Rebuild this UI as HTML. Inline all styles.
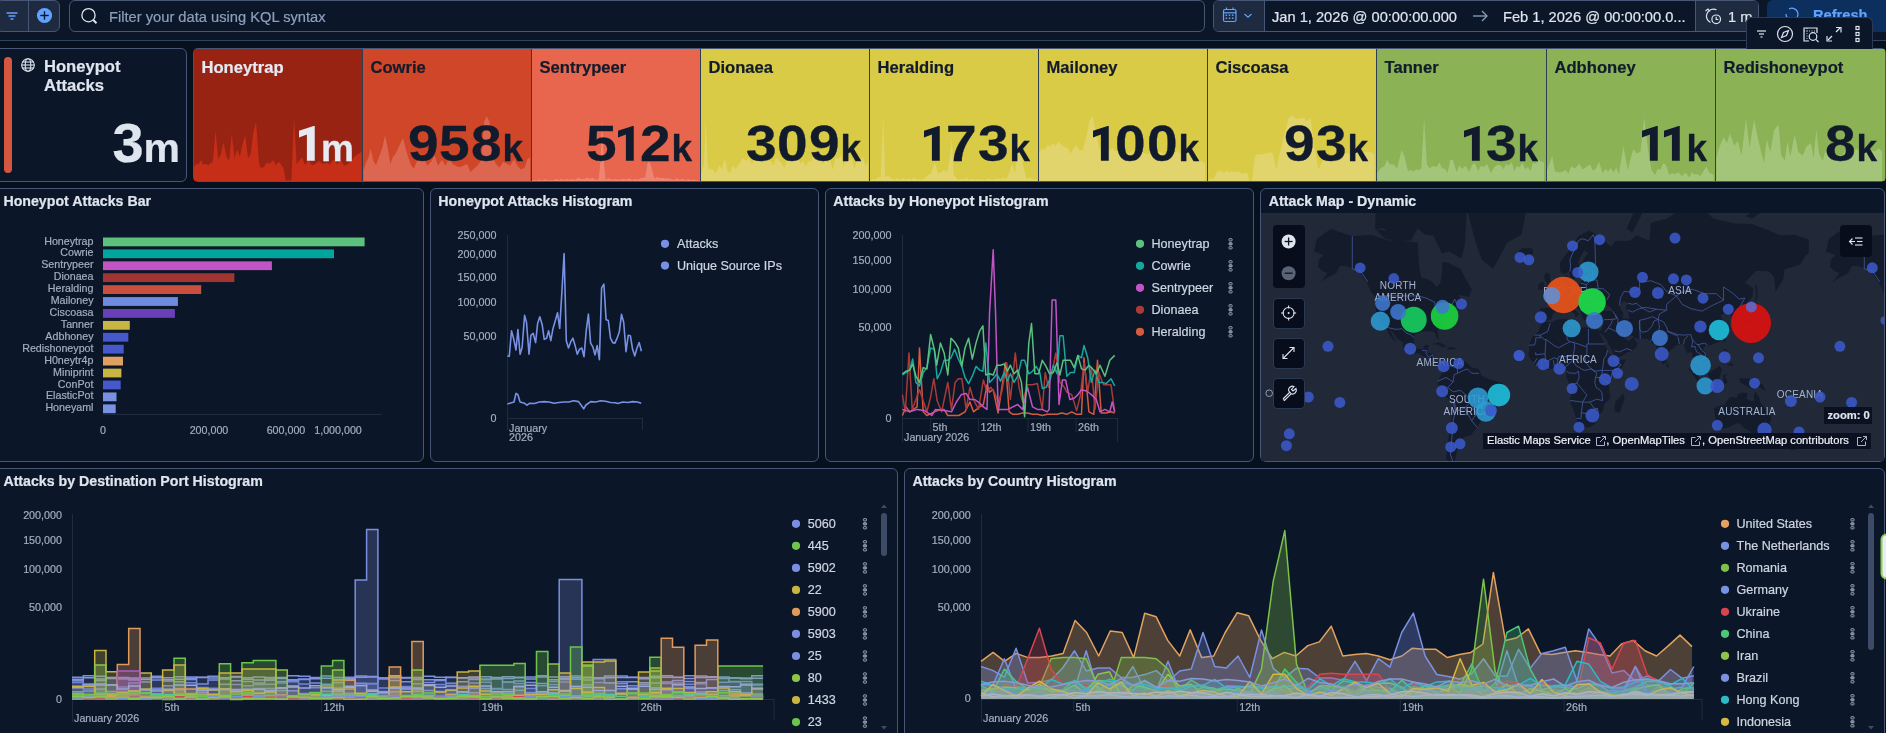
<!DOCTYPE html><html><head><meta charset="utf-8"><style>
*{box-sizing:border-box;margin:0;padding:0}
html,body{width:1886px;height:733px;overflow:hidden;background:#07101f;font-family:"Liberation Sans",sans-serif;}
.abs{position:absolute}
.panel{position:absolute;background:#0b1628;border:1px solid #465674;border-radius:6px;overflow:hidden}
.ptitle{position:absolute;font-weight:700;font-size:14.2px;color:#dfe5ef;white-space:nowrap}
svg{position:absolute;left:0;top:0;overflow:visible}
.t{position:absolute;white-space:nowrap}
body{-webkit-font-smoothing:antialiased}
.t,.ptitle{-webkit-text-stroke:0.2px currentColor}
#root{position:absolute;left:0;top:0;width:1886px;height:733px;will-change:transform}
</style></head><body><div id="root">

<div class="abs" style="left:0;top:0;width:1886px;height:41px;background:#0b1628;border-bottom:1px solid #34435d"></div>
<div class="abs" style="left:-4px;top:0px;width:64px;height:32px;background:#1d2a40;border:1px solid #465674;border-radius:6px"></div>
<div class="abs" style="left:28px;top:0;width:1px;height:31px;background:#465674"></div>
<svg width="60" height="31"><g stroke="#61a2ff" stroke-width="1.4" stroke-linecap="round"><line x1="7" y1="13" x2="17" y2="13"/><line x1="9" y1="16" x2="15" y2="16"/><line x1="11" y1="19" x2="13" y2="19"/></g><circle cx="44.5" cy="15.5" r="7.6" fill="#61a2ff"/><g stroke="#0b1628" stroke-width="1.4"><line x1="40.3" y1="15.5" x2="48.7" y2="15.5"/><line x1="44.5" y1="11.3" x2="44.5" y2="19.7"/></g></svg>
<div class="abs" style="left:69px;top:0px;width:1136px;height:32px;background:#0b1628;border:1px solid #465674;border-radius:6px"></div>
<svg width="120" height="31"><circle cx="88.5" cy="15.2" r="6.6" fill="none" stroke="#dfe5ef" stroke-width="1.3"/><line x1="93.3" y1="20" x2="96.5" y2="23.3" stroke="#dfe5ef" stroke-width="2"/></svg>
<div class="t" style="left:109px;top:9px;font-size:14.7px;color:#8e9fbc">Filter your data using KQL syntax</div>
<div class="abs" style="left:1213px;top:0px;width:546px;height:32px;background:#0b1628;border:1px solid #465674;border-radius:6px;overflow:hidden"><div class="abs" style="left:0;top:0;width:51px;height:32px;background:#1d2a40;border-right:1px solid #465674"></div><div class="abs" style="left:481px;top:0;width:64px;height:32px;background:#1d2a40;border-left:1px solid #465674"></div></div>
<svg width="1886" height="31"><g fill="none" stroke="#61a2ff" stroke-width="1.2"><rect x="1223.5" y="9.5" width="12.5" height="12" rx="1.5"/><line x1="1223.5" y1="12.8" x2="1236" y2="12.8"/><line x1="1226.5" y1="7.5" x2="1226.5" y2="10"/><line x1="1233" y1="7.5" x2="1233" y2="10"/></g><g fill="#61a2ff"><rect x="1225.5" y="14.5" width="1.6" height="1.4"/><rect x="1228.7" y="14.5" width="1.6" height="1.4"/><rect x="1231.9" y="14.5" width="1.6" height="1.4"/><rect x="1225.5" y="17.5" width="1.6" height="1.4"/><rect x="1228.7" y="17.5" width="1.6" height="1.4"/><rect x="1231.9" y="17.5" width="1.6" height="1.4"/></g><polyline points="1244.5,14 1248,17.2 1251.5,14" fill="none" stroke="#61a2ff" stroke-width="1.2"/><g stroke="#8e9fbc" stroke-width="1.3" fill="none"><line x1="1473" y1="16" x2="1487" y2="16"/><polyline points="1482,11 1487,16 1482,21"/></g><g stroke="#dfe5ef" stroke-width="1.2" fill="none"><path d="M1716.5,9.8 A6.8,6.8 0 1 0 1710.5,22.5"/><polyline points="1705.5,11 1708,9 1710,11.5"/><circle cx="1716.2" cy="19.3" r="4.3" fill="#1d2a40"/><polyline points="1716.2,16.8 1716.2,19.5 1718.4,19.5"/></g></svg>
<div class="t" style="left:1272px;top:9px;font-size:14.65px;color:#dfe5ef">Jan 1, 2026 @ 00:00:00.000</div>
<div class="t" style="left:1503px;top:9px;font-size:14.65px;color:#dfe5ef">Feb 1, 2026 @ 00:00:00.0...</div>
<div class="t" style="left:1728px;top:9px;font-size:14.65px;color:#dfe5ef">1 m</div>
<div class="abs" style="left:1767px;top:0px;width:124px;height:32px;background:#0c2f5e;border-radius:6px"></div>
<div class="t" style="left:1813px;top:7px;font-size:14.65px;font-weight:700;color:#61a2ff">Refresh</div>
<svg width="1886" height="31"><path d="M1789,9 A6,6 0 1 1 1786,14" fill="none" stroke="#61a2ff" stroke-width="1.3"/></svg>
<div class="abs" style="left:1746px;top:17px;width:127px;height:32px;background:#0b1628;border:1px solid #2b3a52;border-bottom:none;border-radius:6px 6px 0 0;z-index:5"><svg width="127" height="32"><g stroke="#dfe5ef" stroke-width="1.2" fill="none"><line x1="10" y1="13" x2="19" y2="13"/><line x1="12" y1="16" x2="17" y2="16"/><line x1="13.5" y1="19" x2="15.5" y2="19"/><circle cx="38" cy="16" r="7.5"/><path d="M41.5,12.5 L39.5,17.5 L34.5,19.5 L36.5,14.5 Z"/><path d="M62,23 L57,23 L57,10 L70,10 L70,15" /><g stroke-dasharray="1 1.5" stroke-width="0.9"><line x1="57" y1="13" x2="70" y2="13"/><line x1="60" y1="10" x2="60" y2="23"/></g><circle cx="66" cy="18.5" r="3.8"/><line x1="68.8" y1="21.3" x2="71.5" y2="24"/><line x1="81" y1="22" x2="85" y2="18"/><line x1="89" y1="14" x2="93" y2="10"/><polyline points="80,18 80,23 85,23"/><polyline points="89,9.5 94,9.5 94,14.5"/><rect x="109" y="8.5" width="3" height="3"/><rect x="109" y="14.5" width="3" height="3"/><rect x="109" y="20.5" width="3" height="3"/></g></svg></div>
<div class="panel" style="left:-6px;top:48px;width:193px;height:134px"></div>
<div class="abs" style="left:4px;top:57px;width:8px;height:116px;background:#d6573f;border-radius:4px"></div>
<svg width="60" height="80"><g fill="none" stroke="#dfe5ef" stroke-width="1.1"><circle cx="28" cy="65" r="6.3"/><ellipse cx="28" cy="65" rx="2.8" ry="6.3"/><line x1="21.7" y1="65" x2="34.3" y2="65"/><line x1="22.5" y1="62" x2="33.5" y2="62"/><line x1="22.5" y1="68" x2="33.5" y2="68"/></g></svg>
<div class="t" style="left:44px;top:57px;font-size:16.6px;font-weight:700;color:#dfe5ef;line-height:19px">Honeypot<br>Attacks</div>
<div class="t" style="right:1706px;top:113px;color:#dfe5ef;font-weight:700;line-height:60px"><span style="font-size:56px">3</span><span style="font-size:41px">m</span></div>
<div class="abs" style="left:193px;top:48px;width:1693px;height:134px;border-radius:5px;overflow:hidden;background:#465674">
<svg width="1693" height="134"><rect x="1" y="1" width="168" height="132" fill="#982312"/><clipPath id="c0"><rect x="1" y="1" width="168" height="132"/></clipPath><path d="M0.9,133 L0.9,119.4 L3.6,115.4 L5.4,116.4 L8.1,111.9 L9.9,116.8 L12.6,115.8 L15.3,117.2 L18.0,115.0 L19.8,114.0 L22.5,83.0 L25.2,111.1 L27.9,106.6 L30.6,94.2 L33.4,108.5 L36.1,112.7 L38.8,85.9 L41.5,110.4 L44.2,101.5 L46.9,108.7 L49.6,95.8 L52.3,87.8 L55.0,110.2 L57.7,105.9 L60.4,84.0 L63.1,73.7 L65.8,113.5 L67.6,120.2 L71.2,118.8 L73.9,114.2 L76.6,115.9 L80.2,112.0 L82.9,117.2 L85.6,113.7 L88.3,116.6 L91.0,121.9 L92.8,133.0 L95.5,131.9 L98.3,133.0 L101.0,69.6 L103.7,116.2 L106.4,112.6 L109.1,109.3 L111.8,116.9 L115.4,112.1 L119.0,117.4 L122.6,115.7 L126.2,113.1 L129.8,116.1 L133.4,115.0 L137.0,116.3 L140.6,111.3 L144.2,116.3 L147.8,112.6 L151.4,117.7 L155.0,116.3 L158.6,112.6 L162.2,107.9 L165.9,105.5 L168.6,103.5 L168.6,133 Z" fill="#c62e18" clip-path="url(#c0)"/><rect x="170" y="1" width="168" height="132" fill="#cf4629"/><clipPath id="c1"><rect x="170" y="1" width="168" height="132"/></clipPath><path d="M170.4,133 L170.4,122.6 L173.1,114.5 L175.8,108.9 L177.6,100.2 L180.3,112.7 L183.0,117.2 L185.7,109.8 L189.3,99.9 L192.0,87.3 L194.7,99.8 L197.4,115.9 L200.1,108.4 L202.8,105.6 L205.5,99.2 L210.0,90.0 L212.7,100.8 L215.4,110.0 L218.1,117.3 L220.8,120.7 L223.5,113.9 L227.1,105.8 L230.8,111.2 L234.4,117.8 L238.0,113.8 L241.6,107.5 L245.2,117.7 L248.8,111.7 L252.4,117.8 L256.0,111.2 L259.6,115.9 L263.2,118.0 L266.8,119.2 L270.4,117.7 L274.0,116.0 L277.6,124.0 L281.2,120.3 L284.8,117.5 L288.4,111.4 L291.1,73.4 L293.9,68.3 L296.6,74.0 L299.3,108.2 L302.9,116.1 L306.5,119.8 L310.1,113.8 L313.7,115.8 L317.3,117.6 L320.9,111.0 L324.5,117.8 L328.1,121.4 L331.7,119.8 L334.4,111.2 L337.1,108.9 L337.1,133 Z" fill="#dc6650" clip-path="url(#c1)"/><rect x="169" y="1" width="1" height="132" fill="#2f3d52"/><rect x="339" y="1" width="168" height="132" fill="#e8654e"/><clipPath id="c2"><rect x="339" y="1" width="168" height="132"/></clipPath><path d="M337.9,133 L337.9,132.3 L340.8,131.9 L343.6,132.4 L346.5,131.6 L349.3,132.8 L352.2,131.1 L355.0,132.6 L357.7,132.0 L360.4,132.3 L363.1,130.8 L365.8,132.0 L368.5,130.9 L371.3,131.9 L374.0,130.7 L376.7,131.9 L379.4,131.1 L382.1,131.9 L385.1,129.8 L388.1,131.0 L391.1,130.9 L394.0,129.6 L396.9,131.1 L399.7,129.7 L402.6,131.8 L405.5,131.6 L407.3,116.3 L409.1,69.6 L410.9,116.1 L412.7,131.7 L415.6,130.0 L418.5,131.8 L421.4,130.9 L424.3,131.6 L427.1,131.5 L430.1,130.7 L433.1,131.4 L436.2,130.2 L439.2,131.7 L442.2,130.9 L445.2,131.6 L448.8,129.9 L452.4,129.3 L454.2,116.5 L456.0,112.8 L457.8,116.5 L461.4,130.7 L464.1,128.8 L466.8,130.0 L469.7,129.7 L472.6,130.6 L475.5,130.2 L478.3,131.3 L481.2,131.7 L484.0,130.3 L486.8,131.8 L489.6,130.6 L492.4,132.2 L495.2,130.9 L498.0,132.1 L500.9,131.4 L503.7,132.2 L506.5,132.3 L506.5,133 Z" fill="#ee8573" clip-path="url(#c2)"/><rect x="338" y="1" width="1" height="132" fill="#2f3d52"/><rect x="508" y="1" width="168" height="132" fill="#d9cb45"/><clipPath id="c3"><rect x="508" y="1" width="168" height="132"/></clipPath><path d="M508.3,133 L508.3,125.2 L511.0,117.1 L512.8,71.1 L514.6,116.9 L516.4,122.0 L519.1,120.3 L522.7,125.4 L526.3,116.9 L529.0,121.3 L531.7,109.8 L534.4,122.9 L537.1,124.9 L539.8,117.8 L542.5,121.1 L546.1,116.0 L549.7,110.5 L553.3,112.5 L556.0,109.6 L558.7,116.4 L561.4,111.0 L564.1,112.6 L566.9,110.7 L569.6,114.9 L572.3,111.0 L575.0,112.3 L577.7,113.0 L580.4,117.6 L583.1,109.4 L585.8,112.6 L588.5,114.7 L591.2,120.1 L593.9,112.5 L596.6,111.1 L599.3,108.6 L602.0,112.6 L604.7,107.9 L607.4,115.4 L610.1,112.7 L612.8,118.3 L615.5,112.9 L618.2,113.9 L620.9,105.2 L623.6,107.7 L626.3,106.6 L629.0,116.6 L631.8,111.2 L634.5,114.7 L637.2,112.6 L639.9,122.1 L642.6,109.2 L645.3,110.9 L648.0,107.2 L650.7,118.4 L653.4,108.7 L656.1,112.7 L658.8,110.2 L661.5,121.2 L664.2,110.9 L666.9,113.0 L669.6,108.8 L672.3,117.9 L675.0,114.3 L675.0,133 Z" fill="#e2d46c" clip-path="url(#c3)"/><rect x="507" y="1" width="1" height="132" fill="#2f3d52"/><rect x="677" y="1" width="168" height="132" fill="#d9cb45"/><clipPath id="c4"><rect x="677" y="1" width="168" height="132"/></clipPath><path d="M676.8,133 L676.8,132.8 L679.5,130.9 L682.2,131.9 L684.9,129.2 L687.6,129.4 L690.3,67.8 L692.1,129.1 L695.4,128.0 L698.7,131.0 L702.0,131.8 L704.7,129.7 L707.4,132.0 L710.2,129.9 L712.9,131.9 L715.6,129.9 L718.3,132.0 L721.0,129.5 L723.7,131.6 L726.4,131.2 L729.1,131.7 L732.7,129.8 L735.4,126.8 L738.1,125.5 L741.7,114.8 L745.3,125.4 L748.9,123.8 L750.7,121.9 L754.3,123.7 L757.0,109.0 L758.8,89.8 L760.6,127.1 L765.1,132.0 L767.9,130.6 L770.7,131.7 L773.5,129.5 L776.2,132.1 L779.0,130.8 L781.8,131.9 L784.6,131.1 L787.3,132.0 L790.1,131.4 L792.9,132.1 L795.6,130.1 L798.4,131.5 L801.2,131.5 L804.3,130.2 L807.5,131.2 L810.7,129.8 L813.8,131.2 L817.4,120.4 L819.2,116.2 L821.9,125.5 L826.4,87.5 L830.0,116.7 L833.6,131.2 L836.9,129.5 L840.3,131.7 L843.6,131.4 L843.6,133 Z" fill="#e2d46c" clip-path="url(#c4)"/><rect x="676" y="1" width="1" height="132" fill="#2f3d52"/><rect x="846" y="1" width="168" height="132" fill="#d9cb45"/><clipPath id="c5"><rect x="846" y="1" width="168" height="132"/></clipPath><path d="M846.3,133 L846.3,103.8 L849.0,100.7 L851.7,102.1 L854.4,97.2 L857.1,98.5 L859.8,95.3 L862.5,97.8 L865.2,93.5 L867.9,96.5 L871.5,98.9 L875.1,100.7 L877.8,105.8 L880.5,100.3 L883.2,96.7 L885.9,101.6 L889.5,102.8 L893.1,89.9 L896.7,72.0 L899.4,68.0 L902.1,80.3 L905.8,98.7 L909.4,104.5 L913.0,101.5 L916.6,102.8 L919.3,99.9 L922.0,103.5 L924.7,101.8 L927.4,104.6 L930.4,103.4 L933.4,105.1 L936.4,105.1 L939.4,102.2 L942.4,104.2 L945.4,103.6 L948.4,103.0 L951.4,105.2 L954.4,106.4 L957.4,104.5 L960.4,104.9 L963.4,104.4 L966.4,103.5 L969.5,105.0 L972.5,105.7 L975.5,103.5 L978.5,105.0 L981.5,104.8 L984.2,103.1 L986.9,105.8 L989.6,104.3 L992.3,105.5 L995.9,103.3 L999.5,107.2 L1002.2,108.6 L1004.9,112.6 L1008.5,112.9 L1012.1,116.1 L1012.1,133 Z" fill="#e2d46c" clip-path="url(#c5)"/><rect x="845" y="1" width="1" height="132" fill="#2f3d52"/><rect x="1015" y="1" width="168" height="132" fill="#d9cb45"/><clipPath id="c6"><rect x="1015" y="1" width="168" height="132"/></clipPath><path d="M1014.8,133 L1014.8,132.3 L1017.5,130.3 L1020.2,131.6 L1023.8,124.3 L1027.4,122.4 L1031.0,124.7 L1033.7,122.7 L1036.4,124.2 L1039.1,123.3 L1041.8,124.1 L1045.4,123.6 L1049.1,125.9 L1051.8,124.5 L1054.5,125.3 L1056.3,133.0 L1059.0,132.8 L1061.7,108.7 L1064.4,106.1 L1067.1,106.8 L1070.7,105.7 L1074.3,105.6 L1077.0,104.3 L1079.7,104.9 L1083.3,121.8 L1086.0,108.1 L1088.7,98.3 L1092.3,82.7 L1095.9,69.5 L1099.5,67.8 L1103.1,71.3 L1105.8,70.5 L1108.5,70.3 L1111.3,70.6 L1114.0,72.9 L1117.6,70.0 L1121.2,98.2 L1125.7,121.5 L1128.4,114.7 L1131.1,111.7 L1133.8,111.1 L1136.5,108.3 L1139.2,107.5 L1141.9,105.5 L1144.6,106.7 L1147.3,105.1 L1150.0,105.4 L1152.7,105.2 L1155.4,105.8 L1158.1,105.3 L1160.8,106.5 L1163.5,104.5 L1166.2,105.1 L1168.9,103.6 L1171.6,104.2 L1175.2,103.4 L1178.9,104.7 L1181.6,107.1 L1181.6,133 Z" fill="#e2d46c" clip-path="url(#c6)"/><rect x="1014" y="1" width="1" height="132" fill="#2f3d52"/><rect x="1184" y="1" width="169" height="132" fill="#8bb356"/><clipPath id="c7"><rect x="1184" y="1" width="169" height="132"/></clipPath><path d="M1184.3,133 L1184.3,125.1 L1187.9,120.0 L1191.5,118.0 L1194.2,112.1 L1196.9,116.4 L1200.5,116.3 L1204.1,120.6 L1208.6,102.1 L1211.3,107.7 L1214.9,123.0 L1217.6,122.1 L1220.3,123.6 L1223.0,121.5 L1225.7,122.1 L1228.4,120.5 L1231.1,70.3 L1233.8,116.3 L1236.5,120.3 L1240.1,118.1 L1243.8,118.9 L1246.5,114.3 L1249.2,120.6 L1251.9,120.7 L1254.6,124.7 L1257.3,112.1 L1260.0,111.9 L1263.6,124.2 L1266.3,117.3 L1269.0,121.0 L1272.6,117.8 L1276.2,123.9 L1278.9,117.3 L1281.6,115.0 L1285.2,123.0 L1287.9,118.0 L1290.6,119.0 L1294.2,116.3 L1297.8,125.2 L1301.4,119.1 L1305.0,116.6 L1307.8,117.5 L1310.5,121.3 L1313.2,116.1 L1315.9,117.7 L1318.6,114.1 L1321.3,122.9 L1324.0,118.0 L1326.7,119.4 L1329.4,114.4 L1332.1,121.3 L1334.8,119.1 L1337.5,123.2 L1340.2,114.1 L1342.9,116.1 L1345.6,111.3 L1348.3,113.9 L1351.0,114.3 L1351.0,133 Z" fill="#a3c57a" clip-path="url(#c7)"/><rect x="1183" y="1" width="1" height="132" fill="#2f3d52"/><rect x="1354" y="1" width="168" height="132" fill="#8bb356"/><clipPath id="c8"><rect x="1354" y="1" width="168" height="132"/></clipPath><path d="M1353.8,133 L1353.8,123.3 L1356.5,115.2 L1359.2,108.3 L1361.9,123.4 L1366.4,124.6 L1370.0,123.8 L1372.7,122.0 L1375.4,125.8 L1378.1,118.2 L1381.7,120.4 L1386.3,116.0 L1389.9,121.6 L1393.5,119.0 L1397.1,116.6 L1399.8,122.4 L1402.5,121.0 L1406.1,114.0 L1409.7,125.2 L1412.4,120.7 L1415.1,123.4 L1417.8,120.0 L1420.5,124.8 L1423.2,119.6 L1425.9,126.5 L1430.4,98.5 L1434.9,122.3 L1437.6,110.4 L1440.3,101.6 L1443.9,105.5 L1447.5,103.5 L1451.2,69.8 L1454.8,99.9 L1458.4,121.8 L1462.0,127.2 L1464.7,120.7 L1467.4,122.1 L1470.1,115.2 L1472.8,116.4 L1476.4,127.3 L1479.1,124.9 L1481.8,126.2 L1485.4,124.3 L1489.0,128.2 L1492.6,124.5 L1496.2,129.6 L1498.9,124.3 L1501.6,126.5 L1504.3,126.0 L1507.0,128.2 L1510.6,123.3 L1513.3,118.6 L1516.1,124.5 L1520.6,126.9 L1520.6,133 Z" fill="#a3c57a" clip-path="url(#c8)"/><rect x="1353" y="1" width="1" height="132" fill="#2f3d52"/><rect x="1523" y="1" width="169" height="132" fill="#8bb356"/><clipPath id="c9"><rect x="1523" y="1" width="169" height="132"/></clipPath><path d="M1523.3,133 L1523.3,110.8 L1526.0,99.9 L1530.5,89.3 L1534.1,94.9 L1536.8,85.5 L1541.3,97.8 L1544.9,93.0 L1548.5,107.5 L1553.0,71.3 L1556.6,99.6 L1561.1,71.3 L1564.7,89.7 L1568.3,104.6 L1571.0,114.9 L1573.7,91.4 L1577.3,104.1 L1581.0,82.4 L1585.5,76.4 L1588.2,107.2 L1591.8,112.6 L1594.5,93.2 L1597.2,108.7 L1601.7,86.7 L1605.3,104.2 L1609.8,107.4 L1613.4,98.7 L1617.9,94.9 L1620.6,110.3 L1623.3,82.1 L1626.0,105.7 L1629.6,112.9 L1633.2,100.6 L1636.8,109.2 L1640.4,105.8 L1644.0,109.7 L1646.8,106.9 L1649.5,107.8 L1652.2,102.1 L1654.9,109.1 L1657.6,105.5 L1660.3,106.9 L1663.0,100.4 L1665.7,102.5 L1668.4,98.7 L1671.1,105.9 L1673.8,104.0 L1676.5,104.9 L1679.2,102.5 L1681.9,103.4 L1685.5,100.6 L1689.1,103.5 L1689.1,133 Z" fill="#a3c57a" clip-path="url(#c9)"/><rect x="1522" y="1" width="1" height="132" fill="#2f3d52"/></svg>
<div class="t" style="left:8.5px;top:10px;font-size:16.6px;font-weight:700;color:#e6eaf3">Honeytrap</div>
<div class="t" style="left:1.0px;width:160.0px;text-align:right;top:70px;font-size:50px;line-height:52px;font-weight:700;color:#e6eaf3;-webkit-text-stroke:0.3px #e6eaf3"><span style="display:inline-block;width:22.4px;height:35px;position:relative"><svg width="24" height="35" style="position:absolute;left:0;top:0"><polygon points="0,4.65 14.6,0 15.75,0 15.75,34.8 7.9,34.8 7.9,8.5 0,11.5" fill="#e6eaf3"/></svg></span><span style="font-size:37px">m</span></div>
<div class="t" style="left:177.5px;top:10px;font-size:16.6px;font-weight:700;color:#111b2c">Cowrie</div>
<div class="t" style="left:170.0px;width:160.0px;text-align:right;top:70px;font-size:50px;line-height:52px;font-weight:700;color:#111b2c;-webkit-text-stroke:0.3px #111b2c"><span style="display:inline-block;width:31.5px;text-align:left"><span style="display:inline-block;transform:scaleX(1.1);transform-origin:0 0">9</span></span><span style="display:inline-block;width:31.5px;text-align:left"><span style="display:inline-block;transform:scaleX(1.1);transform-origin:0 0">5</span></span><span style="display:inline-block;width:31.5px;text-align:left"><span style="display:inline-block;transform:scaleX(1.1);transform-origin:0 0">8</span></span><span style="font-size:37px">k</span></div>
<div class="t" style="left:346.5px;top:10px;font-size:16.6px;font-weight:700;color:#111b2c">Sentrypeer</div>
<div class="t" style="left:339.0px;width:160.0px;text-align:right;top:70px;font-size:50px;line-height:52px;font-weight:700;color:#111b2c;-webkit-text-stroke:0.3px #111b2c"><span style="display:inline-block;width:31.5px;text-align:left"><span style="display:inline-block;transform:scaleX(1.1);transform-origin:0 0">5</span></span><span style="display:inline-block;width:22.4px;height:35px;position:relative"><svg width="24" height="35" style="position:absolute;left:0;top:0"><polygon points="0,4.65 14.6,0 15.75,0 15.75,34.8 7.9,34.8 7.9,8.5 0,11.5" fill="#111b2c"/></svg></span><span style="display:inline-block;width:31.5px;text-align:left"><span style="display:inline-block;transform:scaleX(1.1);transform-origin:0 0">2</span></span><span style="font-size:37px">k</span></div>
<div class="t" style="left:515.5px;top:10px;font-size:16.6px;font-weight:700;color:#111b2c">Dionaea</div>
<div class="t" style="left:508.0px;width:160.0px;text-align:right;top:70px;font-size:50px;line-height:52px;font-weight:700;color:#111b2c;-webkit-text-stroke:0.3px #111b2c"><span style="display:inline-block;width:31.5px;text-align:left"><span style="display:inline-block;transform:scaleX(1.1);transform-origin:0 0">3</span></span><span style="display:inline-block;width:31.5px;text-align:left"><span style="display:inline-block;transform:scaleX(1.1);transform-origin:0 0">0</span></span><span style="display:inline-block;width:31.5px;text-align:left"><span style="display:inline-block;transform:scaleX(1.1);transform-origin:0 0">9</span></span><span style="font-size:37px">k</span></div>
<div class="t" style="left:684.5px;top:10px;font-size:16.6px;font-weight:700;color:#111b2c">Heralding</div>
<div class="t" style="left:677.0px;width:160.0px;text-align:right;top:70px;font-size:50px;line-height:52px;font-weight:700;color:#111b2c;-webkit-text-stroke:0.3px #111b2c"><span style="display:inline-block;width:22.4px;height:35px;position:relative"><svg width="24" height="35" style="position:absolute;left:0;top:0"><polygon points="0,4.65 14.6,0 15.75,0 15.75,34.8 7.9,34.8 7.9,8.5 0,11.5" fill="#111b2c"/></svg></span><span style="display:inline-block;width:31.5px;text-align:left"><span style="display:inline-block;transform:scaleX(1.1);transform-origin:0 0">7</span></span><span style="display:inline-block;width:31.5px;text-align:left"><span style="display:inline-block;transform:scaleX(1.1);transform-origin:0 0">3</span></span><span style="font-size:37px">k</span></div>
<div class="t" style="left:853.5px;top:10px;font-size:16.6px;font-weight:700;color:#111b2c">Mailoney</div>
<div class="t" style="left:846.0px;width:160.0px;text-align:right;top:70px;font-size:50px;line-height:52px;font-weight:700;color:#111b2c;-webkit-text-stroke:0.3px #111b2c"><span style="display:inline-block;width:22.4px;height:35px;position:relative"><svg width="24" height="35" style="position:absolute;left:0;top:0"><polygon points="0,4.65 14.6,0 15.75,0 15.75,34.8 7.9,34.8 7.9,8.5 0,11.5" fill="#111b2c"/></svg></span><span style="display:inline-block;width:31.5px;text-align:left"><span style="display:inline-block;transform:scaleX(1.1);transform-origin:0 0">0</span></span><span style="display:inline-block;width:31.5px;text-align:left"><span style="display:inline-block;transform:scaleX(1.1);transform-origin:0 0">0</span></span><span style="font-size:37px">k</span></div>
<div class="t" style="left:1022.5px;top:10px;font-size:16.6px;font-weight:700;color:#111b2c">Ciscoasa</div>
<div class="t" style="left:1015.0px;width:160.0px;text-align:right;top:70px;font-size:50px;line-height:52px;font-weight:700;color:#111b2c;-webkit-text-stroke:0.3px #111b2c"><span style="display:inline-block;width:31.5px;text-align:left"><span style="display:inline-block;transform:scaleX(1.1);transform-origin:0 0">9</span></span><span style="display:inline-block;width:31.5px;text-align:left"><span style="display:inline-block;transform:scaleX(1.1);transform-origin:0 0">3</span></span><span style="font-size:37px">k</span></div>
<div class="t" style="left:1191.5px;top:10px;font-size:16.6px;font-weight:700;color:#111b2c">Tanner</div>
<div class="t" style="left:1184.0px;width:161.0px;text-align:right;top:70px;font-size:50px;line-height:52px;font-weight:700;color:#111b2c;-webkit-text-stroke:0.3px #111b2c"><span style="display:inline-block;width:22.4px;height:35px;position:relative"><svg width="24" height="35" style="position:absolute;left:0;top:0"><polygon points="0,4.65 14.6,0 15.75,0 15.75,34.8 7.9,34.8 7.9,8.5 0,11.5" fill="#111b2c"/></svg></span><span style="display:inline-block;width:31.5px;text-align:left"><span style="display:inline-block;transform:scaleX(1.1);transform-origin:0 0">3</span></span><span style="font-size:37px">k</span></div>
<div class="t" style="left:1361.5px;top:10px;font-size:16.6px;font-weight:700;color:#111b2c">Adbhoney</div>
<div class="t" style="left:1354.0px;width:160.0px;text-align:right;top:70px;font-size:50px;line-height:52px;font-weight:700;color:#111b2c;-webkit-text-stroke:0.3px #111b2c"><span style="display:inline-block;width:22.4px;height:35px;position:relative"><svg width="24" height="35" style="position:absolute;left:0;top:0"><polygon points="0,4.65 14.6,0 15.75,0 15.75,34.8 7.9,34.8 7.9,8.5 0,11.5" fill="#111b2c"/></svg></span><span style="display:inline-block;width:22.4px;height:35px;position:relative"><svg width="24" height="35" style="position:absolute;left:0;top:0"><polygon points="0,4.65 14.6,0 15.75,0 15.75,34.8 7.9,34.8 7.9,8.5 0,11.5" fill="#111b2c"/></svg></span><span style="font-size:37px">k</span></div>
<div class="t" style="left:1530.5px;top:10px;font-size:16.6px;font-weight:700;color:#111b2c">Redishoneypot</div>
<div class="t" style="left:1523.0px;width:161.0px;text-align:right;top:70px;font-size:50px;line-height:52px;font-weight:700;color:#111b2c;-webkit-text-stroke:0.3px #111b2c"><span style="display:inline-block;width:31.5px;text-align:left"><span style="display:inline-block;transform:scaleX(1.1);transform-origin:0 0">8</span></span><span style="font-size:37px">k</span></div>
</div>
<div class="panel" style="left:-6px;top:188px;width:430px;height:274px;"></div>
<div class="panel" style="left:430px;top:188px;width:389px;height:274px;"></div>
<div class="panel" style="left:825px;top:188px;width:429px;height:274px;"></div>
<div class="panel" style="left:1260px;top:188px;width:625px;height:274px;"></div>
<div class="ptitle" style="left:3.4px;top:192.9px;font-size:14.2px">Honeypot Attacks Bar</div>
<div class="ptitle" style="left:438.3px;top:192.9px;font-size:14.2px">Honeypot Attacks Histogram</div>
<div class="ptitle" style="left:833.3px;top:192.9px;font-size:14.2px">Attacks by Honeypot Histogram</div>
<div class="ptitle" style="left:1268.8px;top:192.9px;font-size:14.2px">Attack Map - Dynamic</div>
<svg width="430" height="470"><rect x="103" y="237.50" width="261.6" height="8.8" fill="#5cc17c"/><rect x="103" y="249.42" width="231.0" height="8.8" fill="#00a69b"/><rect x="103" y="261.34" width="168.9" height="8.8" fill="#c155c4"/><rect x="103" y="273.26" width="131.4" height="8.8" fill="#a23532"/><rect x="103" y="285.18" width="98.2" height="8.8" fill="#c9503e"/><rect x="103" y="297.10" width="74.9" height="8.8" fill="#6f8be0"/><rect x="103" y="309.02" width="71.9" height="8.8" fill="#6a40b8"/><rect x="103" y="320.94" width="26.8" height="8.8" fill="#c8b542"/><rect x="103" y="332.86" width="25.3" height="8.8" fill="#4558cc"/><rect x="103" y="344.78" width="20.7" height="8.8" fill="#4558cc"/><rect x="103" y="356.70" width="20.0" height="8.8" fill="#e0a060"/><rect x="103" y="368.62" width="18.4" height="8.8" fill="#c8b542"/><rect x="103" y="380.54" width="17.7" height="8.8" fill="#4558cc"/><rect x="103" y="392.46" width="13.5" height="8.8" fill="#7a90e0"/><rect x="103" y="404.38" width="12.7" height="8.8" fill="#7a90e0"/><line x1="103" y1="414.5" x2="382" y2="414.5" stroke="#1f2b3e" stroke-width="1"/></svg>
<div class="t" style="right:1792.5px;top:234.5px;font-size:10.7px;color:#a2aec2;font-weight:400">Honeytrap</div>
<div class="t" style="right:1792.5px;top:246.4px;font-size:10.7px;color:#a2aec2;font-weight:400">Cowrie</div>
<div class="t" style="right:1792.5px;top:258.3px;font-size:10.7px;color:#a2aec2;font-weight:400">Sentrypeer</div>
<div class="t" style="right:1792.5px;top:270.2px;font-size:10.7px;color:#a2aec2;font-weight:400">Dionaea</div>
<div class="t" style="right:1792.5px;top:282.2px;font-size:10.7px;color:#a2aec2;font-weight:400">Heralding</div>
<div class="t" style="right:1792.5px;top:294.1px;font-size:10.7px;color:#a2aec2;font-weight:400">Mailoney</div>
<div class="t" style="right:1792.5px;top:306.0px;font-size:10.7px;color:#a2aec2;font-weight:400">Ciscoasa</div>
<div class="t" style="right:1792.5px;top:317.9px;font-size:10.7px;color:#a2aec2;font-weight:400">Tanner</div>
<div class="t" style="right:1792.5px;top:329.8px;font-size:10.7px;color:#a2aec2;font-weight:400">Adbhoney</div>
<div class="t" style="right:1792.5px;top:341.8px;font-size:10.7px;color:#a2aec2;font-weight:400">Redishoneypot</div>
<div class="t" style="right:1792.5px;top:353.7px;font-size:10.7px;color:#a2aec2;font-weight:400">H0neytr4p</div>
<div class="t" style="right:1792.5px;top:365.6px;font-size:10.7px;color:#a2aec2;font-weight:400">Miniprint</div>
<div class="t" style="right:1792.5px;top:377.5px;font-size:10.7px;color:#a2aec2;font-weight:400">ConPot</div>
<div class="t" style="right:1792.5px;top:389.4px;font-size:10.7px;color:#a2aec2;font-weight:400">ElasticPot</div>
<div class="t" style="right:1792.5px;top:401.4px;font-size:10.7px;color:#a2aec2;font-weight:400">Honeyaml</div>
<div class="t" style="left:-97.0px;width:400px;text-align:center;top:423.5px;font-size:10.7px;color:#a2aec2;font-weight:400">0</div>
<div class="t" style="left:9.0px;width:400px;text-align:center;top:423.5px;font-size:10.7px;color:#a2aec2;font-weight:400">200,000</div>
<div class="t" style="left:86.0px;width:400px;text-align:center;top:423.5px;font-size:10.7px;color:#a2aec2;font-weight:400">600,000</div>
<div class="t" style="left:138.0px;width:400px;text-align:center;top:423.5px;font-size:10.7px;color:#a2aec2;font-weight:400">1,000,000</div>
<svg width="1886" height="733"><g stroke="#1f2b3e" stroke-width="1" fill="none"><line x1="507.5" y1="235" x2="507.5" y2="430"/><line x1="507" y1="418.5" x2="643" y2="418.5"/><line x1="642.5" y1="418" x2="642.5" y2="430"/></g><polyline points="507.4,356.1 509.3,356.1 511.5,330.8 513.5,338.2 516.0,350.0 517.9,329.6 520.1,354.2 522.1,347.5 524.6,315.4 526.5,322.2 529.0,354.2 530.9,335.3 533.1,333.3 535.6,342.6 537.6,323.5 539.8,316.8 542.2,324.7 544.2,339.4 546.6,338.2 548.6,330.8 550.8,340.7 553.0,328.4 555.2,321.0 557.5,312.7 559.7,328.4 561.9,291.6 564.1,253.5 566.3,340.7 568.5,348.0 570.7,341.9 572.9,338.2 575.1,345.6 577.3,354.2 579.5,349.3 581.8,348.0 584.0,356.6 586.2,330.8 588.4,314.1 590.6,343.1 592.8,346.8 595.0,354.9 597.2,345.6 599.4,359.6 601.6,287.9 603.9,284.2 606.1,319.8 608.3,320.5 610.5,338.2 612.7,342.6 614.9,343.1 617.1,338.2 619.3,332.1 621.5,314.4 623.7,322.2 626.0,351.7 628.2,335.3 630.4,335.8 632.6,349.3 634.8,355.9 637.0,348.0 639.2,342.6 641.4,351.2" fill="none" stroke="#7891e3" stroke-width="1.6" stroke-linejoin="round"/><polyline points="507.4,404.0 512.3,402.5 514.0,402.0 516.0,393.4 517.9,394.7 520.1,402.0 524.6,403.3 527.0,405.2 529.5,403.3 534.4,403.5 539.3,402.0 544.2,401.6 549.1,402.0 554.0,403.3 558.9,402.5 563.8,402.0 568.7,402.0 573.7,400.8 578.6,401.6 581.0,405.0 583.7,408.9 585.9,405.0 590.8,401.6 595.8,402.0 600.7,400.8 605.6,401.3 610.5,402.5 615.4,402.8 617.8,403.5 622.8,402.0 627.7,402.5 632.6,401.6 637.5,402.0 641.2,403.3" fill="none" stroke="#7891e3" stroke-width="1.6" stroke-linejoin="round"/><circle cx="665" cy="243.8" r="4.1" fill="#7891e3"/><circle cx="665" cy="265.6" r="4.1" fill="#7891e3"/></svg>
<div class="t" style="right:1389.6px;top:229.3px;font-size:10.75px;color:#a2aec2;font-weight:400">250,000</div>
<div class="t" style="right:1389.6px;top:248.4px;font-size:10.75px;color:#a2aec2;font-weight:400">200,000</div>
<div class="t" style="right:1389.6px;top:270.6px;font-size:10.75px;color:#a2aec2;font-weight:400">150,000</div>
<div class="t" style="right:1389.6px;top:296.2px;font-size:10.75px;color:#a2aec2;font-weight:400">100,000</div>
<div class="t" style="right:1389.6px;top:330.2px;font-size:10.75px;color:#a2aec2;font-weight:400">50,000</div>
<div class="t" style="right:1389.6px;top:411.9px;font-size:10.75px;color:#a2aec2;font-weight:400">0</div>
<div class="t" style="left:509.0px;top:421.5px;font-size:10.75px;color:#a2aec2;font-weight:400">January</div>
<div class="t" style="left:509.0px;top:430.9px;font-size:10.75px;color:#a2aec2;font-weight:400">2026</div>
<div class="t" style="left:677.0px;top:236.7px;font-size:12.6px;color:#cfd6e2;font-weight:400">Attacks</div>
<div class="t" style="left:677.0px;top:258.5px;font-size:12.6px;color:#cfd6e2;font-weight:400">Unique Source IPs</div>
<svg width="1886" height="733"><g stroke="#1f2b3e" stroke-width="1" fill="none"><line x1="902.5" y1="235" x2="902.5" y2="442"/><line x1="902" y1="418.5" x2="1118" y2="418.5"/><line x1="1117.5" y1="418" x2="1117.5" y2="442"/><line x1="930.8" y1="419" x2="930.8" y2="432"/><line x1="978.5" y1="419" x2="978.5" y2="432"/><line x1="1028" y1="419" x2="1028" y2="432"/><line x1="1076" y1="419" x2="1076" y2="432"/></g><polyline points="902.4,415.5 906.0,406.9 909.7,411.8 913.4,409.4 917.1,406.9 919.5,348.0 923.2,411.8 926.9,415.5 934.3,411.8 941.6,409.4 944.1,409.4 947.8,415.5 958.8,415.5 965.0,411.8 969.9,402.0 973.5,411.8 979.7,406.9 983.4,404.5 987.0,384.8 989.5,392.2 993.2,389.7 998.1,413.0 1005.5,362.7 1009.1,411.8 1012.8,414.3 1017.7,414.3 1022.6,413.0 1027.5,413.0 1032.5,414.3 1037.4,414.3 1042.3,415.5 1047.2,414.3 1052.1,414.3 1057.0,414.3 1061.9,413.0 1066.8,414.3 1071.7,411.8 1076.6,414.3 1081.5,414.3 1084.0,357.8 1088.9,411.8 1093.8,414.3 1097.5,360.3 1101.2,413.0 1106.1,413.0 1111.0,411.8 1114.7,413.0" fill="none" stroke="#d65b3e" stroke-width="1.5" stroke-linejoin="round"/><polyline points="902.4,394.6 905.3,411.8 909.0,352.9 912.2,409.4 915.9,399.5 919.5,389.7 923.2,400.8 926.9,411.8 930.6,397.1 933.8,378.7 937.2,400.8 941.6,411.8 947.8,382.4 951.5,409.4 955.1,382.4 958.3,378.7 961.8,378.7 966.2,409.4 969.9,387.3 973.5,399.5 978.5,409.4 983.4,379.9 987.0,392.2 990.7,387.3 994.4,392.2 998.1,402.0 1001.8,392.2 1006.7,362.7 1010.4,399.5 1015.3,352.9 1019.0,387.3 1022.6,402.0 1027.5,384.8 1032.5,384.8 1037.4,383.6 1042.3,409.4 1045.2,372.5 1048.4,387.3 1052.1,372.5 1055.8,352.9 1059.9,382.4 1064.4,387.3 1066.8,392.2 1071.7,394.6 1076.6,410.6 1080.3,395.9 1084.0,362.7 1087.7,392.2 1091.4,367.6 1095.0,409.4 1098.7,372.5 1103.6,384.8 1111.0,384.8 1114.7,411.8" fill="none" stroke="#a83a38" stroke-width="1.5" stroke-linejoin="round"/><polyline points="902.4,409.4 909.7,411.8 917.1,409.4 924.5,410.6 931.8,415.5 935.5,409.4 944.1,410.6 951.5,411.8 956.4,402.0 961.3,394.6 966.2,393.4 969.9,399.5 974.8,399.5 979.7,403.2 983.4,406.9 987.0,409.4 989.5,313.6 993.2,249.8 995.6,313.6 998.1,409.4 1003.0,409.4 1007.9,409.4 1012.8,406.9 1017.7,404.5 1022.6,409.4 1027.5,387.3 1032.5,406.9 1037.4,409.4 1042.3,409.4 1047.2,411.8 1049.1,409.4 1052.1,300.1 1055.8,300.1 1059.0,404.5 1062.4,379.9 1065.6,379.9 1069.8,399.5 1074.2,398.3 1077.9,394.6 1081.5,389.7 1086.5,391.0 1091.4,394.6 1096.3,399.5 1100.0,411.8 1104.9,409.4 1109.8,411.8 1112.2,402.0 1114.7,411.8" fill="none" stroke="#c254c6" stroke-width="1.5" stroke-linejoin="round"/><polyline points="902.4,375.0 906.0,372.5 909.7,370.1 912.7,359.0 915.9,382.4 919.5,386.0 923.2,372.5 926.9,367.6 930.6,348.0 934.3,349.2 937.2,378.7 940.4,372.5 944.1,360.3 947.8,360.3 951.0,357.8 954.6,349.2 958.3,359.0 961.8,366.4 965.0,377.5 968.6,383.6 972.3,376.2 976.0,366.4 979.7,370.1 982.9,371.3 985.8,343.1 989.5,382.4 993.2,378.7 996.9,373.8 1000.5,381.1 1004.2,372.5 1007.4,381.1 1010.4,373.8 1014.0,382.4 1017.7,376.2 1021.4,360.3 1024.6,360.3 1028.8,373.8 1032.5,371.3 1036.1,366.4 1039.8,372.5 1042.3,388.5 1046.0,387.3 1049.6,379.9 1053.3,365.2 1057.0,373.8 1059.9,335.7 1063.1,335.7 1066.8,376.2 1070.5,372.5 1074.2,372.5 1077.9,355.4 1081.5,357.8 1084.0,345.5 1087.7,357.8 1091.4,382.4 1095.0,370.1 1098.7,382.4 1102.4,382.4 1106.1,383.6 1111.0,378.7 1114.7,386.0" fill="none" stroke="#17a89d" stroke-width="1.5" stroke-linejoin="round"/><polyline points="902.4,373.8 906.0,371.3 909.7,370.1 912.7,364.0 915.9,376.2 919.5,382.4 923.2,367.6 926.9,368.9 930.6,334.5 934.3,349.2 936.7,365.2 940.4,343.1 944.1,352.9 947.8,375.0 951.0,338.2 954.6,341.9 958.3,348.0 961.8,366.4 965.0,348.0 968.6,338.2 972.3,359.0 976.0,343.1 979.7,330.8 982.9,325.9 985.8,375.0 989.5,373.8 993.2,375.0 996.9,365.2 1000.5,365.2 1004.2,364.0 1007.4,371.3 1010.4,365.2 1014.0,373.8 1017.7,370.1 1021.4,382.4 1024.6,416.7 1028.8,343.1 1031.5,323.5 1034.9,373.8 1038.6,373.8 1042.3,360.3 1046.0,366.4 1049.6,373.8 1053.3,372.5 1057.0,362.7 1059.9,375.0 1063.1,360.3 1066.8,360.3 1070.5,360.3 1074.2,367.6 1077.9,355.4 1081.5,368.9 1085.2,370.1 1088.9,365.2 1092.6,368.9 1096.3,373.8 1100.0,365.2 1104.9,376.2 1109.8,360.3 1114.7,355.4" fill="none" stroke="#5cc17c" stroke-width="1.5" stroke-linejoin="round"/><circle cx="1140" cy="243.8" r="4.1" fill="#5cc17c"/><g fill="none" stroke="#9aa6ba" stroke-width="1"><rect x="1229" y="238.7" width="3.1" height="2.2" rx="0.5"/><rect x="1229" y="242.7" width="3.1" height="2.2" rx="0.5" fill="#6b778c"/><rect x="1229" y="246.7" width="3.1" height="2.2" rx="0.5"/></g><circle cx="1140" cy="265.8" r="4.1" fill="#17a89d"/><g fill="none" stroke="#9aa6ba" stroke-width="1"><rect x="1229" y="260.7" width="3.1" height="2.2" rx="0.5"/><rect x="1229" y="264.7" width="3.1" height="2.2" rx="0.5" fill="#6b778c"/><rect x="1229" y="268.7" width="3.1" height="2.2" rx="0.5"/></g><circle cx="1140" cy="287.8" r="4.1" fill="#c254c6"/><g fill="none" stroke="#9aa6ba" stroke-width="1"><rect x="1229" y="282.7" width="3.1" height="2.2" rx="0.5"/><rect x="1229" y="286.7" width="3.1" height="2.2" rx="0.5" fill="#6b778c"/><rect x="1229" y="290.7" width="3.1" height="2.2" rx="0.5"/></g><circle cx="1140" cy="309.8" r="4.1" fill="#a83a38"/><g fill="none" stroke="#9aa6ba" stroke-width="1"><rect x="1229" y="304.7" width="3.1" height="2.2" rx="0.5"/><rect x="1229" y="308.7" width="3.1" height="2.2" rx="0.5" fill="#6b778c"/><rect x="1229" y="312.7" width="3.1" height="2.2" rx="0.5"/></g><circle cx="1140" cy="331.8" r="4.1" fill="#d65b3e"/><g fill="none" stroke="#9aa6ba" stroke-width="1"><rect x="1229" y="326.7" width="3.1" height="2.2" rx="0.5"/><rect x="1229" y="330.7" width="3.1" height="2.2" rx="0.5" fill="#6b778c"/><rect x="1229" y="334.7" width="3.1" height="2.2" rx="0.5"/></g></svg>
<div class="t" style="right:994.6px;top:229.3px;font-size:10.75px;color:#a2aec2;font-weight:400">200,000</div>
<div class="t" style="right:994.6px;top:254.1px;font-size:10.75px;color:#a2aec2;font-weight:400">150,000</div>
<div class="t" style="right:994.6px;top:282.8px;font-size:10.75px;color:#a2aec2;font-weight:400">100,000</div>
<div class="t" style="right:994.6px;top:320.9px;font-size:10.75px;color:#a2aec2;font-weight:400">50,000</div>
<div class="t" style="right:994.6px;top:411.9px;font-size:10.75px;color:#a2aec2;font-weight:400">0</div>
<div class="t" style="left:932.5px;top:421.4px;font-size:10.75px;color:#a2aec2;font-weight:400">5th</div>
<div class="t" style="left:980.5px;top:421.4px;font-size:10.75px;color:#a2aec2;font-weight:400">12th</div>
<div class="t" style="left:1030.0px;top:421.4px;font-size:10.75px;color:#a2aec2;font-weight:400">19th</div>
<div class="t" style="left:1078.0px;top:421.4px;font-size:10.75px;color:#a2aec2;font-weight:400">26th</div>
<div class="t" style="left:904.0px;top:430.9px;font-size:10.75px;color:#a2aec2;font-weight:400">January 2026</div>
<div class="t" style="left:1151.5px;top:236.7px;font-size:12.6px;color:#cfd6e2;font-weight:400">Honeytrap</div>
<div class="t" style="left:1151.5px;top:258.7px;font-size:12.6px;color:#cfd6e2;font-weight:400">Cowrie</div>
<div class="t" style="left:1151.5px;top:280.7px;font-size:12.6px;color:#cfd6e2;font-weight:400">Sentrypeer</div>
<div class="t" style="left:1151.5px;top:302.7px;font-size:12.6px;color:#cfd6e2;font-weight:400">Dionaea</div>
<div class="t" style="left:1151.5px;top:324.7px;font-size:12.6px;color:#cfd6e2;font-weight:400">Heralding</div>
<div class="abs" style="left:1261px;top:212.5px;width:623px;height:248.5px;overflow:hidden;background:#212838"><svg width="623" height="248.5" viewBox="1261 212.5 623 248.5"><path d="M1313.9,251.1 L1316.7,239.0 L1322.4,234.2 L1330.9,228.6 L1352.3,235.8 L1370.8,234.2 L1389.2,240.2 L1399.2,240.2 L1417.7,242.1 L1419.1,265.4 L1421.2,276.5 L1431.9,280.8 L1436.2,286.4 L1440.4,282.8 L1441.9,272.5 L1442.6,261.5 L1449.0,262.4 L1454.0,265.4 L1460.4,268.3 L1465.3,277.8 L1471.7,288.7 L1468.9,296.5 L1458.9,294.3 L1461.1,300.7 L1466.0,302.8 L1458.9,305.8 L1453.2,306.8 L1453.2,310.2 L1447.6,312.5 L1444.7,318.9 L1444.7,322.4 L1437.6,328.4 L1439.0,338.1 L1436.9,338.1 L1434.8,331.7 L1431.9,330.8 L1424.8,330.8 L1419.1,331.7 L1414.1,334.9 L1414.1,343.5 L1416.3,348.1 L1423.4,348.8 L1424.1,345.0 L1429.1,344.3 L1427.6,350.3 L1427.6,352.8 L1433.3,352.8 L1434.3,354.8 L1434.0,359.9 L1436.9,362.7 L1439.7,362.0 L1442.9,363.5 L1441.9,365.2 L1438.5,365.2 L1431.2,361.0 L1428.4,356.9 L1422.7,355.5 L1418.4,352.5 L1414.8,352.8 L1402.8,346.6 L1402.8,342.0 L1397.1,338.1 L1393.5,332.5 L1389.7,328.4 L1392.8,335.7 L1396.4,342.0 L1393.5,339.6 L1389.2,334.1 L1386.4,326.7 L1381.4,323.3 L1378.6,318.0 L1376.4,313.4 L1375.7,307.7 L1376.4,297.6 L1371.5,292.1 L1366.5,281.5 L1360.8,273.8 L1353.7,268.3 L1345.2,265.4 L1339.5,265.4 L1336.6,272.5 L1328.1,276.5 L1321.0,281.5 L1327.4,272.5 L1323.1,271.1 L1318.1,266.8 L1318.8,259.3 L1323.8,254.5 L1313.9,251.1Z M1825.9,251.1 L1828.7,239.0 L1834.4,234.2 L1842.9,228.6 L1864.3,235.8 L1882.8,234.2 L1901.2,240.2 L1911.2,240.2 L1929.7,242.1 L1931.1,265.4 L1933.2,276.5 L1943.9,280.8 L1948.2,286.4 L1952.4,282.8 L1953.9,272.5 L1954.6,261.5 L1961.0,262.4 L1966.0,265.4 L1972.4,268.3 L1977.3,277.8 L1983.7,288.7 L1980.9,296.5 L1970.9,294.3 L1973.1,300.7 L1978.0,302.8 L1970.9,305.8 L1965.2,306.8 L1965.2,310.2 L1959.6,312.5 L1956.7,318.9 L1956.7,322.4 L1949.6,328.4 L1951.0,338.1 L1948.9,338.1 L1946.8,331.7 L1943.9,330.8 L1936.8,330.8 L1931.1,331.7 L1926.1,334.9 L1926.1,343.5 L1928.3,348.1 L1935.4,348.8 L1936.1,345.0 L1941.1,344.3 L1939.6,350.3 L1939.6,352.8 L1945.3,352.8 L1946.3,354.8 L1946.0,359.9 L1948.9,362.7 L1951.7,362.0 L1954.9,363.5 L1953.9,365.2 L1950.5,365.2 L1943.2,361.0 L1940.4,356.9 L1934.7,355.5 L1930.4,352.5 L1926.8,352.8 L1914.8,346.6 L1914.8,342.0 L1909.1,338.1 L1905.5,332.5 L1901.7,328.4 L1904.8,335.7 L1908.4,342.0 L1905.5,339.6 L1901.2,334.1 L1898.4,326.7 L1893.4,323.3 L1890.6,318.0 L1888.4,313.4 L1887.7,307.7 L1888.4,297.6 L1883.5,292.1 L1878.5,281.5 L1872.8,273.8 L1865.7,268.3 L1857.2,265.4 L1851.5,265.4 L1848.6,272.5 L1840.1,276.5 L1833.0,281.5 L1839.4,272.5 L1835.1,271.1 L1830.1,266.8 L1830.8,259.3 L1835.8,254.5 L1825.9,251.1Z M1449.0,192.0 L1467.5,158.8 L1510.1,141.8 L1524.4,168.4 L1527.2,204.7 L1521.5,234.2 L1507.3,242.1 L1493.1,268.3 L1481.7,259.3 L1474.6,238.2 L1467.5,210.4 L1449.0,192.0Z M1961.0,192.0 L1979.5,158.8 L2022.1,141.8 L2036.4,168.4 L2039.2,204.7 L2033.5,234.2 L2019.3,242.1 L2005.1,268.3 L1993.7,259.3 L1986.6,238.2 L1979.5,210.4 L1961.0,192.0Z M1424.8,225.4 L1439.0,217.2 L1451.8,232.1 L1464.6,245.8 L1461.1,257.8 L1449.0,251.1 L1441.9,252.8 L1433.3,235.0 L1424.8,225.4Z M1936.8,225.4 L1951.0,217.2 L1963.8,232.1 L1976.6,245.8 L1973.1,257.8 L1961.0,251.1 L1953.9,252.8 L1945.3,235.0 L1936.8,225.4Z M1385.0,220.7 L1406.3,220.7 L1408.7,236.2 L1392.1,240.6 L1385.0,234.2Z M1897.0,220.7 L1918.3,220.7 L1920.7,236.2 L1904.1,240.6 L1897.0,234.2Z M1374.3,225.4 L1386.4,211.5 L1388.5,218.2 L1380.7,229.0Z M1886.3,225.4 L1898.4,211.5 L1900.5,218.2 L1892.7,229.0Z M1375.0,227.7 L1376.4,198.6 L1467.5,198.6 L1464.6,245.8 L1461.1,257.8 L1449.0,251.1 L1441.9,252.8 L1433.3,235.0 L1424.8,234.2 L1417.7,227.7 L1410.6,240.2 L1396.4,240.2 L1385.0,238.2Z M1887.0,227.7 L1888.4,198.6 L1979.5,198.6 L1976.6,245.8 L1973.1,257.8 L1961.0,251.1 L1953.9,252.8 L1945.3,235.0 L1936.8,234.2 L1929.7,227.7 L1922.6,240.2 L1908.4,240.2 L1897.0,238.2Z M1414.8,210.4 L1439.0,201.7 L1453.2,177.1 L1424.8,168.4 L1414.8,198.6Z M1926.8,210.4 L1951.0,201.7 L1965.2,177.1 L1936.8,168.4 L1926.8,198.6Z M1393.5,210.4 L1410.6,204.7 L1403.5,192.0 L1389.2,198.6Z M1905.5,210.4 L1922.6,204.7 L1915.5,192.0 L1901.2,198.6Z M1439.0,363.5 L1443.3,364.2 L1444.7,362.0 L1450.4,358.4 L1464.6,360.6 L1471.7,367.1 L1478.8,368.5 L1481.7,375.6 L1490.2,379.2 L1503.0,382.7 L1497.3,394.3 L1494.5,407.7 L1484.5,413.9 L1477.4,427.1 L1470.3,435.0 L1464.6,435.9 L1460.4,441.5 L1457.5,449.5 L1454.7,460.2 L1455.4,469.7 L1446.1,458.0 L1448.3,439.6 L1451.1,420.4 L1453.2,401.6 L1444.7,395.7 L1437.6,384.1 L1439.0,378.4 L1441.9,372.8 L1443.3,365.6 L1439.0,363.5Z M1951.0,363.5 L1955.3,364.2 L1956.7,362.0 L1962.4,358.4 L1976.6,360.6 L1983.7,367.1 L1990.8,368.5 L1993.7,375.6 L2002.2,379.2 L2015.0,382.7 L2009.3,394.3 L2006.5,407.7 L1996.5,413.9 L1989.4,427.1 L1982.3,435.0 L1976.6,435.9 L1972.4,441.5 L1969.5,449.5 L1966.7,460.2 L1967.4,469.7 L1958.1,458.0 L1960.3,439.6 L1963.1,420.4 L1965.2,401.6 L1956.7,395.7 L1949.6,384.1 L1951.0,378.4 L1953.9,372.8 L1955.3,365.6 L1951.0,363.5Z M1539.3,315.8 L1540.0,307.7 L1550.7,306.8 L1551.1,300.7 L1546.1,296.5 L1554.9,291.2 L1559.2,286.9 L1564.9,284.0 L1564.3,275.7 L1567.7,274.9 L1568.4,279.0 L1570.6,283.3 L1572.7,284.0 L1580.5,282.8 L1582.7,276.7 L1586.9,270.0 L1594.8,268.6 L1584.8,267.4 L1583.1,259.3 L1588.6,252.2 L1584.1,250.1 L1578.1,260.9 L1579.4,268.3 L1576.3,277.8 L1570.9,279.0 L1568.9,271.1 L1564.2,273.8 L1560.6,271.6 L1559.9,262.4 L1572.0,245.8 L1578.4,235.8 L1589.1,229.9 L1599.7,236.2 L1611.1,246.2 L1615.4,240.6 L1629.6,240.2 L1636.7,235.0 L1649.5,240.2 L1650.9,222.2 L1666.6,218.2 L1676.5,211.5 L1695.0,201.7 L1713.5,218.2 L1734.8,223.1 L1751.9,223.6 L1769.0,229.9 L1780.4,235.0 L1794.6,234.2 L1808.8,239.0 L1808.8,252.8 L1806.0,254.5 L1800.3,263.9 L1784.6,268.8 L1783.2,278.5 L1775.7,291.0 L1774.0,276.5 L1769.0,271.1 L1756.2,270.3 L1745.1,282.0 L1753.3,288.0 L1752.2,296.7 L1742.0,308.1 L1737.3,311.6 L1736.8,322.1 L1732.6,323.3 L1732.9,317.6 L1730.2,313.4 L1725.2,311.9 L1720.2,315.3 L1722.5,318.7 L1721.9,319.2 L1723.9,320.5 L1726.2,329.4 L1725.6,334.1 L1722.8,338.9 L1719.2,341.2 L1714.2,343.2 L1709.7,345.0 L1707.1,344.0 L1704.3,346.3 L1703.1,348.5 L1708.1,357.7 L1704.3,362.3 L1701.8,363.3 L1701.4,360.6 L1695.7,356.2 L1694.0,360.9 L1696.0,366.3 L1700.0,369.5 L1701.0,373.8 L1696.4,371.6 L1692.6,364.5 L1692.9,356.9 L1691.8,351.8 L1686.9,352.5 L1684.4,345.8 L1683.4,343.1 L1680.1,343.7 L1676.2,345.0 L1673.7,347.3 L1667.0,352.8 L1666.4,360.9 L1663.0,364.2 L1661.2,361.3 L1656.6,350.0 L1656.2,344.3 L1652.4,342.7 L1649.8,340.9 L1647.5,338.2 L1640.3,338.5 L1634.3,337.6 L1633.0,335.5 L1626.8,334.4 L1624.1,330.5 L1621.1,330.8 L1621.9,334.1 L1625.0,339.3 L1626.2,337.6 L1626.2,340.0 L1629.6,340.3 L1633.0,336.8 L1636.0,341.0 L1637.8,343.1 L1635.0,348.1 L1631.4,350.8 L1626.8,352.1 L1622.5,355.3 L1617.1,357.2 L1614.4,357.4 L1613.4,353.0 L1611.0,347.3 L1608.4,344.0 L1607.6,340.9 L1602.7,333.9 L1602.0,333.9 L1599.3,331.0 L1601.4,328.9 L1603.3,324.3 L1603.9,321.7 L1603.7,319.2 L1596.3,319.4 L1592.1,318.9 L1590.2,314.2 L1591.1,312.3 L1586.5,312.1 L1585.2,314.0 L1586.9,316.7 L1584.8,319.9 L1582.8,317.6 L1580.4,310.0 L1572.4,303.6 L1570.3,304.6 L1575.6,310.6 L1579.1,313.2 L1575.7,317.1 L1575.0,313.4 L1570.0,310.2 L1567.2,305.6 L1564.6,306.0 L1562.0,307.5 L1557.2,307.5 L1557.2,309.9 L1552.9,313.6 L1551.8,317.8 L1549.8,319.4 L1545.1,320.5 L1543.6,319.1 L1542.1,318.5 L1540.0,318.9 L1539.3,315.8Z M2051.3,315.8 L2052.0,307.7 L2062.7,306.8 L2063.1,300.7 L2058.1,296.5 L2066.9,291.2 L2071.2,286.9 L2076.9,284.0 L2076.3,275.7 L2079.7,274.9 L2080.4,279.0 L2082.6,283.3 L2084.7,284.0 L2092.5,282.8 L2094.7,276.7 L2098.9,270.0 L2106.8,268.6 L2096.8,267.4 L2095.1,259.3 L2100.6,252.2 L2096.1,250.1 L2090.1,260.9 L2091.4,268.3 L2088.3,277.8 L2082.9,279.0 L2080.9,271.1 L2076.2,273.8 L2072.6,271.6 L2071.9,262.4 L2084.0,245.8 L2090.4,235.8 L2101.1,229.9 L2111.7,236.2 L2123.1,246.2 L2127.4,240.6 L2141.6,240.2 L2148.7,235.0 L2161.5,240.2 L2162.9,222.2 L2178.6,218.2 L2188.5,211.5 L2207.0,201.7 L2225.5,218.2 L2246.8,223.1 L2263.9,223.6 L2281.0,229.9 L2292.4,235.0 L2306.6,234.2 L2320.8,239.0 L2320.8,252.8 L2318.0,254.5 L2312.3,263.9 L2296.6,268.8 L2295.2,278.5 L2287.7,291.0 L2286.0,276.5 L2281.0,271.1 L2268.2,270.3 L2257.1,282.0 L2265.3,288.0 L2264.2,296.7 L2254.0,308.1 L2249.3,311.6 L2248.8,322.1 L2244.6,323.3 L2244.9,317.6 L2242.2,313.4 L2237.2,311.9 L2232.2,315.3 L2234.5,318.7 L2233.9,319.2 L2235.9,320.5 L2238.2,329.4 L2237.6,334.1 L2234.8,338.9 L2231.2,341.2 L2226.2,343.2 L2221.7,345.0 L2219.1,344.0 L2216.3,346.3 L2215.1,348.5 L2220.1,357.7 L2216.3,362.3 L2213.8,363.3 L2213.4,360.6 L2207.7,356.2 L2206.0,360.9 L2208.0,366.3 L2212.0,369.5 L2213.0,373.8 L2208.4,371.6 L2204.6,364.5 L2204.9,356.9 L2203.8,351.8 L2198.9,352.5 L2196.4,345.8 L2195.4,343.1 L2192.1,343.7 L2188.2,345.0 L2185.7,347.3 L2179.0,352.8 L2178.4,360.9 L2175.0,364.2 L2173.2,361.3 L2168.6,350.0 L2168.2,344.3 L2164.4,342.7 L2161.8,340.9 L2159.5,338.2 L2152.3,338.5 L2146.3,337.6 L2145.0,335.5 L2138.8,334.4 L2136.1,330.5 L2133.1,330.8 L2133.9,334.1 L2137.0,339.3 L2138.2,337.6 L2138.2,340.0 L2141.6,340.3 L2145.0,336.8 L2148.0,341.0 L2149.8,343.1 L2147.0,348.1 L2143.4,350.8 L2138.8,352.1 L2134.5,355.3 L2129.1,357.2 L2126.4,357.4 L2125.4,353.0 L2123.0,347.3 L2120.4,344.0 L2119.6,340.9 L2114.7,333.9 L2114.0,333.9 L2111.3,331.0 L2113.4,328.9 L2115.3,324.3 L2115.9,321.7 L2115.7,319.2 L2108.3,319.4 L2104.1,318.9 L2102.2,314.2 L2103.1,312.3 L2098.5,312.1 L2097.2,314.0 L2098.9,316.7 L2096.8,319.9 L2094.8,317.6 L2092.4,310.0 L2084.4,303.6 L2082.3,304.6 L2087.6,310.6 L2091.1,313.2 L2087.7,317.1 L2087.0,313.4 L2082.0,310.2 L2079.2,305.6 L2076.6,306.0 L2074.0,307.5 L2069.2,307.5 L2069.2,309.9 L2064.9,313.6 L2063.8,317.8 L2061.8,319.4 L2057.1,320.5 L2055.6,319.1 L2054.1,318.5 L2052.0,318.9 L2051.3,315.8Z M1544.4,321.0 L1551.4,322.1 L1557.1,319.2 L1567.0,318.3 L1568.4,321.5 L1567.3,324.1 L1574.4,327.0 L1580.5,330.2 L1581.4,327.5 L1585.5,326.5 L1594.0,329.4 L1598.7,328.7 L1601.9,334.1 L1599.0,331.7 L1603.4,340.6 L1605.7,345.0 L1608.6,352.7 L1614.4,357.7 L1615.4,360.6 L1625.8,358.7 L1625.3,360.6 L1621.1,368.5 L1613.2,376.3 L1608.7,382.7 L1609.4,390.9 L1610.4,397.2 L1604.0,403.9 L1602.9,410.8 L1599.2,413.9 L1599.4,418.6 L1595.5,422.5 L1591.2,426.2 L1584.1,427.4 L1579.0,427.1 L1577.0,420.4 L1573.4,408.5 L1569.4,400.6 L1572.0,392.1 L1570.3,384.3 L1566.3,377.0 L1566.7,370.6 L1564.9,369.2 L1561.3,369.5 L1559.2,366.6 L1554.5,367.1 L1550.0,368.9 L1542.1,369.3 L1536.4,365.9 L1533.9,362.7 L1531.5,359.9 L1528.5,354.8 L1529.6,347.3 L1528.6,345.0 L1532.2,336.8 L1534.3,334.6 L1538.9,330.8 L1539.6,326.7 L1544.4,321.0Z M2056.4,321.0 L2063.4,322.1 L2069.1,319.2 L2079.0,318.3 L2080.4,321.5 L2079.3,324.1 L2086.4,327.0 L2092.5,330.2 L2093.4,327.5 L2097.5,326.5 L2106.0,329.4 L2110.7,328.7 L2113.9,334.1 L2111.0,331.7 L2115.4,340.6 L2117.7,345.0 L2120.6,352.7 L2126.4,357.7 L2127.4,360.6 L2137.8,358.7 L2137.3,360.6 L2133.1,368.5 L2125.2,376.3 L2120.7,382.7 L2121.4,390.9 L2122.4,397.2 L2116.0,403.9 L2114.9,410.8 L2111.2,413.9 L2111.4,418.6 L2107.5,422.5 L2103.2,426.2 L2096.1,427.4 L2091.0,427.1 L2089.0,420.4 L2085.4,408.5 L2081.4,400.6 L2084.0,392.1 L2082.3,384.3 L2078.3,377.0 L2078.7,370.6 L2076.9,369.2 L2073.3,369.5 L2071.2,366.6 L2066.5,367.1 L2062.0,368.9 L2054.1,369.3 L2048.4,365.9 L2045.9,362.7 L2043.5,359.9 L2040.5,354.8 L2041.6,347.3 L2040.6,345.0 L2044.2,336.8 L2046.3,334.6 L2050.9,330.8 L2051.6,326.7 L2056.4,321.0Z M1623.1,392.8 L1624.6,397.9 L1619.6,412.3 L1615.4,411.6 L1614.4,407.7 L1615.8,400.1 L1618.6,398.4 L1623.1,392.8Z M2135.1,392.8 L2136.6,397.9 L2131.6,412.3 L2127.4,411.6 L2126.4,407.7 L2127.8,400.1 L2130.6,398.4 L2135.1,392.8Z M1544.7,293.2 L1554.9,291.0 L1555.2,287.1 L1552.4,285.2 L1550.0,279.5 L1550.2,274.9 L1548.1,272.2 L1545.7,272.2 L1544.0,277.0 L1545.8,281.5 L1548.2,283.5 L1546.3,285.7 L1548.1,290.1 L1544.7,293.2Z M2056.7,293.2 L2066.9,291.0 L2067.2,287.1 L2064.4,285.2 L2062.0,279.5 L2062.2,274.9 L2060.1,272.2 L2057.7,272.2 L2056.0,277.0 L2057.8,281.5 L2060.2,283.5 L2058.3,285.7 L2060.1,290.1 L2056.7,293.2Z M1544.3,288.7 L1544.3,282.8 L1542.1,281.0 L1538.6,284.0 L1538.2,289.6Z M2056.3,288.7 L2056.3,282.8 L2054.1,281.0 L2050.6,284.0 L2050.2,289.6Z M1518.7,251.1 L1521.5,248.0 L1531.5,247.6 L1533.5,252.8 L1526.1,258.1 L1518.7,256.1Z M2030.7,251.1 L2033.5,248.0 L2043.5,247.6 L2045.5,252.8 L2038.1,258.1 L2030.7,256.1Z M1739.0,329.2 L1739.8,325.0 L1744.8,325.0 L1751.9,322.4 L1753.3,316.2 L1754.0,310.8 L1751.9,312.3 L1751.6,317.1 L1747.6,318.9 L1742.0,321.5 L1739.0,324.3 L1737.7,328.4Z M2251.0,329.2 L2251.8,325.0 L2256.8,325.0 L2263.9,322.4 L2265.3,316.2 L2266.0,310.8 L2263.9,312.3 L2263.6,317.1 L2259.6,318.9 L2254.0,321.5 L2251.0,324.3 L2249.7,328.4Z M1751.9,310.6 L1754.0,303.0 L1759.7,307.1 L1756.9,309.7Z M2263.9,310.6 L2266.0,303.0 L2271.7,307.1 L2268.9,309.7Z M1754.8,301.7 L1756.2,295.4 L1755.5,284.0 L1756.9,285.2 L1757.6,295.4 L1756.2,300.7Z M2266.8,301.7 L2268.2,295.4 L2267.5,284.0 L2268.9,285.2 L2269.6,295.4 L2268.2,300.7Z M1723.5,342.7 L1726.3,338.9 L1724.9,338.4 L1723.6,341.2Z M2235.5,342.7 L2238.3,338.9 L2236.9,338.4 L2235.6,341.2Z M1723.5,348.8 L1726.7,348.8 L1729.2,356.9 L1724.3,355.5Z M2235.5,348.8 L2238.7,348.8 L2241.2,356.9 L2236.3,355.5Z M1726.3,364.2 L1732.7,365.6 L1732.0,362.0 L1728.4,363.5Z M2238.3,364.2 L2244.7,365.6 L2244.0,362.0 L2240.4,363.5Z M1688.3,367.8 L1691.5,368.2 L1701.4,379.2 L1703.6,384.0 L1697.2,379.9Z M2200.3,367.8 L2203.5,368.2 L2213.4,379.2 L2215.6,384.0 L2209.2,379.9Z M1707.8,373.5 L1719.2,365.6 L1722.0,368.5 L1720.6,374.2 L1717.8,381.3 L1710.0,379.9Z M2219.8,373.5 L2231.2,365.6 L2234.0,368.5 L2232.6,374.2 L2229.8,381.3 L2222.0,379.9Z M1702.8,385.3 L1715.6,386.7 L1715.6,388.2 L1703.6,386.3Z M2214.8,385.3 L2227.6,386.7 L2227.6,388.2 L2215.6,386.3Z M1722.8,383.4 L1723.5,374.2 L1729.9,373.5 L1724.9,374.9 L1727.7,382.0 L1724.2,383.6Z M2234.8,383.4 L2235.5,374.2 L2241.9,373.5 L2236.9,374.9 L2239.7,382.0 L2236.2,383.6Z M1739.1,377.7 L1747.6,377.7 L1753.3,379.3 L1762.6,384.1 L1766.1,390.6 L1757.6,386.3 L1753.3,388.6 L1749.1,387.0 L1740.5,382.0Z M2251.1,377.7 L2259.6,377.7 L2265.3,379.3 L2274.6,384.1 L2278.1,390.6 L2269.6,386.3 L2265.3,388.6 L2261.1,387.0 L2252.5,382.0Z M1666.3,361.6 L1669.1,364.9 L1668.0,367.1 L1666.6,366.8Z M2178.3,361.6 L2181.1,364.9 L2180.0,367.1 L2178.6,366.8Z M1713.9,407.7 L1714.9,413.9 L1716.4,427.1 L1720.6,428.8 L1728.4,426.9 L1736.3,423.0 L1739.4,422.8 L1744.8,428.3 L1749.1,429.7 L1752.8,434.1 L1757.6,434.7 L1760.7,435.9 L1766.1,433.2 L1771.3,417.9 L1770.4,412.3 L1765.4,408.1 L1760.4,402.4 L1759.4,397.2 L1755.5,390.9 L1754.0,394.3 L1754.2,400.1 L1751.2,400.9 L1746.2,397.9 L1747.6,392.8 L1741.4,392.1 L1737.7,394.3 L1737.0,397.2 L1730.6,396.4 L1726.3,400.9 L1724.9,403.9 L1719.2,405.6Z M2225.9,407.7 L2226.9,413.9 L2228.4,427.1 L2232.6,428.8 L2240.4,426.9 L2248.3,423.0 L2251.4,422.8 L2256.8,428.3 L2261.1,429.7 L2264.8,434.1 L2269.6,434.7 L2272.7,435.9 L2278.1,433.2 L2283.3,417.9 L2282.4,412.3 L2277.4,408.1 L2272.4,402.4 L2271.4,397.2 L2267.5,390.9 L2266.0,394.3 L2266.2,400.1 L2263.2,400.9 L2258.2,397.9 L2259.6,392.8 L2253.4,392.1 L2249.7,394.3 L2249.0,397.2 L2242.6,396.4 L2238.3,400.9 L2236.9,403.9 L2231.2,405.6Z M1758.6,439.1 L1763.7,439.5 L1763.3,443.9 L1760.4,444.6Z M2270.6,439.1 L2275.7,439.5 L2275.3,443.9 L2272.4,444.6Z M1798.4,427.8 L1806.7,433.6 L1803.1,440.6 L1801.1,440.2 L1799.8,436.3 L1801.0,431.4Z M2310.4,427.8 L2318.7,433.6 L2315.1,440.6 L2313.1,440.2 L2311.8,436.3 L2313.0,431.4Z M1798.6,438.7 L1800.7,441.0 L1795.3,449.2 L1789.6,449.5 L1792.4,445.4Z M2310.6,438.7 L2312.7,441.0 L2307.3,449.2 L2301.6,449.5 L2304.4,445.4Z M1431.9,343.7 L1439.0,341.7 L1447.3,346.3 L1442.3,346.7 L1437.6,344.0Z M1943.9,343.7 L1951.0,341.7 L1959.3,346.3 L1954.3,346.7 L1949.6,344.0Z M1446.8,349.0 L1455.5,348.7 L1454.8,346.7 L1449.0,346.7Z M1958.8,349.0 L1967.5,348.7 L1966.8,346.7 L1961.0,346.7Z M1626.8,228.2 L1635.3,207.6 L1649.5,198.6 L1639.6,218.2 L1632.4,232.1Z M2138.8,228.2 L2147.3,207.6 L2161.5,198.6 L2151.6,218.2 L2144.4,232.1Z M1687.9,184.9 L1702.1,181.1 L1695.0,168.4Z M2199.9,184.9 L2214.1,181.1 L2207.0,168.4Z M1746.2,215.7 L1754.8,207.6 L1763.3,210.4 L1751.9,218.2Z M2258.2,215.7 L2266.8,207.6 L2275.3,210.4 L2263.9,218.2Z M1569.9,198.6 L1581.2,177.1 L1592.6,177.1 L1581.2,198.6Z M2081.9,198.6 L2093.2,177.1 L2104.6,177.1 L2093.2,198.6Z" fill="#141c2c"/><path d="M1591.9,308.7 L1592.6,311.2 L1599.7,310.6 L1611.8,310.6 L1612.1,308.1 L1605.4,303.8 L1606.8,299.7 L1602.6,302.8 L1599.7,301.7 L1596.2,300.7 L1594.0,304.8Z M1375.0,228.6 L1386.4,230.4 L1396.4,238.6 L1393.5,236.2 L1383.6,227.7Z M1619.6,304.8 L1623.9,300.7 L1628.2,302.8 L1625.3,306.8 L1627.9,310.2 L1629.5,318.2 L1622.5,318.0 L1623.2,312.7 L1620.4,308.1Z" fill="#212838"/><path d="M1377.9,295.4 L1417.7,295.4 L1426.2,297.6 L1434.8,301.7 L1435.5,309.7 L1440.4,307.1 L1444.7,304.8 L1451.8,303.8 L1454.7,298.6 L1456.8,303.8 M1889.9,295.4 L1929.7,295.4 L1938.2,297.6 L1946.8,301.7 L1947.5,309.7 L1952.4,307.1 L1956.7,304.8 L1963.8,303.8 L1966.7,298.6 L1968.8,303.8 M1352.3,235.8 L1352.3,268.3 L1360.8,271.1 L1367.9,281.5 M1864.3,235.8 L1864.3,268.3 L1872.8,271.1 L1879.9,281.5 M1386.4,326.7 L1394.9,328.7 L1399.2,328.7 L1401.3,327.9 L1406.3,332.5 L1410.6,334.1 L1414.1,337.3 M1898.4,326.7 L1906.9,328.7 L1911.2,328.7 L1913.3,327.9 L1918.3,332.5 L1922.6,334.1 L1926.1,337.3 M1422.0,349.9 L1426.2,349.9 L1426.2,353.3 L1429.1,356.9 L1432.6,354.0 L1434.0,359.9 L1435.5,362.7 M1934.0,349.9 L1938.2,349.9 L1938.2,353.3 L1941.1,356.9 L1944.6,354.0 L1946.0,359.9 L1947.5,362.7 M1453.2,401.6 L1454.7,407.7 L1456.1,410.8 M1965.2,401.6 L1966.7,407.7 L1968.1,410.8 M1455.4,469.7 L1450.4,453.6 L1451.8,437.8 L1453.2,420.4 L1455.4,409.2 L1454.7,401.6 M1967.4,469.7 L1962.4,453.6 L1963.8,437.8 L1965.2,420.4 L1967.4,409.2 L1966.7,401.6 M1447.6,387.0 L1453.2,391.3 L1460.4,389.9 L1467.5,395.7 L1470.3,401.6 L1474.6,410.8 L1476.0,413.9 L1471.7,420.4 L1477.4,427.1 M1959.6,387.0 L1965.2,391.3 L1972.4,389.9 L1979.5,395.7 L1982.3,401.6 L1986.6,410.8 L1988.0,413.9 L1983.7,420.4 L1989.4,427.1 M1447.6,387.0 L1453.2,381.3 L1454.0,374.2 L1457.5,372.8 L1463.2,369.9 L1467.5,368.5 L1471.7,372.8 L1478.8,372.8 M1959.6,387.0 L1965.2,381.3 L1966.0,374.2 L1969.5,372.8 L1975.2,369.9 L1979.5,368.5 L1983.7,372.8 L1990.8,372.8 M1437.6,380.6 L1446.1,377.0 L1453.2,381.3 M1949.6,380.6 L1958.1,377.0 L1965.2,381.3 M1450.4,358.4 L1450.4,365.6 L1457.5,367.1 L1457.5,372.8 M1962.4,358.4 L1962.4,365.6 L1969.5,367.1 L1969.5,372.8 M1470.3,401.6 L1464.6,407.7 L1456.1,410.8 M1982.3,401.6 L1976.6,407.7 L1968.1,410.8 M1471.7,420.4 L1464.6,407.7 M1983.7,420.4 L1976.6,407.7 M1550.7,306.8 L1557.2,308.9 M2062.7,306.8 L2069.2,308.9 M1556.4,291.0 L1561.3,293.2 L1564.2,295.4 L1563.5,298.6 L1561.3,301.1 L1563.5,305.8 M2068.4,291.0 L2073.3,293.2 L2076.2,295.4 L2075.5,298.6 L2073.3,301.1 L2075.5,305.8 M1573.0,284.0 L1573.8,291.0 L1570.6,292.6 L1572.4,296.1 L1571.3,298.6 L1566.3,298.6 M2085.0,284.0 L2085.8,291.0 L2082.6,292.6 L2084.4,296.1 L2083.3,298.6 L2078.3,298.6 M1561.3,285.2 L1562.8,291.0 L1561.3,293.2 M2073.3,285.2 L2074.8,291.0 L2073.3,293.2 M1580.5,282.8 L1586.2,284.0 L1586.9,291.5 L1584.8,295.4 L1579.8,294.3 L1573.8,291.2 M2092.5,282.8 L2098.2,284.0 L2098.9,291.5 L2096.8,295.4 L2091.8,294.3 L2085.8,291.2 M1586.9,291.5 L1591.2,288.7 L1598.3,288.0 L1603.3,288.3 L1609.7,294.1 L1606.8,299.7 M2098.9,291.5 L2103.2,288.7 L2110.3,288.0 L2115.3,288.3 L2121.7,294.1 L2118.8,299.7 M1584.8,297.6 L1590.5,297.2 L1592.6,300.7 L1594.0,304.4 M2096.8,297.6 L2102.5,297.2 L2104.6,300.7 L2106.0,304.4 M1581.7,301.3 L1584.8,304.8 L1591.2,305.8 L1593.3,306.4 M2093.7,301.3 L2096.8,304.8 L2103.2,305.8 L2105.3,306.4 M1572.4,303.6 L1576.3,300.7 L1581.7,301.3 L1584.8,297.6 M2084.4,303.6 L2088.3,300.7 L2093.7,301.3 L2096.8,297.6 M1580.5,309.7 L1585.5,311.0 L1590.5,310.2 L1592.6,309.7 M2092.5,309.7 L2097.5,311.0 L2102.5,310.2 L2104.6,309.7 M1566.3,298.6 L1571.3,298.6 L1576.3,300.7 M2078.3,298.6 L2083.3,298.6 L2088.3,300.7 M1576.3,296.5 L1579.8,294.3 M2088.3,296.5 L2091.8,294.3 M1582.7,276.7 L1592.6,279.0 L1592.6,269.7 M2094.7,276.7 L2104.6,279.0 L2104.6,269.7 M1586.2,284.2 L1591.2,279.5 L1596.9,279.5 L1598.3,288.0 M2098.2,284.2 L2103.2,279.5 L2108.9,279.5 L2110.3,288.0 M1584.1,281.5 L1589.8,273.8 L1592.6,275.1 M2096.1,281.5 L2101.8,273.8 L2104.6,275.1 M1592.6,266.8 L1595.5,262.4 L1594.8,238.2 L1593.3,234.2 M2104.6,266.8 L2107.5,262.4 L2106.8,238.2 L2105.3,234.2 M1569.9,271.1 L1570.6,265.4 L1569.9,259.3 L1574.1,249.4 L1578.4,240.2 L1582.0,238.2 L1588.4,240.2 L1593.3,234.2 M2081.9,271.1 L2082.6,265.4 L2081.9,259.3 L2086.1,249.4 L2090.4,240.2 L2094.0,238.2 L2100.4,240.2 L2105.3,234.2 M1619.6,304.8 L1620.4,297.6 L1623.9,291.0 L1631.0,291.5 L1639.6,288.7 L1639.6,281.5 L1650.9,280.3 L1660.9,284.0 L1666.6,291.0 L1676.5,295.4 M2131.6,304.8 L2132.4,297.6 L2135.9,291.0 L2143.0,291.5 L2151.6,288.7 L2151.6,281.5 L2162.9,280.3 L2172.9,284.0 L2178.6,291.0 L2188.5,295.4 M1676.5,295.4 L1683.6,291.0 L1692.2,288.7 L1705.0,293.2 L1716.4,293.2 L1723.5,299.7 L1719.2,301.7 L1710.7,305.8 L1702.1,310.6 L1690.8,308.1 L1682.2,303.8 L1676.5,295.4 M2188.5,295.4 L2195.6,291.0 L2204.2,288.7 L2217.0,293.2 L2228.4,293.2 L2235.5,299.7 L2231.2,301.7 L2222.7,305.8 L2214.1,310.6 L2202.8,308.1 L2194.2,303.8 L2188.5,295.4 M1723.5,299.7 L1723.5,286.4 L1733.4,293.2 L1739.1,298.6 L1744.8,297.6 L1739.1,307.7 L1738.4,308.7 M2235.5,299.7 L2235.5,286.4 L2245.4,293.2 L2251.1,298.6 L2256.8,297.6 L2251.1,307.7 L2250.4,308.7 M1676.5,295.4 L1666.6,303.8 L1666.6,309.7 L1659.5,313.4 L1658.0,318.9 L1663.7,321.5 L1666.6,326.7 L1668.0,330.8 L1678.0,334.1 L1683.6,334.6 L1690.8,334.1 L1692.2,338.9 L1697.2,344.3 L1704.3,342.7 L1707.1,344.0 M2188.5,295.4 L2178.6,303.8 L2178.6,309.7 L2171.5,313.4 L2170.0,318.9 L2175.7,321.5 L2178.6,326.7 L2180.0,330.8 L2190.0,334.1 L2195.6,334.6 L2202.8,334.1 L2204.2,338.9 L2209.2,344.3 L2216.3,342.7 L2219.1,344.0 M1658.0,318.9 L1659.5,326.7 L1658.0,332.5 L1653.8,334.1 L1651.6,339.6 L1649.8,340.9 M2170.0,318.9 L2171.5,326.7 L2170.0,332.5 L2165.8,334.1 L2163.6,339.6 L2161.8,340.9 M1639.6,319.8 L1639.6,329.2 L1642.4,331.7 L1647.4,330.8 L1652.4,325.0 L1653.8,320.7 L1658.0,318.9 L1652.4,316.2 L1646.7,318.2 L1639.6,319.8 M2151.6,319.8 L2151.6,329.2 L2154.4,331.7 L2159.4,330.8 L2164.4,325.0 L2165.8,320.7 L2170.0,318.9 L2164.4,316.2 L2158.7,318.2 L2151.6,319.8 M1615.4,314.4 L1618.2,318.9 L1617.5,322.4 L1621.1,330.8 M2127.4,314.4 L2130.2,318.9 L2129.5,322.4 L2133.1,330.8 M1639.6,319.8 L1640.3,338.5 M2151.6,319.8 L2152.3,338.5 M1628.2,309.7 L1632.4,311.6 L1638.1,308.7 L1645.2,306.8 L1656.6,308.7 L1666.6,309.7 M2140.2,309.7 L2144.4,311.6 L2150.1,308.7 L2157.2,306.8 L2168.6,308.7 L2178.6,309.7 M1628.2,302.8 L1632.4,303.8 L1636.7,302.8 L1639.6,305.8 L1649.5,311.6 L1656.6,308.7 M2140.2,302.8 L2144.4,303.8 L2148.7,302.8 L2151.6,305.8 L2161.5,311.6 L2168.6,308.7 M1604.7,331.7 L1608.3,327.5 L1612.5,329.2 L1619.6,332.5 L1621.8,333.3 M2116.7,331.7 L2120.3,327.5 L2124.5,329.2 L2131.6,332.5 L2133.8,333.3 M1614.4,350.3 L1619.6,351.4 L1626.8,348.1 L1631.7,349.9 M2126.4,350.3 L2131.6,351.4 L2138.8,348.1 L2143.7,349.9 M1604.0,319.2 L1612.5,318.9 L1616.5,318.3 L1615.4,314.4 L1612.5,310.6 M2116.0,319.2 L2124.5,318.9 L2128.5,318.3 L2127.4,314.4 L2124.5,310.6 M1612.5,318.9 L1611.1,323.3 L1608.3,327.5 M2124.5,318.9 L2123.1,323.3 L2120.3,327.5 M1692.2,338.9 L1692.9,340.4 L1691.5,346.6 L1695.0,345.8 L1696.4,351.1 L1702.1,354.8 L1703.6,358.4 L1699.3,359.9 M2204.2,338.9 L2204.9,340.4 L2203.5,346.6 L2207.0,345.8 L2208.4,351.1 L2214.1,354.8 L2215.6,358.4 L2211.3,359.9 M1697.9,343.5 L1701.4,349.6 L1705.0,352.5 L1705.7,354.8 L1703.6,359.9 M2209.9,343.5 L2213.4,349.6 L2217.0,352.5 L2217.7,354.8 L2215.6,359.9 M1678.0,336.5 L1679.4,343.5 M2190.0,336.5 L2191.4,343.5 M1683.6,343.5 L1684.4,338.9 L1687.9,335.7 M2195.6,343.5 L2196.4,338.9 L2199.9,335.7 M1667.3,330.8 L1672.3,333.3 L1678.0,335.7 M2179.3,330.8 L2184.3,333.3 L2190.0,335.7 M1550.2,322.7 L1547.8,330.8 L1540.4,334.6 L1534.3,334.6 M2062.2,322.7 L2059.8,330.8 L2052.4,334.6 L2046.3,334.6 M1540.4,334.6 L1540.4,337.3 L1535.7,337.3 L1535.7,341.2 L1534.3,344.6 L1528.6,344.6 M2052.4,334.6 L2052.4,337.3 L2047.7,337.3 L2047.7,341.2 L2046.3,344.6 L2040.6,344.6 M1546.0,338.9 L1554.2,345.0 L1558.5,347.3 L1569.9,341.2 L1574.1,342.0 L1586.9,346.6 L1586.9,343.5 L1588.4,343.5 L1588.4,328.4 M2058.0,338.9 L2066.2,345.0 L2070.5,347.3 L2081.9,341.2 L2086.1,342.0 L2098.9,346.6 L2098.9,343.5 L2100.4,343.5 L2100.4,328.4 M1588.4,343.5 L1605.1,343.5 M2100.4,343.5 L2117.1,343.5 M1569.2,325.8 L1567.0,330.8 L1567.0,338.9 L1569.9,341.2 M2081.2,325.8 L2079.0,330.8 L2079.0,338.9 L2081.9,341.2 M1574.1,342.0 L1574.8,346.6 L1572.7,356.9 L1572.0,355.9 L1558.5,356.2 L1557.9,358.8 L1554.2,357.2 L1545.7,361.3 L1545.0,353.3 L1535.7,354.3 L1535.7,351.8 M2086.1,342.0 L2086.8,346.6 L2084.7,356.9 L2084.0,355.9 L2070.5,356.2 L2069.9,358.8 L2066.2,357.2 L2057.7,361.3 L2057.0,353.3 L2047.7,354.3 L2047.7,351.8 M1540.4,335.7 L1544.3,339.2 L1546.0,338.9 L1545.0,353.3 M2052.4,335.7 L2056.3,339.2 L2058.0,338.9 L2057.0,353.3 M1586.9,346.6 L1586.9,353.3 L1584.8,356.9 L1586.2,362.7 L1591.2,368.5 L1595.5,370.6 L1601.2,369.9 L1602.6,368.5 L1604.0,357.7 L1606.1,355.5 L1607.6,349.6 M2098.9,346.6 L2098.9,353.3 L2096.8,356.9 L2098.2,362.7 L2103.2,368.5 L2107.5,370.6 L2113.2,369.9 L2114.6,368.5 L2116.0,357.7 L2118.1,355.5 L2119.6,349.6 M1601.2,369.9 L1609.7,369.9 L1612.5,369.9 L1616.8,368.5 L1621.1,364.2 L1615.4,360.6 L1614.4,357.7 M2113.2,369.9 L2121.7,369.9 L2124.5,369.9 L2128.8,368.5 L2133.1,364.2 L2127.4,360.6 L2126.4,357.7 M1572.7,356.9 L1573.4,359.9 L1575.6,364.9 L1584.1,369.9 L1591.2,368.5 M2084.7,356.9 L2085.4,359.9 L2087.6,364.9 L2096.1,369.9 L2103.2,368.5 M1566.7,370.6 L1568.9,372.5 L1575.6,372.8 L1578.4,370.6 L1579.1,377.0 L1577.0,382.7 L1570.3,384.3 M2078.7,370.6 L2080.9,372.5 L2087.6,372.8 L2090.4,370.6 L2091.1,377.0 L2089.0,382.7 L2082.3,384.3 M1591.2,368.5 L1596.9,372.8 L1595.5,377.0 L1594.8,382.0 L1596.2,387.0 L1599.7,389.2 L1601.9,392.1 L1602.6,400.1 L1596.9,398.7 L1589.8,401.6 L1582.7,401.6 L1582.0,407.7 L1581.2,412.3 L1581.2,417.9 L1576.3,417.9 M2103.2,368.5 L2108.9,372.8 L2107.5,377.0 L2106.8,382.0 L2108.2,387.0 L2111.7,389.2 L2113.9,392.1 L2114.6,400.1 L2108.9,398.7 L2101.8,401.6 L2094.7,401.6 L2094.0,407.7 L2093.2,412.3 L2093.2,417.9 L2088.3,417.9 M1582.7,401.6 L1586.9,394.3 L1584.1,391.3 L1577.0,382.7 M2094.7,401.6 L2098.9,394.3 L2096.1,391.3 L2089.0,382.7 M1569.4,400.6 L1571.3,400.1 L1582.7,401.6 M2081.4,400.6 L2083.3,400.1 L2094.7,401.6 M1601.2,377.0 L1608.7,382.7 M2113.2,377.0 L2120.7,382.7 M1612.5,369.9 L1611.1,378.4 M2124.5,369.9 L2123.1,378.4 M1595.5,377.0 L1601.2,377.0 L1602.6,369.9 M2107.5,377.0 L2113.2,377.0 L2114.6,369.9 M1581.2,412.3 L1589.1,413.4 L1592.6,410.0 L1597.6,408.1 L1598.3,413.9 M2093.2,412.3 L2101.1,413.4 L2104.6,410.0 L2109.6,408.1 L2110.3,413.9 M1589.8,401.6 L1594.0,407.7 L1597.6,408.1 M2101.8,401.6 L2106.0,407.7 L2109.6,408.1 M1556.6,366.6 L1557.9,358.8 M2068.6,366.6 L2069.9,358.8 M1564.9,369.2 L1565.6,366.3 L1572.0,360.6 L1572.7,356.9 M2076.9,369.2 L2077.6,366.3 L2084.0,360.6 L2084.7,356.9 M1548.5,368.5 L1548.8,359.9 M2060.5,368.5 L2060.8,359.9 M1554.5,367.1 L1553.5,359.9 M2066.5,367.1 L2065.5,359.9 M1542.1,369.3 L1541.4,360.6 M2054.1,369.3 L2053.4,360.6 M1536.4,365.9 L1537.2,362.7 M2048.4,365.9 L2049.2,362.7 M1533.9,362.7 L1537.2,357.7 M2045.9,362.7 L2049.2,357.7" fill="none" stroke="#4d64b4" stroke-width="0.7" stroke-opacity="0.95"/><text x="1398" y="288.6" text-anchor="middle" font-family="Liberation Sans" font-size="10" fill="#a3b3d2" letter-spacing="0.2">NORTH</text><text x="1398" y="300.1" text-anchor="middle" font-family="Liberation Sans" font-size="10" fill="#a3b3d2" letter-spacing="0.2">AMERICA</text><text x="1565" y="294.6" text-anchor="middle" font-family="Liberation Sans" font-size="10" fill="#a3b3d2" letter-spacing="0.2">EUROPE</text><text x="1680" y="293.6" text-anchor="middle" font-family="Liberation Sans" font-size="10" fill="#a3b3d2" letter-spacing="0.2">ASIA</text><text x="1578" y="362.1" text-anchor="middle" font-family="Liberation Sans" font-size="10" fill="#a3b3d2" letter-spacing="0.2">AFRICA</text><text x="1440" y="365.1" text-anchor="middle" font-family="Liberation Sans" font-size="10" fill="#a3b3d2" letter-spacing="0.2">AMERICA</text><text x="1467" y="402.6" text-anchor="middle" font-family="Liberation Sans" font-size="10" fill="#a3b3d2" letter-spacing="0.2">SOUTH</text><text x="1467" y="414.1" text-anchor="middle" font-family="Liberation Sans" font-size="10" fill="#a3b3d2" letter-spacing="0.2">AMERICA</text><text x="1800" y="397.1" text-anchor="middle" font-family="Liberation Sans" font-size="10" fill="#a3b3d2" letter-spacing="0.2">OCEANIA</text><text x="1747" y="414.6" text-anchor="middle" font-family="Liberation Sans" font-size="10" fill="#a3b3d2" letter-spacing="0.2">AUSTRALIA</text><circle cx="1751" cy="322.4" r="20" fill="#d11313" fill-opacity="0.97"/><circle cx="1563.5" cy="294.5" r="18.2" fill="#e0521c" fill-opacity="0.97"/><circle cx="1444.6" cy="315.5" r="13.8" fill="#1cc83e" fill-opacity="0.97"/><circle cx="1592.1" cy="301.4" r="13.7" fill="#1ed448" fill-opacity="0.97"/><circle cx="1413.7" cy="319.3" r="13" fill="#17c35a" fill-opacity="0.97"/><circle cx="1498.9" cy="394.6" r="11.3" fill="#1eb4cf" fill-opacity="0.97"/><circle cx="1478" cy="397.4" r="10.3" fill="#2e9cd3" fill-opacity="0.88"/><circle cx="1485.8" cy="411" r="10.3" fill="#2e9cd3" fill-opacity="0.88"/><circle cx="1588.3" cy="271.2" r="10.3" fill="#2e9cd3" fill-opacity="0.88"/><circle cx="1719" cy="329.5" r="10.3" fill="#1eb4cf" fill-opacity="0.97"/><circle cx="1700.6" cy="364.8" r="10.3" fill="#2e9cd3" fill-opacity="0.88"/><circle cx="1380.3" cy="320.7" r="9.6" fill="#2e9cd3" fill-opacity="0.88"/><circle cx="1571.6" cy="327.8" r="9" fill="#2e9cd3" fill-opacity="0.88"/><circle cx="1551.8" cy="295.2" r="8.6" fill="#5f8fd6" fill-opacity="0.88"/><circle cx="1594.5" cy="320" r="8.6" fill="#3f78cf" fill-opacity="0.88"/><circle cx="1624.4" cy="328" r="8.6" fill="#3f78cf" fill-opacity="0.88"/><circle cx="1705.1" cy="385.4" r="8.6" fill="#2e98d3" fill-opacity="0.88"/><circle cx="1398.2" cy="311.4" r="8" fill="#3f78cf" fill-opacity="0.88"/><circle cx="1659.9" cy="337.5" r="8" fill="#3f78cf" fill-opacity="0.88"/><circle cx="1382.7" cy="302.8" r="7.6" fill="#3f78cf" fill-opacity="0.88"/><circle cx="1764.5" cy="429.3" r="7.2" fill="#3b59c9" fill-opacity="0.88"/><circle cx="1442.5" cy="306.3" r="7" fill="#3f78cf" fill-opacity="0.88"/><circle cx="1661.7" cy="353.6" r="7" fill="#3b59c9" fill-opacity="0.88"/><circle cx="1631.7" cy="383.4" r="7" fill="#3b59c9" fill-opacity="0.88"/><circle cx="1592.4" cy="415.1" r="7" fill="#3b59c9" fill-opacity="0.88"/><circle cx="1717.3" cy="385.5" r="7" fill="#3b59c9" fill-opacity="0.88"/><circle cx="1700.4" cy="326.1" r="6.2" fill="#3b59c9" fill-opacity="0.88"/><circle cx="1605" cy="378.9" r="6.2" fill="#3b59c9" fill-opacity="0.88"/><circle cx="1410.2" cy="348.2" r="6" fill="#3b59c9" fill-opacity="0.88"/><circle cx="1443.6" cy="365.7" r="6" fill="#3b59c9" fill-opacity="0.88"/><circle cx="1442.2" cy="390.8" r="6" fill="#3b59c9" fill-opacity="0.88"/><circle cx="1491" cy="410" r="6" fill="#3b59c9" fill-opacity="0.88"/><circle cx="1451.8" cy="427.4" r="6" fill="#3b59c9" fill-opacity="0.88"/><circle cx="1540.8" cy="316.8" r="6" fill="#3b59c9" fill-opacity="0.88"/><circle cx="1657.9" cy="292.6" r="6" fill="#3b59c9" fill-opacity="0.88"/><circle cx="1613.5" cy="360.6" r="6" fill="#3b59c9" fill-opacity="0.88"/><circle cx="1543.2" cy="363.7" r="6" fill="#3b59c9" fill-opacity="0.88"/><circle cx="1559.5" cy="368.2" r="6" fill="#3b59c9" fill-opacity="0.88"/><circle cx="1724.6" cy="356.7" r="6" fill="#3b59c9" fill-opacity="0.88"/><circle cx="1790.9" cy="400.5" r="6" fill="#3b59c9" fill-opacity="0.88"/><circle cx="1635" cy="291.7" r="5.8" fill="#3b59c9" fill-opacity="0.88"/><circle cx="1461.5" cy="303.5" r="5.5" fill="#3b59c9" fill-opacity="0.88"/><circle cx="1328" cy="345.8" r="5.5" fill="#3b59c9" fill-opacity="0.88"/><circle cx="1458.7" cy="363" r="5.5" fill="#3b59c9" fill-opacity="0.88"/><circle cx="1308.3" cy="396.5" r="5.5" fill="#3b59c9" fill-opacity="0.88"/><circle cx="1339.8" cy="401.9" r="5.5" fill="#3b59c9" fill-opacity="0.88"/><circle cx="1289.3" cy="433.3" r="5.5" fill="#3b59c9" fill-opacity="0.88"/><circle cx="1286.4" cy="445.2" r="5.5" fill="#3b59c9" fill-opacity="0.88"/><circle cx="1450.7" cy="446.4" r="5.5" fill="#3b59c9" fill-opacity="0.88"/><circle cx="1460" cy="443.3" r="5.5" fill="#3b59c9" fill-opacity="0.88"/><circle cx="1520" cy="256.9" r="5.5" fill="#3b59c9" fill-opacity="0.88"/><circle cx="1528.8" cy="259.3" r="5.5" fill="#3b59c9" fill-opacity="0.88"/><circle cx="1572.5" cy="245.4" r="5.5" fill="#3b59c9" fill-opacity="0.88"/><circle cx="1599.6" cy="239.2" r="5.5" fill="#3b59c9" fill-opacity="0.88"/><circle cx="1519.2" cy="355" r="5.5" fill="#3b59c9" fill-opacity="0.88"/><circle cx="1577.7" cy="271.9" r="5.5" fill="#3b59c9" fill-opacity="0.88"/><circle cx="1642.5" cy="276.8" r="5.5" fill="#3b59c9" fill-opacity="0.88"/><circle cx="1673.5" cy="278.3" r="5.5" fill="#3b59c9" fill-opacity="0.88"/><circle cx="1686.4" cy="279.4" r="5.5" fill="#3b59c9" fill-opacity="0.88"/><circle cx="1675" cy="237.6" r="5.5" fill="#3b59c9" fill-opacity="0.88"/><circle cx="1703" cy="297.7" r="5.5" fill="#3b59c9" fill-opacity="0.88"/><circle cx="1728.3" cy="308.7" r="5.5" fill="#3b59c9" fill-opacity="0.88"/><circle cx="1751.3" cy="306.4" r="5.5" fill="#5a6bd0" fill-opacity="0.88"/><circle cx="1617.5" cy="372.8" r="5.5" fill="#3b59c9" fill-opacity="0.88"/><circle cx="1572.1" cy="388.1" r="5.5" fill="#3b59c9" fill-opacity="0.88"/><circle cx="1579" cy="426.7" r="5.5" fill="#3b59c9" fill-opacity="0.88"/><circle cx="1519" cy="355" r="5.5" fill="#3b59c9" fill-opacity="0.88"/><circle cx="1758.5" cy="357.3" r="5.5" fill="#3b59c9" fill-opacity="0.88"/><circle cx="1754.5" cy="382.7" r="5.5" fill="#3b59c9" fill-opacity="0.88"/><circle cx="1717.3" cy="424.8" r="5.5" fill="#3b59c9" fill-opacity="0.88"/><circle cx="1799" cy="431.5" r="5.5" fill="#3b59c9" fill-opacity="0.88"/><circle cx="1820" cy="396.5" r="5.5" fill="#3b59c9" fill-opacity="0.88"/><circle cx="1851.6" cy="401.9" r="5.5" fill="#3b59c9" fill-opacity="0.88"/><circle cx="1839.9" cy="345.8" r="5.5" fill="#3b59c9" fill-opacity="0.88"/><circle cx="1872.3" cy="267.3" r="5.5" fill="#3b59c9" fill-opacity="0.88"/><circle cx="1360.2" cy="267.3" r="5.4" fill="#3b59c9" fill-opacity="0.88"/><circle cx="1393.8" cy="278" r="5.4" fill="#3b59c9" fill-opacity="0.88"/><circle cx="1884.5" cy="320" r="4" fill="#3b59c9" fill-opacity="0.88"/></svg></div>
<div class="abs" style="left:1273px;top:225px;width:32px;height:63px;background:#070d1b;border-radius:4px"></div>
<div class="abs" style="left:1273px;top:297.5px;width:32px;height:31px;background:#070d1b;border:1px solid #2b3a52;border-radius:4px"></div>
<div class="abs" style="left:1273px;top:337.5px;width:32px;height:31px;background:#070d1b;border:1px solid #2b3a52;border-radius:4px"></div>
<div class="abs" style="left:1273px;top:377.5px;width:32px;height:31px;background:#070d1b;border:1px solid #2b3a52;border-radius:4px"></div>
<svg width="1886" height="733"><circle cx="1288.6" cy="241.5" r="7" fill="#dfe5ef"/><g stroke="#0b1120" stroke-width="1.3"><line x1="1284.6" y1="241.5" x2="1292.6" y2="241.5"/><line x1="1288.6" y1="237.5" x2="1288.6" y2="245.5"/></g><circle cx="1288.6" cy="273.2" r="7" fill="#5b6477"/><line x1="1284.6" y1="273.2" x2="1292.6" y2="273.2" stroke="#0b1120" stroke-width="1.3"/><g fill="none" stroke="#dfe5ef" stroke-width="1.1"><circle cx="1288.6" cy="313" r="5.5"/><line x1="1288.6" y1="305.5" x2="1288.6" y2="308.5"/><line x1="1288.6" y1="317.5" x2="1288.6" y2="320.5"/><line x1="1281.1" y1="313" x2="1284.1" y2="313"/><line x1="1293.1" y1="313" x2="1296.1" y2="313"/></g><circle cx="1288.6" cy="313" r="1" fill="#dfe5ef"/><g fill="none" stroke="#dfe5ef" stroke-width="1.1"><line x1="1283" y1="358.5" x2="1294" y2="347.5"/><polyline points="1283,354 1283,358.5 1287.5,358.5"/><polyline points="1289.5,347.5 1294,347.5 1294,352"/></g><path d="M1283,399 L1289.5,392.5 M1288.5,390.5 A4,4 0 0 1 1294,386.5 L1291.5,389.5 L1293,391 L1296,388.5 A4,4 0 0 1 1291.5,394 Z M1283,399 L1284.5,400.5 L1290.8,394.2" fill="none" stroke="#dfe5ef" stroke-width="1.1"/><circle cx="1269.2" cy="393.2" r="3.3" fill="none" stroke="#8e9fbc" stroke-width="1"/></svg>
<div class="abs" style="left:1840px;top:225px;width:31.5px;height:32px;background:#070d1b;border-radius:4px"></div>
<svg width="1886" height="733"><g fill="none" stroke="#dfe5ef" stroke-width="1.1"><polyline points="1852.5,238.5 1849.5,241.5 1852.5,244.5"/><line x1="1849.5" y1="241.5" x2="1855" y2="241.5"/><line x1="1855" y1="238" x2="1862.5" y2="238"/><line x1="1857" y1="241.5" x2="1862.5" y2="241.5"/><line x1="1855" y1="245" x2="1862.5" y2="245"/></g></svg>
<div class="abs" style="left:1823.5px;top:407.3px;width:48px;height:16.5px;background:#0b1120"></div>
<div class="t" style="left:1827.5px;top:408.5px;font-size:11.2px;font-weight:700;color:#dfe5ef">zoom: 0</div>
<div class="abs" style="left:1483.4px;top:432.5px;width:388px;height:16.2px;background:#0b1120"></div>
<div class="t" style="left:1487px;top:434.3px;font-size:11.2px;color:#eef1f7">Elastic Maps Service</div><div class="t" style="left:1606.3px;top:434.3px;font-size:11.2px;color:#eef1f7">,</div><div class="t" style="left:1612.6px;top:434.3px;font-size:11.2px;color:#eef1f7">OpenMapTiles</div><div class="t" style="left:1702px;top:434.3px;font-size:11.2px;color:#eef1f7">, OpenStreetMap contributors</div>
<svg width="1886" height="733"><g fill="none" stroke="#a9b4c6" stroke-width="1"><path d="M1600.5,437.5 L1596.5,437.5 L1596.5,445.5 L1604.5,445.5 L1604.5,441.5"/><line x1="1600.0" y1="442.0" x2="1605.5" y2="436.5"/><polyline points="1602.0,436.5 1605.5,436.5 1605.5,440.0"/></g><g fill="none" stroke="#a9b4c6" stroke-width="1"><path d="M1695.5,437.5 L1691.5,437.5 L1691.5,445.5 L1699.5,445.5 L1699.5,441.5"/><line x1="1695.0" y1="442.0" x2="1700.5" y2="436.5"/><polyline points="1697.0,436.5 1700.5,436.5 1700.5,440.0"/></g><g fill="none" stroke="#a9b4c6" stroke-width="1"><path d="M1861.5,437.5 L1857.5,437.5 L1857.5,445.5 L1865.5,445.5 L1865.5,441.5"/><line x1="1861.0" y1="442.0" x2="1866.5" y2="436.5"/><polyline points="1863.0,436.5 1866.5,436.5 1866.5,440.0"/></g></svg>
<div class="panel" style="left:-6px;top:468px;width:904px;height:290px;"></div>
<div class="panel" style="left:904px;top:468px;width:981px;height:290px;"></div>
<div class="ptitle" style="left:3.4px;top:473.3px;font-size:14.2px">Attacks by Destination Port Histogram</div>
<div class="ptitle" style="left:912.4px;top:473.3px;font-size:14.2px">Attacks by Country Histogram</div>
<svg width="1886" height="733"><g stroke="#1f2b3e" stroke-width="1" fill="none"><line x1="72.5" y1="514" x2="72.5" y2="722"/><line x1="72" y1="699.5" x2="774.5" y2="699.5"/><line x1="774" y1="699" x2="774" y2="720"/><line x1="162.4" y1="700" x2="162.4" y2="712"/><line x1="321.4" y1="700" x2="321.4" y2="712"/><line x1="479.7" y1="700" x2="479.7" y2="712"/><line x1="638.7" y1="700" x2="638.7" y2="712"/></g><path d="M72.0,699.4 L72.0,691.7 L83.3,691.7 L83.3,691.0 L94.7,691.0 L94.7,688.9 L106.0,688.9 L106.0,691.6 L117.3,691.6 L117.3,691.4 L128.7,691.4 L128.7,690.9 L140.0,690.9 L140.0,693.3 L151.3,693.3 L151.3,691.3 L162.6,691.3 L162.6,690.6 L174.0,690.6 L174.0,689.6 L185.3,689.6 L185.3,693.8 L196.6,693.8 L196.6,692.6 L208.0,692.6 L208.0,693.9 L219.3,693.9 L219.3,689.5 L230.6,689.5 L230.6,690.2 L242.0,690.2 L241.9,694.1 L253.3,694.1 L253.3,688.5 L264.6,688.5 L264.6,688.6 L275.9,688.6 L275.9,690.5 L287.3,690.5 L287.3,690.7 L298.6,690.7 L298.6,693.5 L309.9,693.5 L309.9,694.3 L321.3,694.3 L321.3,691.2 L332.6,691.2 L332.6,694.0 L343.9,694.0 L343.9,693.3 L355.2,693.3 L355.2,580.0 L366.6,580.0 L366.6,529.6 L377.9,529.6 L377.9,691.6 L389.2,691.6 L389.2,691.8 L400.6,691.8 L400.6,689.3 L411.9,689.3 L411.9,691.3 L423.2,691.3 L423.2,690.6 L434.6,690.6 L434.6,691.4 L445.9,691.4 L445.9,690.4 L457.2,690.4 L457.2,691.7 L468.6,691.7 L468.6,692.7 L479.9,692.7 L479.9,688.4 L491.2,688.4 L491.2,688.4 L502.5,688.4 L502.5,689.4 L513.9,689.4 L513.9,690.2 L525.2,690.2 L525.2,692.5 L536.5,692.5 L536.5,693.0 L547.9,693.0 L547.9,692.7 L559.2,692.7 L559.2,579.5 L570.5,579.5 L570.5,579.5 L581.9,579.5 L581.9,692.0 L593.2,692.0 L593.2,659.6 L604.5,659.6 L604.5,659.6 L615.8,659.6 L615.8,688.7 L627.2,688.7 L627.2,689.3 L638.5,689.3 L638.5,694.4 L649.8,694.4 L649.8,693.1 L661.2,693.1 L661.2,688.9 L672.5,688.9 L672.5,691.6 L683.8,691.6 L683.8,688.5 L695.2,688.5 L695.1,692.0 L706.5,692.0 L706.5,694.0 L717.8,694.0 L717.8,690.6 L729.1,690.6 L729.1,689.7 L740.5,689.7 L740.5,692.8 L751.8,692.8 L751.8,693.9 L763.1,693.9 L763.1,699.4 Z" fill="#7b8fe0" fill-opacity="0.25"/><path d="M72.0,691.7 L83.3,691.7 L83.3,691.0 L94.7,691.0 L94.7,688.9 L106.0,688.9 L106.0,691.6 L117.3,691.6 L117.3,691.4 L128.7,691.4 L128.7,690.9 L140.0,690.9 L140.0,693.3 L151.3,693.3 L151.3,691.3 L162.6,691.3 L162.6,690.6 L174.0,690.6 L174.0,689.6 L185.3,689.6 L185.3,693.8 L196.6,693.8 L196.6,692.6 L208.0,692.6 L208.0,693.9 L219.3,693.9 L219.3,689.5 L230.6,689.5 L230.6,690.2 L242.0,690.2 L241.9,694.1 L253.3,694.1 L253.3,688.5 L264.6,688.5 L264.6,688.6 L275.9,688.6 L275.9,690.5 L287.3,690.5 L287.3,690.7 L298.6,690.7 L298.6,693.5 L309.9,693.5 L309.9,694.3 L321.3,694.3 L321.3,691.2 L332.6,691.2 L332.6,694.0 L343.9,694.0 L343.9,693.3 L355.2,693.3 L355.2,580.0 L366.6,580.0 L366.6,529.6 L377.9,529.6 L377.9,691.6 L389.2,691.6 L389.2,691.8 L400.6,691.8 L400.6,689.3 L411.9,689.3 L411.9,691.3 L423.2,691.3 L423.2,690.6 L434.6,690.6 L434.6,691.4 L445.9,691.4 L445.9,690.4 L457.2,690.4 L457.2,691.7 L468.6,691.7 L468.6,692.7 L479.9,692.7 L479.9,688.4 L491.2,688.4 L491.2,688.4 L502.5,688.4 L502.5,689.4 L513.9,689.4 L513.9,690.2 L525.2,690.2 L525.2,692.5 L536.5,692.5 L536.5,693.0 L547.9,693.0 L547.9,692.7 L559.2,692.7 L559.2,579.5 L570.5,579.5 L570.5,579.5 L581.9,579.5 L581.9,692.0 L593.2,692.0 L593.2,659.6 L604.5,659.6 L604.5,659.6 L615.8,659.6 L615.8,688.7 L627.2,688.7 L627.2,689.3 L638.5,689.3 L638.5,694.4 L649.8,694.4 L649.8,693.1 L661.2,693.1 L661.2,688.9 L672.5,688.9 L672.5,691.6 L683.8,691.6 L683.8,688.5 L695.2,688.5 L695.1,692.0 L706.5,692.0 L706.5,694.0 L717.8,694.0 L717.8,690.6 L729.1,690.6 L729.1,689.7 L740.5,689.7 L740.5,692.8 L751.8,692.8 L751.8,693.9 L763.1,693.9" fill="none" stroke="#7b8fe0" stroke-width="1.5" stroke-linejoin="miter"/><path d="M72.0,699.4 L72.0,677.3 L83.3,677.3 L83.3,675.8 L94.7,675.8 L94.7,676.3 L106.0,676.3 L106.0,677.8 L117.3,677.8 L117.3,677.5 L128.7,677.5 L128.7,677.9 L140.0,677.9 L140.0,678.0 L151.3,678.0 L151.3,676.2 L162.6,676.2 L162.6,677.7 L174.0,677.7 L174.0,676.8 L185.3,676.8 L185.3,677.0 L196.6,677.0 L196.6,677.6 L208.0,677.6 L208.0,676.3 L219.3,676.3 L219.3,677.8 L230.6,677.8 L230.6,676.6 L242.0,676.6 L241.9,677.8 L253.3,677.8 L253.3,677.1 L264.6,677.1 L264.6,677.6 L275.9,677.6 L275.9,677.5 L287.3,677.5 L287.3,675.8 L298.6,675.8 L298.6,676.2 L309.9,676.2 L309.9,677.4 L321.3,677.4 L321.3,676.0 L332.6,676.0 L332.6,677.6 L343.9,677.6 L343.9,677.2 L355.2,677.2 L355.2,676.0 L366.6,676.0 L366.6,676.6 L377.9,676.6 L377.9,677.9 L389.2,677.9 L389.2,675.7 L400.6,675.7 L400.6,677.6 L411.9,677.6 L411.9,677.5 L423.2,677.5 L423.2,676.2 L434.6,676.2 L434.6,677.3 L445.9,677.3 L445.9,677.4 L457.2,677.4 L457.2,677.9 L468.6,677.9 L468.6,677.9 L479.9,677.9 L479.9,676.7 L491.2,676.7 L491.2,677.5 L502.5,677.5 L502.5,676.7 L513.9,676.7 L513.9,677.2 L525.2,677.2 L525.2,677.0 L536.5,677.0 L536.5,675.8 L547.9,675.8 L547.9,676.9 L559.2,676.9 L559.2,676.7 L570.5,676.7 L570.5,676.0 L581.9,676.0 L581.9,677.7 L593.2,677.7 L593.2,677.7 L604.5,677.7 L604.5,675.9 L615.8,675.9 L615.8,676.1 L627.2,676.1 L627.2,677.5 L638.5,677.5 L638.5,677.6 L649.8,677.6 L649.8,676.3 L661.2,676.3 L661.2,675.8 L672.5,675.8 L672.5,677.6 L683.8,677.6 L683.8,675.8 L695.2,675.8 L695.1,676.0 L706.5,676.0 L706.5,676.7 L717.8,676.7 L717.8,677.1 L729.1,677.1 L729.1,677.9 L740.5,677.9 L740.5,678.0 L751.8,678.0 L751.8,675.8 L763.1,675.8 L763.1,699.4 Z" fill="#7b8fe0" fill-opacity="0.1"/><path d="M72.0,677.3 L83.3,677.3 L83.3,675.8 L94.7,675.8 L94.7,676.3 L106.0,676.3 L106.0,677.8 L117.3,677.8 L117.3,677.5 L128.7,677.5 L128.7,677.9 L140.0,677.9 L140.0,678.0 L151.3,678.0 L151.3,676.2 L162.6,676.2 L162.6,677.7 L174.0,677.7 L174.0,676.8 L185.3,676.8 L185.3,677.0 L196.6,677.0 L196.6,677.6 L208.0,677.6 L208.0,676.3 L219.3,676.3 L219.3,677.8 L230.6,677.8 L230.6,676.6 L242.0,676.6 L241.9,677.8 L253.3,677.8 L253.3,677.1 L264.6,677.1 L264.6,677.6 L275.9,677.6 L275.9,677.5 L287.3,677.5 L287.3,675.8 L298.6,675.8 L298.6,676.2 L309.9,676.2 L309.9,677.4 L321.3,677.4 L321.3,676.0 L332.6,676.0 L332.6,677.6 L343.9,677.6 L343.9,677.2 L355.2,677.2 L355.2,676.0 L366.6,676.0 L366.6,676.6 L377.9,676.6 L377.9,677.9 L389.2,677.9 L389.2,675.7 L400.6,675.7 L400.6,677.6 L411.9,677.6 L411.9,677.5 L423.2,677.5 L423.2,676.2 L434.6,676.2 L434.6,677.3 L445.9,677.3 L445.9,677.4 L457.2,677.4 L457.2,677.9 L468.6,677.9 L468.6,677.9 L479.9,677.9 L479.9,676.7 L491.2,676.7 L491.2,677.5 L502.5,677.5 L502.5,676.7 L513.9,676.7 L513.9,677.2 L525.2,677.2 L525.2,677.0 L536.5,677.0 L536.5,675.8 L547.9,675.8 L547.9,676.9 L559.2,676.9 L559.2,676.7 L570.5,676.7 L570.5,676.0 L581.9,676.0 L581.9,677.7 L593.2,677.7 L593.2,677.7 L604.5,677.7 L604.5,675.9 L615.8,675.9 L615.8,676.1 L627.2,676.1 L627.2,677.5 L638.5,677.5 L638.5,677.6 L649.8,677.6 L649.8,676.3 L661.2,676.3 L661.2,675.8 L672.5,675.8 L672.5,677.6 L683.8,677.6 L683.8,675.8 L695.2,675.8 L695.1,676.0 L706.5,676.0 L706.5,676.7 L717.8,676.7 L717.8,677.1 L729.1,677.1 L729.1,677.9 L740.5,677.9 L740.5,678.0 L751.8,678.0 L751.8,675.8 L763.1,675.8" fill="none" stroke="#7b8fe0" stroke-width="1.5" stroke-linejoin="miter"/><path d="M72.0,699.4 L72.0,679.2 L83.3,679.2 L83.3,677.8 L94.7,677.8 L94.7,679.1 L106.0,679.1 L106.0,677.4 L117.3,677.4 L117.3,678.1 L128.7,678.1 L128.7,679.0 L140.0,679.0 L140.0,679.4 L151.3,679.4 L151.3,677.7 L162.6,677.7 L162.6,679.7 L174.0,679.7 L174.0,679.2 L185.3,679.2 L185.3,678.2 L196.6,678.2 L196.6,677.3 L208.0,677.3 L208.0,678.1 L219.3,678.1 L219.3,679.1 L230.6,679.1 L230.6,677.1 L242.0,677.1 L241.9,679.3 L253.3,679.3 L253.3,679.9 L264.6,679.9 L264.6,679.1 L275.9,679.1 L275.9,678.6 L287.3,678.6 L287.3,679.7 L298.6,679.7 L298.6,679.4 L309.9,679.4 L309.9,678.8 L321.3,678.8 L321.3,678.2 L332.6,678.2 L332.6,679.5 L343.9,679.5 L343.9,678.8 L355.2,678.8 L355.2,677.2 L366.6,677.2 L366.6,677.0 L377.9,677.0 L377.9,677.9 L389.2,677.9 L389.2,677.8 L400.6,677.8 L400.6,678.1 L411.9,678.1 L411.9,679.5 L423.2,679.5 L423.2,679.8 L434.6,679.8 L434.6,679.8 L445.9,679.8 L445.9,677.2 L457.2,677.2 L457.2,677.8 L468.6,677.8 L468.6,677.0 L479.9,677.0 L479.9,679.8 L491.2,679.8 L491.2,678.0 L502.5,678.0 L502.5,678.5 L513.9,678.5 L513.9,677.7 L525.2,677.7 L525.2,678.9 L536.5,678.9 L536.5,676.9 L547.9,676.9 L547.9,679.7 L559.2,679.7 L559.2,678.3 L570.5,678.3 L570.5,677.7 L581.9,677.7 L581.9,677.2 L593.2,677.2 L593.2,677.7 L604.5,677.7 L604.5,677.8 L615.8,677.8 L615.8,677.5 L627.2,677.5 L627.2,677.2 L638.5,677.2 L638.5,678.8 L649.8,678.8 L649.8,677.8 L661.2,677.8 L661.2,677.2 L672.5,677.2 L672.5,677.3 L683.8,677.3 L683.8,678.6 L695.2,678.6 L695.1,677.5 L706.5,677.5 L706.5,677.3 L717.8,677.3 L717.8,678.2 L729.1,678.2 L729.1,678.0 L740.5,678.0 L740.5,678.8 L751.8,678.8 L751.8,678.2 L763.1,678.2 L763.1,699.4 Z" fill="#8494e0" fill-opacity="0.1"/><path d="M72.0,679.2 L83.3,679.2 L83.3,677.8 L94.7,677.8 L94.7,679.1 L106.0,679.1 L106.0,677.4 L117.3,677.4 L117.3,678.1 L128.7,678.1 L128.7,679.0 L140.0,679.0 L140.0,679.4 L151.3,679.4 L151.3,677.7 L162.6,677.7 L162.6,679.7 L174.0,679.7 L174.0,679.2 L185.3,679.2 L185.3,678.2 L196.6,678.2 L196.6,677.3 L208.0,677.3 L208.0,678.1 L219.3,678.1 L219.3,679.1 L230.6,679.1 L230.6,677.1 L242.0,677.1 L241.9,679.3 L253.3,679.3 L253.3,679.9 L264.6,679.9 L264.6,679.1 L275.9,679.1 L275.9,678.6 L287.3,678.6 L287.3,679.7 L298.6,679.7 L298.6,679.4 L309.9,679.4 L309.9,678.8 L321.3,678.8 L321.3,678.2 L332.6,678.2 L332.6,679.5 L343.9,679.5 L343.9,678.8 L355.2,678.8 L355.2,677.2 L366.6,677.2 L366.6,677.0 L377.9,677.0 L377.9,677.9 L389.2,677.9 L389.2,677.8 L400.6,677.8 L400.6,678.1 L411.9,678.1 L411.9,679.5 L423.2,679.5 L423.2,679.8 L434.6,679.8 L434.6,679.8 L445.9,679.8 L445.9,677.2 L457.2,677.2 L457.2,677.8 L468.6,677.8 L468.6,677.0 L479.9,677.0 L479.9,679.8 L491.2,679.8 L491.2,678.0 L502.5,678.0 L502.5,678.5 L513.9,678.5 L513.9,677.7 L525.2,677.7 L525.2,678.9 L536.5,678.9 L536.5,676.9 L547.9,676.9 L547.9,679.7 L559.2,679.7 L559.2,678.3 L570.5,678.3 L570.5,677.7 L581.9,677.7 L581.9,677.2 L593.2,677.2 L593.2,677.7 L604.5,677.7 L604.5,677.8 L615.8,677.8 L615.8,677.5 L627.2,677.5 L627.2,677.2 L638.5,677.2 L638.5,678.8 L649.8,678.8 L649.8,677.8 L661.2,677.8 L661.2,677.2 L672.5,677.2 L672.5,677.3 L683.8,677.3 L683.8,678.6 L695.2,678.6 L695.1,677.5 L706.5,677.5 L706.5,677.3 L717.8,677.3 L717.8,678.2 L729.1,678.2 L729.1,678.0 L740.5,678.0 L740.5,678.8 L751.8,678.8 L751.8,678.2 L763.1,678.2" fill="none" stroke="#8494e0" stroke-width="1.5" stroke-linejoin="miter"/><path d="M72.0,699.4 L72.0,680.7 L83.3,680.7 L83.3,683.9 L94.7,683.9 L94.7,680.6 L106.0,680.6 L106.0,678.4 L117.3,678.4 L117.3,679.1 L128.7,679.1 L128.7,680.0 L140.0,680.0 L140.0,682.1 L151.3,682.1 L151.3,680.0 L162.6,680.0 L162.6,680.9 L174.0,680.9 L174.0,681.8 L185.3,681.8 L185.3,679.4 L196.6,679.4 L196.6,683.9 L208.0,683.9 L208.0,679.9 L219.3,679.9 L219.3,684.2 L230.6,684.2 L230.6,680.8 L242.0,680.8 L241.9,681.5 L253.3,681.5 L253.3,683.0 L264.6,683.0 L264.6,680.2 L275.9,680.2 L275.9,681.4 L287.3,681.4 L287.3,680.7 L298.6,680.7 L298.6,678.9 L309.9,678.9 L309.9,682.9 L321.3,682.9 L321.3,684.3 L332.6,684.3 L332.6,682.6 L343.9,682.6 L343.9,680.3 L355.2,680.3 L355.2,683.2 L366.6,683.2 L366.6,683.4 L377.9,683.4 L377.9,679.0 L389.2,679.0 L389.2,680.4 L400.6,680.4 L400.6,681.7 L411.9,681.7 L411.9,679.0 L423.2,679.0 L423.2,682.4 L434.6,682.4 L434.6,680.4 L445.9,680.4 L445.9,683.2 L457.2,683.2 L457.2,681.8 L468.6,681.8 L468.6,679.6 L479.9,679.6 L479.9,678.9 L491.2,678.9 L491.2,679.1 L502.5,679.1 L502.5,682.1 L513.9,682.1 L513.9,680.9 L525.2,680.9 L525.2,682.5 L536.5,682.5 L536.5,683.6 L547.9,683.6 L547.9,681.4 L559.2,681.4 L559.2,679.4 L570.5,679.4 L570.5,679.3 L581.9,679.3 L581.9,680.1 L593.2,680.1 L593.2,678.7 L604.5,678.7 L604.5,682.7 L615.8,682.7 L615.8,683.4 L627.2,683.4 L627.2,681.7 L638.5,681.7 L638.5,682.7 L649.8,682.7 L649.8,683.1 L661.2,683.1 L661.2,681.9 L672.5,681.9 L672.5,680.6 L683.8,680.6 L683.8,681.4 L695.2,681.4 L695.1,682.5 L706.5,682.5 L706.5,679.4 L717.8,679.4 L717.8,678.5 L729.1,678.5 L729.1,681.7 L740.5,681.7 L740.5,684.0 L751.8,684.0 L751.8,684.2 L763.1,684.2 L763.1,699.4 Z" fill="#7b8fe0" fill-opacity="0.12"/><path d="M72.0,680.7 L83.3,680.7 L83.3,683.9 L94.7,683.9 L94.7,680.6 L106.0,680.6 L106.0,678.4 L117.3,678.4 L117.3,679.1 L128.7,679.1 L128.7,680.0 L140.0,680.0 L140.0,682.1 L151.3,682.1 L151.3,680.0 L162.6,680.0 L162.6,680.9 L174.0,680.9 L174.0,681.8 L185.3,681.8 L185.3,679.4 L196.6,679.4 L196.6,683.9 L208.0,683.9 L208.0,679.9 L219.3,679.9 L219.3,684.2 L230.6,684.2 L230.6,680.8 L242.0,680.8 L241.9,681.5 L253.3,681.5 L253.3,683.0 L264.6,683.0 L264.6,680.2 L275.9,680.2 L275.9,681.4 L287.3,681.4 L287.3,680.7 L298.6,680.7 L298.6,678.9 L309.9,678.9 L309.9,682.9 L321.3,682.9 L321.3,684.3 L332.6,684.3 L332.6,682.6 L343.9,682.6 L343.9,680.3 L355.2,680.3 L355.2,683.2 L366.6,683.2 L366.6,683.4 L377.9,683.4 L377.9,679.0 L389.2,679.0 L389.2,680.4 L400.6,680.4 L400.6,681.7 L411.9,681.7 L411.9,679.0 L423.2,679.0 L423.2,682.4 L434.6,682.4 L434.6,680.4 L445.9,680.4 L445.9,683.2 L457.2,683.2 L457.2,681.8 L468.6,681.8 L468.6,679.6 L479.9,679.6 L479.9,678.9 L491.2,678.9 L491.2,679.1 L502.5,679.1 L502.5,682.1 L513.9,682.1 L513.9,680.9 L525.2,680.9 L525.2,682.5 L536.5,682.5 L536.5,683.6 L547.9,683.6 L547.9,681.4 L559.2,681.4 L559.2,679.4 L570.5,679.4 L570.5,679.3 L581.9,679.3 L581.9,680.1 L593.2,680.1 L593.2,678.7 L604.5,678.7 L604.5,682.7 L615.8,682.7 L615.8,683.4 L627.2,683.4 L627.2,681.7 L638.5,681.7 L638.5,682.7 L649.8,682.7 L649.8,683.1 L661.2,683.1 L661.2,681.9 L672.5,681.9 L672.5,680.6 L683.8,680.6 L683.8,681.4 L695.2,681.4 L695.1,682.5 L706.5,682.5 L706.5,679.4 L717.8,679.4 L717.8,678.5 L729.1,678.5 L729.1,681.7 L740.5,681.7 L740.5,684.0 L751.8,684.0 L751.8,684.2 L763.1,684.2" fill="none" stroke="#7b8fe0" stroke-width="1.5" stroke-linejoin="miter"/><path d="M72.0,699.4 L72.0,682.4 L83.3,682.4 L83.3,689.1 L94.7,689.1 L94.7,683.7 L106.0,683.7 L106.0,684.8 L117.3,684.8 L117.3,686.9 L128.7,686.9 L128.7,683.1 L140.0,683.1 L140.0,689.2 L151.3,689.2 L151.3,688.3 L162.6,688.3 L162.6,685.8 L174.0,685.8 L174.0,689.2 L185.3,689.2 L185.3,682.8 L196.6,682.8 L196.6,687.5 L208.0,687.5 L208.0,688.3 L219.3,688.3 L219.3,689.0 L230.6,689.0 L230.6,684.4 L242.0,684.4 L241.9,685.8 L253.3,685.8 L253.3,684.4 L264.6,684.4 L264.6,684.2 L275.9,684.2 L275.9,682.9 L287.3,682.9 L287.3,681.7 L298.6,681.7 L298.6,683.9 L309.9,683.9 L309.9,687.8 L321.3,687.8 L321.3,685.6 L332.6,685.6 L332.6,688.0 L343.9,688.0 L343.9,689.3 L355.2,689.3 L355.2,685.6 L366.6,685.6 L366.6,683.7 L377.9,683.7 L377.9,688.0 L389.2,688.0 L389.2,687.2 L400.6,687.2 L400.6,686.6 L411.9,686.6 L411.9,683.8 L423.2,683.8 L423.2,685.2 L434.6,685.2 L434.6,684.5 L445.9,684.5 L445.9,683.4 L457.2,683.4 L457.2,686.3 L468.6,686.3 L468.6,683.1 L479.9,683.1 L479.9,682.2 L491.2,682.2 L491.2,688.7 L502.5,688.7 L502.5,681.9 L513.9,681.9 L513.9,683.6 L525.2,683.6 L525.2,688.4 L536.5,688.4 L536.5,685.8 L547.9,685.8 L547.9,684.4 L559.2,684.4 L559.2,682.1 L570.5,682.1 L570.5,686.4 L581.9,686.4 L581.9,684.8 L593.2,684.8 L593.2,682.4 L604.5,682.4 L604.5,683.0 L615.8,683.0 L615.8,681.8 L627.2,681.8 L627.2,685.7 L638.5,685.7 L638.5,684.2 L649.8,684.2 L649.8,687.8 L661.2,687.8 L661.2,683.6 L672.5,683.6 L672.5,682.9 L683.8,682.9 L683.8,684.3 L695.2,684.3 L695.1,683.7 L706.5,683.7 L706.5,687.7 L717.8,687.7 L717.8,682.2 L729.1,682.2 L729.1,681.6 L740.5,681.6 L740.5,681.6 L751.8,681.6 L751.8,685.1 L763.1,685.1 L763.1,699.4 Z" fill="#6f86d8" fill-opacity="0.15"/><path d="M72.0,682.4 L83.3,682.4 L83.3,689.1 L94.7,689.1 L94.7,683.7 L106.0,683.7 L106.0,684.8 L117.3,684.8 L117.3,686.9 L128.7,686.9 L128.7,683.1 L140.0,683.1 L140.0,689.2 L151.3,689.2 L151.3,688.3 L162.6,688.3 L162.6,685.8 L174.0,685.8 L174.0,689.2 L185.3,689.2 L185.3,682.8 L196.6,682.8 L196.6,687.5 L208.0,687.5 L208.0,688.3 L219.3,688.3 L219.3,689.0 L230.6,689.0 L230.6,684.4 L242.0,684.4 L241.9,685.8 L253.3,685.8 L253.3,684.4 L264.6,684.4 L264.6,684.2 L275.9,684.2 L275.9,682.9 L287.3,682.9 L287.3,681.7 L298.6,681.7 L298.6,683.9 L309.9,683.9 L309.9,687.8 L321.3,687.8 L321.3,685.6 L332.6,685.6 L332.6,688.0 L343.9,688.0 L343.9,689.3 L355.2,689.3 L355.2,685.6 L366.6,685.6 L366.6,683.7 L377.9,683.7 L377.9,688.0 L389.2,688.0 L389.2,687.2 L400.6,687.2 L400.6,686.6 L411.9,686.6 L411.9,683.8 L423.2,683.8 L423.2,685.2 L434.6,685.2 L434.6,684.5 L445.9,684.5 L445.9,683.4 L457.2,683.4 L457.2,686.3 L468.6,686.3 L468.6,683.1 L479.9,683.1 L479.9,682.2 L491.2,682.2 L491.2,688.7 L502.5,688.7 L502.5,681.9 L513.9,681.9 L513.9,683.6 L525.2,683.6 L525.2,688.4 L536.5,688.4 L536.5,685.8 L547.9,685.8 L547.9,684.4 L559.2,684.4 L559.2,682.1 L570.5,682.1 L570.5,686.4 L581.9,686.4 L581.9,684.8 L593.2,684.8 L593.2,682.4 L604.5,682.4 L604.5,683.0 L615.8,683.0 L615.8,681.8 L627.2,681.8 L627.2,685.7 L638.5,685.7 L638.5,684.2 L649.8,684.2 L649.8,687.8 L661.2,687.8 L661.2,683.6 L672.5,683.6 L672.5,682.9 L683.8,682.9 L683.8,684.3 L695.2,684.3 L695.1,683.7 L706.5,683.7 L706.5,687.7 L717.8,687.7 L717.8,682.2 L729.1,682.2 L729.1,681.6 L740.5,681.6 L740.5,681.6 L751.8,681.6 L751.8,685.1 L763.1,685.1" fill="none" stroke="#6f86d8" stroke-width="1.5" stroke-linejoin="miter"/><path d="M72.0,699.4 L72.0,694.7 L83.3,694.7 L83.3,697.5 L94.7,697.5 L94.7,693.9 L106.0,693.9 L106.0,694.3 L117.3,694.3 L117.3,697.3 L128.7,697.3 L128.7,698.9 L140.0,698.9 L140.0,696.8 L151.3,696.8 L151.3,696.1 L162.6,696.1 L162.6,694.8 L174.0,694.8 L174.0,658.3 L185.3,658.3 L185.3,699.2 L196.6,699.2 L196.6,694.5 L208.0,694.5 L208.0,699.0 L219.3,699.0 L219.3,663.8 L230.6,663.8 L230.6,698.4 L242.0,698.4 L241.9,662.8 L253.3,662.8 L253.3,660.6 L264.6,660.6 L264.6,660.6 L275.9,660.6 L275.9,698.5 L287.3,698.5 L287.3,696.3 L298.6,696.3 L298.6,695.1 L309.9,695.1 L309.9,694.4 L321.3,694.4 L321.3,666.0 L332.6,666.0 L332.6,660.6 L343.9,660.6 L343.9,696.4 L355.2,696.4 L355.2,693.7 L366.6,693.7 L366.6,698.9 L377.9,698.9 L377.9,698.1 L389.2,698.1 L389.2,696.2 L400.6,696.2 L400.6,697.7 L411.9,697.7 L411.9,695.0 L423.2,695.0 L423.2,695.6 L434.6,695.6 L434.6,696.3 L445.9,696.3 L445.9,694.3 L457.2,694.3 L457.2,696.0 L468.6,696.0 L468.6,697.5 L479.9,697.5 L479.9,665.3 L491.2,665.3 L491.2,665.3 L502.5,665.3 L502.5,665.3 L513.9,665.3 L513.9,663.6 L525.2,663.6 L525.2,694.3 L536.5,694.3 L536.5,651.6 L547.9,651.6 L547.9,696.3 L559.2,696.3 L559.2,696.0 L570.5,696.0 L570.5,646.9 L581.9,646.9 L581.9,665.0 L593.2,665.0 L593.2,696.4 L604.5,696.4 L604.5,695.8 L615.8,695.8 L615.8,699.2 L627.2,699.2 L627.2,693.6 L638.5,693.6 L638.5,696.3 L649.8,696.3 L649.8,657.3 L661.2,657.3 L661.2,694.6 L672.5,694.6 L672.5,696.0 L683.8,696.0 L683.8,696.5 L695.2,696.5 L695.1,695.3 L706.5,695.3 L706.5,699.0 L717.8,699.0 L717.8,666.0 L729.1,666.0 L729.1,666.0 L740.5,666.0 L740.5,666.0 L751.8,666.0 L751.8,666.0 L763.1,666.0 L763.1,699.4 Z" fill="#6dc54b" fill-opacity="0.3"/><path d="M72.0,694.7 L83.3,694.7 L83.3,697.5 L94.7,697.5 L94.7,693.9 L106.0,693.9 L106.0,694.3 L117.3,694.3 L117.3,697.3 L128.7,697.3 L128.7,698.9 L140.0,698.9 L140.0,696.8 L151.3,696.8 L151.3,696.1 L162.6,696.1 L162.6,694.8 L174.0,694.8 L174.0,658.3 L185.3,658.3 L185.3,699.2 L196.6,699.2 L196.6,694.5 L208.0,694.5 L208.0,699.0 L219.3,699.0 L219.3,663.8 L230.6,663.8 L230.6,698.4 L242.0,698.4 L241.9,662.8 L253.3,662.8 L253.3,660.6 L264.6,660.6 L264.6,660.6 L275.9,660.6 L275.9,698.5 L287.3,698.5 L287.3,696.3 L298.6,696.3 L298.6,695.1 L309.9,695.1 L309.9,694.4 L321.3,694.4 L321.3,666.0 L332.6,666.0 L332.6,660.6 L343.9,660.6 L343.9,696.4 L355.2,696.4 L355.2,693.7 L366.6,693.7 L366.6,698.9 L377.9,698.9 L377.9,698.1 L389.2,698.1 L389.2,696.2 L400.6,696.2 L400.6,697.7 L411.9,697.7 L411.9,695.0 L423.2,695.0 L423.2,695.6 L434.6,695.6 L434.6,696.3 L445.9,696.3 L445.9,694.3 L457.2,694.3 L457.2,696.0 L468.6,696.0 L468.6,697.5 L479.9,697.5 L479.9,665.3 L491.2,665.3 L491.2,665.3 L502.5,665.3 L502.5,665.3 L513.9,665.3 L513.9,663.6 L525.2,663.6 L525.2,694.3 L536.5,694.3 L536.5,651.6 L547.9,651.6 L547.9,696.3 L559.2,696.3 L559.2,696.0 L570.5,696.0 L570.5,646.9 L581.9,646.9 L581.9,665.0 L593.2,665.0 L593.2,696.4 L604.5,696.4 L604.5,695.8 L615.8,695.8 L615.8,699.2 L627.2,699.2 L627.2,693.6 L638.5,693.6 L638.5,696.3 L649.8,696.3 L649.8,657.3 L661.2,657.3 L661.2,694.6 L672.5,694.6 L672.5,696.0 L683.8,696.0 L683.8,696.5 L695.2,696.5 L695.1,695.3 L706.5,695.3 L706.5,699.0 L717.8,699.0 L717.8,666.0 L729.1,666.0 L729.1,666.0 L740.5,666.0 L740.5,666.0 L751.8,666.0 L751.8,666.0 L763.1,666.0" fill="none" stroke="#6dc54b" stroke-width="1.5" stroke-linejoin="miter"/><path d="M72.0,699.4 L72.0,697.8 L83.3,697.8 L83.3,696.6 L94.7,696.6 L94.7,650.4 L106.0,650.4 L106.0,671.7 L117.3,671.7 L117.3,694.5 L128.7,694.5 L128.7,694.0 L140.0,694.0 L140.0,673.0 L151.3,673.0 L151.3,697.5 L162.6,697.5 L162.6,670.0 L174.0,670.0 L174.0,665.0 L185.3,665.0 L185.3,693.8 L196.6,693.8 L196.6,698.6 L208.0,698.6 L208.0,694.7 L219.3,694.7 L219.3,673.0 L230.6,673.0 L230.6,673.0 L242.0,673.0 L241.9,669.0 L253.3,669.0 L253.3,669.0 L264.6,669.0 L264.6,669.0 L275.9,669.0 L275.9,697.3 L287.3,697.3 L287.3,695.7 L298.6,695.7 L298.6,698.8 L309.9,698.8 L309.9,695.0 L321.3,695.0 L321.3,698.7 L332.6,698.7 L332.6,696.3 L343.9,696.3 L343.9,697.9 L355.2,697.9 L355.2,698.2 L366.6,698.2 L366.6,696.2 L377.9,696.2 L377.9,696.8 L389.2,696.8 L389.2,676.0 L400.6,676.0 L400.6,696.9 L411.9,696.9 L411.9,696.2 L423.2,696.2 L423.2,698.4 L434.6,698.4 L434.6,698.2 L445.9,698.2 L445.9,695.6 L457.2,695.6 L457.2,672.0 L468.6,672.0 L468.6,671.0 L479.9,671.0 L479.9,694.3 L491.2,694.3 L491.2,695.7 L502.5,695.7 L502.5,694.3 L513.9,694.3 L513.9,698.0 L525.2,698.0 L525.2,695.0 L536.5,695.0 L536.5,694.5 L547.9,694.5 L547.9,694.0 L559.2,694.0 L559.2,673.0 L570.5,673.0 L570.5,697.5 L581.9,697.5 L581.9,662.0 L593.2,662.0 L593.2,662.0 L604.5,662.0 L604.5,661.0 L615.8,661.0 L615.8,694.1 L627.2,694.1 L627.2,698.6 L638.5,698.6 L638.5,672.0 L649.8,672.0 L649.8,671.0 L661.2,671.0 L661.2,697.8 L672.5,697.8 L672.5,698.8 L683.8,698.8 L683.8,694.4 L695.2,694.4 L695.1,696.9 L706.5,696.9 L706.5,694.7 L717.8,694.7 L717.8,698.6 L729.1,698.6 L729.1,697.0 L740.5,697.0 L740.5,695.3 L751.8,695.3 L751.8,699.3 L763.1,699.3 L763.1,699.4 Z" fill="#c9b541" fill-opacity="0.28"/><path d="M72.0,697.8 L83.3,697.8 L83.3,696.6 L94.7,696.6 L94.7,650.4 L106.0,650.4 L106.0,671.7 L117.3,671.7 L117.3,694.5 L128.7,694.5 L128.7,694.0 L140.0,694.0 L140.0,673.0 L151.3,673.0 L151.3,697.5 L162.6,697.5 L162.6,670.0 L174.0,670.0 L174.0,665.0 L185.3,665.0 L185.3,693.8 L196.6,693.8 L196.6,698.6 L208.0,698.6 L208.0,694.7 L219.3,694.7 L219.3,673.0 L230.6,673.0 L230.6,673.0 L242.0,673.0 L241.9,669.0 L253.3,669.0 L253.3,669.0 L264.6,669.0 L264.6,669.0 L275.9,669.0 L275.9,697.3 L287.3,697.3 L287.3,695.7 L298.6,695.7 L298.6,698.8 L309.9,698.8 L309.9,695.0 L321.3,695.0 L321.3,698.7 L332.6,698.7 L332.6,696.3 L343.9,696.3 L343.9,697.9 L355.2,697.9 L355.2,698.2 L366.6,698.2 L366.6,696.2 L377.9,696.2 L377.9,696.8 L389.2,696.8 L389.2,676.0 L400.6,676.0 L400.6,696.9 L411.9,696.9 L411.9,696.2 L423.2,696.2 L423.2,698.4 L434.6,698.4 L434.6,698.2 L445.9,698.2 L445.9,695.6 L457.2,695.6 L457.2,672.0 L468.6,672.0 L468.6,671.0 L479.9,671.0 L479.9,694.3 L491.2,694.3 L491.2,695.7 L502.5,695.7 L502.5,694.3 L513.9,694.3 L513.9,698.0 L525.2,698.0 L525.2,695.0 L536.5,695.0 L536.5,694.5 L547.9,694.5 L547.9,694.0 L559.2,694.0 L559.2,673.0 L570.5,673.0 L570.5,697.5 L581.9,697.5 L581.9,662.0 L593.2,662.0 L593.2,662.0 L604.5,662.0 L604.5,661.0 L615.8,661.0 L615.8,694.1 L627.2,694.1 L627.2,698.6 L638.5,698.6 L638.5,672.0 L649.8,672.0 L649.8,671.0 L661.2,671.0 L661.2,697.8 L672.5,697.8 L672.5,698.8 L683.8,698.8 L683.8,694.4 L695.2,694.4 L695.1,696.9 L706.5,696.9 L706.5,694.7 L717.8,694.7 L717.8,698.6 L729.1,698.6 L729.1,697.0 L740.5,697.0 L740.5,695.3 L751.8,695.3 L751.8,699.3 L763.1,699.3" fill="none" stroke="#c9b541" stroke-width="1.5" stroke-linejoin="miter"/><path d="M72.0,699.4 L72.0,698.6 L83.3,698.6 L83.3,696.7 L94.7,696.7 L94.7,695.8 L106.0,695.8 L106.0,695.5 L117.3,695.5 L117.3,664.4 L128.7,664.4 L128.7,628.5 L140.0,628.5 L140.0,696.4 L151.3,696.4 L151.3,697.4 L162.6,697.4 L162.6,696.7 L174.0,696.7 L174.0,689.0 L185.3,689.0 L185.3,689.0 L196.6,689.0 L196.6,689.0 L208.0,689.0 L208.0,699.3 L219.3,699.3 L219.3,697.2 L230.6,697.2 L230.6,697.3 L242.0,697.3 L241.9,697.1 L253.3,697.1 L253.3,698.8 L264.6,698.8 L264.6,698.7 L275.9,698.7 L275.9,698.6 L287.3,698.6 L287.3,696.0 L298.6,696.0 L298.6,695.4 L309.9,695.4 L309.9,695.7 L321.3,695.7 L321.3,699.0 L332.6,699.0 L332.6,680.0 L343.9,680.0 L343.9,680.0 L355.2,680.0 L355.2,697.6 L366.6,697.6 L366.6,696.3 L377.9,696.3 L377.9,698.1 L389.2,698.1 L389.2,667.0 L400.6,667.0 L400.6,697.3 L411.9,697.3 L411.9,641.5 L423.2,641.5 L423.2,697.0 L434.6,697.0 L434.6,699.3 L445.9,699.3 L445.9,696.6 L457.2,696.6 L457.2,696.0 L468.6,696.0 L468.6,698.7 L479.9,698.7 L479.9,697.6 L491.2,697.6 L491.2,696.4 L502.5,696.4 L502.5,697.8 L513.9,697.8 L513.9,698.6 L525.2,698.6 L525.2,698.7 L536.5,698.7 L536.5,697.3 L547.9,697.3 L547.9,699.3 L559.2,699.3 L559.2,695.8 L570.5,695.8 L570.5,696.2 L581.9,696.2 L581.9,696.6 L593.2,696.6 L593.2,696.0 L604.5,696.0 L604.5,696.9 L615.8,696.9 L615.8,697.8 L627.2,697.8 L627.2,697.0 L638.5,697.0 L638.5,697.4 L649.8,697.4 L649.8,695.5 L661.2,695.5 L661.2,638.3 L672.5,638.3 L672.5,647.2 L683.8,647.2 L683.8,695.8 L695.2,695.8 L695.1,645.3 L706.5,645.3 L706.5,639.9 L717.8,639.9 L717.8,696.1 L729.1,696.1 L729.1,697.8 L740.5,697.8 L740.5,695.8 L751.8,695.8 L751.8,695.9 L763.1,695.9 L763.1,699.4 Z" fill="#e09a5a" fill-opacity="0.3"/><path d="M72.0,698.6 L83.3,698.6 L83.3,696.7 L94.7,696.7 L94.7,695.8 L106.0,695.8 L106.0,695.5 L117.3,695.5 L117.3,664.4 L128.7,664.4 L128.7,628.5 L140.0,628.5 L140.0,696.4 L151.3,696.4 L151.3,697.4 L162.6,697.4 L162.6,696.7 L174.0,696.7 L174.0,689.0 L185.3,689.0 L185.3,689.0 L196.6,689.0 L196.6,689.0 L208.0,689.0 L208.0,699.3 L219.3,699.3 L219.3,697.2 L230.6,697.2 L230.6,697.3 L242.0,697.3 L241.9,697.1 L253.3,697.1 L253.3,698.8 L264.6,698.8 L264.6,698.7 L275.9,698.7 L275.9,698.6 L287.3,698.6 L287.3,696.0 L298.6,696.0 L298.6,695.4 L309.9,695.4 L309.9,695.7 L321.3,695.7 L321.3,699.0 L332.6,699.0 L332.6,680.0 L343.9,680.0 L343.9,680.0 L355.2,680.0 L355.2,697.6 L366.6,697.6 L366.6,696.3 L377.9,696.3 L377.9,698.1 L389.2,698.1 L389.2,667.0 L400.6,667.0 L400.6,697.3 L411.9,697.3 L411.9,641.5 L423.2,641.5 L423.2,697.0 L434.6,697.0 L434.6,699.3 L445.9,699.3 L445.9,696.6 L457.2,696.6 L457.2,696.0 L468.6,696.0 L468.6,698.7 L479.9,698.7 L479.9,697.6 L491.2,697.6 L491.2,696.4 L502.5,696.4 L502.5,697.8 L513.9,697.8 L513.9,698.6 L525.2,698.6 L525.2,698.7 L536.5,698.7 L536.5,697.3 L547.9,697.3 L547.9,699.3 L559.2,699.3 L559.2,695.8 L570.5,695.8 L570.5,696.2 L581.9,696.2 L581.9,696.6 L593.2,696.6 L593.2,696.0 L604.5,696.0 L604.5,696.9 L615.8,696.9 L615.8,697.8 L627.2,697.8 L627.2,697.0 L638.5,697.0 L638.5,697.4 L649.8,697.4 L649.8,695.5 L661.2,695.5 L661.2,638.3 L672.5,638.3 L672.5,647.2 L683.8,647.2 L683.8,695.8 L695.2,695.8 L695.1,645.3 L706.5,645.3 L706.5,639.9 L717.8,639.9 L717.8,696.1 L729.1,696.1 L729.1,697.8 L740.5,697.8 L740.5,695.8 L751.8,695.8 L751.8,695.9 L763.1,695.9" fill="none" stroke="#e09a5a" stroke-width="1.5" stroke-linejoin="miter"/><path d="M72.0,699.4 L72.0,696.6 L83.3,696.6 L83.3,696.3 L94.7,696.3 L94.7,665.0 L106.0,665.0 L106.0,697.8 L117.3,697.8 L117.3,696.5 L128.7,696.5 L128.7,699.1 L140.0,699.1 L140.0,698.0 L151.3,698.0 L151.3,697.5 L162.6,697.5 L162.6,699.4 L174.0,699.4 L174.0,698.0 L185.3,698.0 L185.3,696.8 L196.6,696.8 L196.6,696.9 L208.0,696.9 L208.0,698.5 L219.3,698.5 L219.3,695.6 L230.6,695.6 L230.6,696.7 L242.0,696.7 L241.9,698.0 L253.3,698.0 L253.3,696.8 L264.6,696.8 L264.6,697.1 L275.9,697.1 L275.9,670.0 L287.3,670.0 L287.3,697.8 L298.6,697.8 L298.6,695.4 L309.9,695.4 L309.9,696.8 L321.3,696.8 L321.3,696.6 L332.6,696.6 L332.6,670.0 L343.9,670.0 L343.9,695.5 L355.2,695.5 L355.2,699.3 L366.6,699.3 L366.6,696.9 L377.9,696.9 L377.9,696.4 L389.2,696.4 L389.2,698.4 L400.6,698.4 L400.6,697.8 L411.9,697.8 L411.9,670.0 L423.2,670.0 L423.2,698.6 L434.6,698.6 L434.6,697.9 L445.9,697.9 L445.9,699.0 L457.2,699.0 L457.2,698.4 L468.6,698.4 L468.6,695.8 L479.9,695.8 L479.9,697.2 L491.2,697.2 L491.2,697.4 L502.5,697.4 L502.5,695.5 L513.9,695.5 L513.9,697.1 L525.2,697.1 L525.2,695.4 L536.5,695.4 L536.5,696.8 L547.9,696.8 L547.9,664.0 L559.2,664.0 L559.2,699.1 L570.5,699.1 L570.5,697.0 L581.9,697.0 L581.9,666.0 L593.2,666.0 L593.2,699.2 L604.5,699.2 L604.5,695.7 L615.8,695.7 L615.8,698.8 L627.2,698.8 L627.2,697.5 L638.5,697.5 L638.5,698.7 L649.8,698.7 L649.8,668.0 L661.2,668.0 L661.2,697.0 L672.5,697.0 L672.5,699.2 L683.8,699.2 L683.8,695.6 L695.2,695.6 L695.1,697.7 L706.5,697.7 L706.5,697.3 L717.8,697.3 L717.8,697.0 L729.1,697.0 L729.1,697.9 L740.5,697.9 L740.5,698.3 L751.8,698.3 L751.8,696.8 L763.1,696.8 L763.1,699.4 Z" fill="#8dc54b" fill-opacity="0.3"/><path d="M72.0,696.6 L83.3,696.6 L83.3,696.3 L94.7,696.3 L94.7,665.0 L106.0,665.0 L106.0,697.8 L117.3,697.8 L117.3,696.5 L128.7,696.5 L128.7,699.1 L140.0,699.1 L140.0,698.0 L151.3,698.0 L151.3,697.5 L162.6,697.5 L162.6,699.4 L174.0,699.4 L174.0,698.0 L185.3,698.0 L185.3,696.8 L196.6,696.8 L196.6,696.9 L208.0,696.9 L208.0,698.5 L219.3,698.5 L219.3,695.6 L230.6,695.6 L230.6,696.7 L242.0,696.7 L241.9,698.0 L253.3,698.0 L253.3,696.8 L264.6,696.8 L264.6,697.1 L275.9,697.1 L275.9,670.0 L287.3,670.0 L287.3,697.8 L298.6,697.8 L298.6,695.4 L309.9,695.4 L309.9,696.8 L321.3,696.8 L321.3,696.6 L332.6,696.6 L332.6,670.0 L343.9,670.0 L343.9,695.5 L355.2,695.5 L355.2,699.3 L366.6,699.3 L366.6,696.9 L377.9,696.9 L377.9,696.4 L389.2,696.4 L389.2,698.4 L400.6,698.4 L400.6,697.8 L411.9,697.8 L411.9,670.0 L423.2,670.0 L423.2,698.6 L434.6,698.6 L434.6,697.9 L445.9,697.9 L445.9,699.0 L457.2,699.0 L457.2,698.4 L468.6,698.4 L468.6,695.8 L479.9,695.8 L479.9,697.2 L491.2,697.2 L491.2,697.4 L502.5,697.4 L502.5,695.5 L513.9,695.5 L513.9,697.1 L525.2,697.1 L525.2,695.4 L536.5,695.4 L536.5,696.8 L547.9,696.8 L547.9,664.0 L559.2,664.0 L559.2,699.1 L570.5,699.1 L570.5,697.0 L581.9,697.0 L581.9,666.0 L593.2,666.0 L593.2,699.2 L604.5,699.2 L604.5,695.7 L615.8,695.7 L615.8,698.8 L627.2,698.8 L627.2,697.5 L638.5,697.5 L638.5,698.7 L649.8,698.7 L649.8,668.0 L661.2,668.0 L661.2,697.0 L672.5,697.0 L672.5,699.2 L683.8,699.2 L683.8,695.6 L695.2,695.6 L695.1,697.7 L706.5,697.7 L706.5,697.3 L717.8,697.3 L717.8,697.0 L729.1,697.0 L729.1,697.9 L740.5,697.9 L740.5,698.3 L751.8,698.3 L751.8,696.8 L763.1,696.8" fill="none" stroke="#8dc54b" stroke-width="1.5" stroke-linejoin="miter"/><path d="M72.0,699.4 L72.0,698.3 L83.3,698.3 L83.3,698.8 L94.7,698.8 L94.7,698.0 L106.0,698.0 L106.0,698.8 L117.3,698.8 L117.3,671.0 L128.7,671.0 L128.7,671.0 L140.0,671.0 L140.0,699.3 L151.3,699.3 L151.3,699.1 L162.6,699.1 L162.6,697.9 L174.0,697.9 L174.0,698.6 L185.3,698.6 L185.3,697.6 L196.6,697.6 L196.6,697.9 L208.0,697.9 L208.0,699.3 L219.3,699.3 L219.3,697.4 L230.6,697.4 L230.6,697.5 L242.0,697.5 L241.9,699.3 L253.3,699.3 L253.3,697.6 L264.6,697.6 L264.6,698.5 L275.9,698.5 L275.9,698.4 L287.3,698.4 L287.3,697.5 L298.6,697.5 L298.6,698.9 L309.9,698.9 L309.9,698.4 L321.3,698.4 L321.3,697.5 L332.6,697.5 L332.6,698.0 L343.9,698.0 L343.9,698.5 L355.2,698.5 L355.2,697.4 L366.6,697.4 L366.6,697.8 L377.9,697.8 L377.9,698.2 L389.2,698.2 L389.2,699.2 L400.6,699.2 L400.6,698.2 L411.9,698.2 L411.9,698.5 L423.2,698.5 L423.2,699.0 L434.6,699.0 L434.6,699.3 L445.9,699.3 L445.9,698.3 L457.2,698.3 L457.2,699.2 L468.6,699.2 L468.6,698.5 L479.9,698.5 L479.9,698.1 L491.2,698.1 L491.2,698.5 L502.5,698.5 L502.5,698.9 L513.9,698.9 L513.9,698.2 L525.2,698.2 L525.2,698.6 L536.5,698.6 L536.5,697.8 L547.9,697.8 L547.9,698.3 L559.2,698.3 L559.2,697.4 L570.5,697.4 L570.5,697.5 L581.9,697.5 L581.9,697.9 L593.2,697.9 L593.2,698.9 L604.5,698.9 L604.5,699.2 L615.8,699.2 L615.8,697.6 L627.2,697.6 L627.2,697.8 L638.5,697.8 L638.5,698.2 L649.8,698.2 L649.8,698.7 L661.2,698.7 L661.2,698.9 L672.5,698.9 L672.5,698.0 L683.8,698.0 L683.8,698.3 L695.2,698.3 L695.1,698.2 L706.5,698.2 L706.5,698.1 L717.8,698.1 L717.8,697.9 L729.1,697.9 L729.1,699.0 L740.5,699.0 L740.5,698.9 L751.8,698.9 L751.8,697.4 L763.1,697.4 L763.1,699.4 Z" fill="#b05cc8" fill-opacity="0.3"/><path d="M72.0,698.3 L83.3,698.3 L83.3,698.8 L94.7,698.8 L94.7,698.0 L106.0,698.0 L106.0,698.8 L117.3,698.8 L117.3,671.0 L128.7,671.0 L128.7,671.0 L140.0,671.0 L140.0,699.3 L151.3,699.3 L151.3,699.1 L162.6,699.1 L162.6,697.9 L174.0,697.9 L174.0,698.6 L185.3,698.6 L185.3,697.6 L196.6,697.6 L196.6,697.9 L208.0,697.9 L208.0,699.3 L219.3,699.3 L219.3,697.4 L230.6,697.4 L230.6,697.5 L242.0,697.5 L241.9,699.3 L253.3,699.3 L253.3,697.6 L264.6,697.6 L264.6,698.5 L275.9,698.5 L275.9,698.4 L287.3,698.4 L287.3,697.5 L298.6,697.5 L298.6,698.9 L309.9,698.9 L309.9,698.4 L321.3,698.4 L321.3,697.5 L332.6,697.5 L332.6,698.0 L343.9,698.0 L343.9,698.5 L355.2,698.5 L355.2,697.4 L366.6,697.4 L366.6,697.8 L377.9,697.8 L377.9,698.2 L389.2,698.2 L389.2,699.2 L400.6,699.2 L400.6,698.2 L411.9,698.2 L411.9,698.5 L423.2,698.5 L423.2,699.0 L434.6,699.0 L434.6,699.3 L445.9,699.3 L445.9,698.3 L457.2,698.3 L457.2,699.2 L468.6,699.2 L468.6,698.5 L479.9,698.5 L479.9,698.1 L491.2,698.1 L491.2,698.5 L502.5,698.5 L502.5,698.9 L513.9,698.9 L513.9,698.2 L525.2,698.2 L525.2,698.6 L536.5,698.6 L536.5,697.8 L547.9,697.8 L547.9,698.3 L559.2,698.3 L559.2,697.4 L570.5,697.4 L570.5,697.5 L581.9,697.5 L581.9,697.9 L593.2,697.9 L593.2,698.9 L604.5,698.9 L604.5,699.2 L615.8,699.2 L615.8,697.6 L627.2,697.6 L627.2,697.8 L638.5,697.8 L638.5,698.2 L649.8,698.2 L649.8,698.7 L661.2,698.7 L661.2,698.9 L672.5,698.9 L672.5,698.0 L683.8,698.0 L683.8,698.3 L695.2,698.3 L695.1,698.2 L706.5,698.2 L706.5,698.1 L717.8,698.1 L717.8,697.9 L729.1,697.9 L729.1,699.0 L740.5,699.0 L740.5,698.9 L751.8,698.9 L751.8,697.4 L763.1,697.4" fill="none" stroke="#b05cc8" stroke-width="1.5" stroke-linejoin="miter"/><path d="M72.0,699.4 L72.0,686.2 L83.3,686.2 L83.3,686.6 L94.7,686.6 L94.7,695.0 L106.0,695.0 L106.0,694.8 L117.3,694.8 L117.3,692.7 L128.7,692.7 L128.7,691.1 L140.0,691.1 L140.0,689.2 L151.3,689.2 L151.3,694.4 L162.6,694.4 L162.6,690.0 L174.0,690.0 L174.0,694.7 L185.3,694.7 L185.3,694.5 L196.6,694.5 L196.6,688.6 L208.0,688.6 L208.0,689.9 L219.3,689.9 L219.3,689.1 L230.6,689.1 L230.6,691.7 L242.0,691.7 L241.9,690.6 L253.3,690.6 L253.3,693.3 L264.6,693.3 L264.6,692.0 L275.9,692.0 L275.9,688.0 L287.3,688.0 L287.3,687.0 L298.6,687.0 L298.6,694.7 L309.9,694.7 L309.9,694.2 L321.3,694.2 L321.3,687.3 L332.6,687.3 L332.6,689.2 L343.9,689.2 L343.9,687.7 L355.2,687.7 L355.2,693.3 L366.6,693.3 L366.6,691.2 L377.9,691.2 L377.9,692.8 L389.2,692.8 L389.2,687.3 L400.6,687.3 L400.6,691.7 L411.9,691.7 L411.9,688.9 L423.2,688.9 L423.2,685.5 L434.6,685.5 L434.6,692.1 L445.9,692.1 L445.9,689.9 L457.2,689.9 L457.2,687.9 L468.6,687.9 L468.6,686.2 L479.9,686.2 L479.9,691.1 L491.2,691.1 L491.2,691.7 L502.5,691.7 L502.5,694.4 L513.9,694.4 L513.9,686.6 L525.2,686.6 L525.2,694.6 L536.5,694.6 L536.5,694.6 L547.9,694.6 L547.9,689.8 L559.2,689.8 L559.2,690.6 L570.5,690.6 L570.5,688.5 L581.9,688.5 L581.9,692.4 L593.2,692.4 L593.2,687.6 L604.5,687.6 L604.5,694.6 L615.8,694.6 L615.8,693.3 L627.2,693.3 L627.2,688.8 L638.5,688.8 L638.5,694.6 L649.8,694.6 L649.8,692.4 L661.2,692.4 L661.2,688.2 L672.5,688.2 L672.5,688.5 L683.8,688.5 L683.8,692.6 L695.2,692.6 L695.1,694.0 L706.5,694.0 L706.5,691.8 L717.8,691.8 L717.8,688.1 L729.1,688.1 L729.1,691.7 L740.5,691.7 L740.5,694.2 L751.8,694.2 L751.8,688.3 L763.1,688.3 L763.1,699.4 Z" fill="#c9b541" fill-opacity="0.12"/><path d="M72.0,686.2 L83.3,686.2 L83.3,686.6 L94.7,686.6 L94.7,695.0 L106.0,695.0 L106.0,694.8 L117.3,694.8 L117.3,692.7 L128.7,692.7 L128.7,691.1 L140.0,691.1 L140.0,689.2 L151.3,689.2 L151.3,694.4 L162.6,694.4 L162.6,690.0 L174.0,690.0 L174.0,694.7 L185.3,694.7 L185.3,694.5 L196.6,694.5 L196.6,688.6 L208.0,688.6 L208.0,689.9 L219.3,689.9 L219.3,689.1 L230.6,689.1 L230.6,691.7 L242.0,691.7 L241.9,690.6 L253.3,690.6 L253.3,693.3 L264.6,693.3 L264.6,692.0 L275.9,692.0 L275.9,688.0 L287.3,688.0 L287.3,687.0 L298.6,687.0 L298.6,694.7 L309.9,694.7 L309.9,694.2 L321.3,694.2 L321.3,687.3 L332.6,687.3 L332.6,689.2 L343.9,689.2 L343.9,687.7 L355.2,687.7 L355.2,693.3 L366.6,693.3 L366.6,691.2 L377.9,691.2 L377.9,692.8 L389.2,692.8 L389.2,687.3 L400.6,687.3 L400.6,691.7 L411.9,691.7 L411.9,688.9 L423.2,688.9 L423.2,685.5 L434.6,685.5 L434.6,692.1 L445.9,692.1 L445.9,689.9 L457.2,689.9 L457.2,687.9 L468.6,687.9 L468.6,686.2 L479.9,686.2 L479.9,691.1 L491.2,691.1 L491.2,691.7 L502.5,691.7 L502.5,694.4 L513.9,694.4 L513.9,686.6 L525.2,686.6 L525.2,694.6 L536.5,694.6 L536.5,694.6 L547.9,694.6 L547.9,689.8 L559.2,689.8 L559.2,690.6 L570.5,690.6 L570.5,688.5 L581.9,688.5 L581.9,692.4 L593.2,692.4 L593.2,687.6 L604.5,687.6 L604.5,694.6 L615.8,694.6 L615.8,693.3 L627.2,693.3 L627.2,688.8 L638.5,688.8 L638.5,694.6 L649.8,694.6 L649.8,692.4 L661.2,692.4 L661.2,688.2 L672.5,688.2 L672.5,688.5 L683.8,688.5 L683.8,692.6 L695.2,692.6 L695.1,694.0 L706.5,694.0 L706.5,691.8 L717.8,691.8 L717.8,688.1 L729.1,688.1 L729.1,691.7 L740.5,691.7 L740.5,694.2 L751.8,694.2 L751.8,688.3 L763.1,688.3" fill="none" stroke="#c9b541" stroke-width="1.5" stroke-linejoin="miter"/><path d="M72.0,699.4 L72.0,687.8 L83.3,687.8 L83.3,685.1 L94.7,685.1 L94.7,684.9 L106.0,684.9 L106.0,685.1 L117.3,685.1 L117.3,688.9 L128.7,688.9 L128.7,686.0 L140.0,686.0 L140.0,690.0 L151.3,690.0 L151.3,689.9 L162.6,689.9 L162.6,689.2 L174.0,689.2 L174.0,684.9 L185.3,684.9 L185.3,685.2 L196.6,685.2 L196.6,690.4 L208.0,690.4 L208.0,689.5 L219.3,689.5 L219.3,689.5 L230.6,689.5 L230.6,689.5 L242.0,689.5 L241.9,689.2 L253.3,689.2 L253.3,689.3 L264.6,689.3 L264.6,690.8 L275.9,690.8 L275.9,687.9 L287.3,687.9 L287.3,686.0 L298.6,686.0 L298.6,688.1 L309.9,688.1 L309.9,685.7 L321.3,685.7 L321.3,687.9 L332.6,687.9 L332.6,691.0 L343.9,691.0 L343.9,686.3 L355.2,686.3 L355.2,685.4 L366.6,685.4 L366.6,690.1 L377.9,690.1 L377.9,692.2 L389.2,692.2 L389.2,688.3 L400.6,688.3 L400.6,688.0 L411.9,688.0 L411.9,687.9 L423.2,687.9 L423.2,684.7 L434.6,684.7 L434.6,687.2 L445.9,687.2 L445.9,686.0 L457.2,686.0 L457.2,691.9 L468.6,691.9 L468.6,688.0 L479.9,688.0 L479.9,686.1 L491.2,686.1 L491.2,691.7 L502.5,691.7 L502.5,691.7 L513.9,691.7 L513.9,686.5 L525.2,686.5 L525.2,685.2 L536.5,685.2 L536.5,691.7 L547.9,691.7 L547.9,687.3 L559.2,687.3 L559.2,691.2 L570.5,691.2 L570.5,686.4 L581.9,686.4 L581.9,687.2 L593.2,687.2 L593.2,690.4 L604.5,690.4 L604.5,690.6 L615.8,690.6 L615.8,686.3 L627.2,686.3 L627.2,688.2 L638.5,688.2 L638.5,686.3 L649.8,686.3 L649.8,689.2 L661.2,689.2 L661.2,689.7 L672.5,689.7 L672.5,684.7 L683.8,684.7 L683.8,687.0 L695.2,687.0 L695.1,688.5 L706.5,688.5 L706.5,688.1 L717.8,688.1 L717.8,686.6 L729.1,686.6 L729.1,686.7 L740.5,686.7 L740.5,685.1 L751.8,685.1 L751.8,689.1 L763.1,689.1 L763.1,699.4 Z" fill="#9aa6d4" fill-opacity="0.12"/><path d="M72.0,687.8 L83.3,687.8 L83.3,685.1 L94.7,685.1 L94.7,684.9 L106.0,684.9 L106.0,685.1 L117.3,685.1 L117.3,688.9 L128.7,688.9 L128.7,686.0 L140.0,686.0 L140.0,690.0 L151.3,690.0 L151.3,689.9 L162.6,689.9 L162.6,689.2 L174.0,689.2 L174.0,684.9 L185.3,684.9 L185.3,685.2 L196.6,685.2 L196.6,690.4 L208.0,690.4 L208.0,689.5 L219.3,689.5 L219.3,689.5 L230.6,689.5 L230.6,689.5 L242.0,689.5 L241.9,689.2 L253.3,689.2 L253.3,689.3 L264.6,689.3 L264.6,690.8 L275.9,690.8 L275.9,687.9 L287.3,687.9 L287.3,686.0 L298.6,686.0 L298.6,688.1 L309.9,688.1 L309.9,685.7 L321.3,685.7 L321.3,687.9 L332.6,687.9 L332.6,691.0 L343.9,691.0 L343.9,686.3 L355.2,686.3 L355.2,685.4 L366.6,685.4 L366.6,690.1 L377.9,690.1 L377.9,692.2 L389.2,692.2 L389.2,688.3 L400.6,688.3 L400.6,688.0 L411.9,688.0 L411.9,687.9 L423.2,687.9 L423.2,684.7 L434.6,684.7 L434.6,687.2 L445.9,687.2 L445.9,686.0 L457.2,686.0 L457.2,691.9 L468.6,691.9 L468.6,688.0 L479.9,688.0 L479.9,686.1 L491.2,686.1 L491.2,691.7 L502.5,691.7 L502.5,691.7 L513.9,691.7 L513.9,686.5 L525.2,686.5 L525.2,685.2 L536.5,685.2 L536.5,691.7 L547.9,691.7 L547.9,687.3 L559.2,687.3 L559.2,691.2 L570.5,691.2 L570.5,686.4 L581.9,686.4 L581.9,687.2 L593.2,687.2 L593.2,690.4 L604.5,690.4 L604.5,690.6 L615.8,690.6 L615.8,686.3 L627.2,686.3 L627.2,688.2 L638.5,688.2 L638.5,686.3 L649.8,686.3 L649.8,689.2 L661.2,689.2 L661.2,689.7 L672.5,689.7 L672.5,684.7 L683.8,684.7 L683.8,687.0 L695.2,687.0 L695.1,688.5 L706.5,688.5 L706.5,688.1 L717.8,688.1 L717.8,686.6 L729.1,686.6 L729.1,686.7 L740.5,686.7 L740.5,685.1 L751.8,685.1 L751.8,689.1 L763.1,689.1" fill="none" stroke="#9aa6d4" stroke-width="1.5" stroke-linejoin="miter"/><path d="M72.0,699.4 L72.0,693.4 L83.3,693.4 L83.3,694.4 L94.7,694.4 L94.7,693.3 L106.0,693.3 L106.0,693.6 L117.3,693.6 L117.3,693.4 L128.7,693.4 L128.7,693.1 L140.0,693.1 L140.0,692.7 L151.3,692.7 L151.3,694.6 L162.6,694.6 L162.6,695.3 L174.0,695.3 L174.0,694.1 L185.3,694.1 L185.3,693.6 L196.6,693.6 L196.6,695.9 L208.0,695.9 L208.0,695.9 L219.3,695.9 L219.3,697.5 L230.6,697.5 L230.6,694.0 L242.0,694.0 L241.9,692.5 L253.3,692.5 L253.3,696.1 L264.6,696.1 L264.6,697.4 L275.9,697.4 L275.9,697.2 L287.3,697.2 L287.3,695.9 L298.6,695.9 L298.6,696.6 L309.9,696.6 L309.9,692.6 L321.3,692.6 L321.3,698.0 L332.6,698.0 L332.6,696.5 L343.9,696.5 L343.9,697.7 L355.2,697.7 L355.2,694.5 L366.6,694.5 L366.6,693.7 L377.9,693.7 L377.9,697.3 L389.2,697.3 L389.2,698.0 L400.6,698.0 L400.6,695.6 L411.9,695.6 L411.9,694.9 L423.2,694.9 L423.2,692.9 L434.6,692.9 L434.6,698.2 L445.9,698.2 L445.9,697.7 L457.2,697.7 L457.2,697.3 L468.6,697.3 L468.6,697.1 L479.9,697.1 L479.9,697.0 L491.2,697.0 L491.2,694.1 L502.5,694.1 L502.5,694.8 L513.9,694.8 L513.9,697.1 L525.2,697.1 L525.2,697.3 L536.5,697.3 L536.5,696.7 L547.9,696.7 L547.9,697.4 L559.2,697.4 L559.2,693.9 L570.5,693.9 L570.5,696.5 L581.9,696.5 L581.9,695.1 L593.2,695.1 L593.2,693.5 L604.5,693.5 L604.5,695.5 L615.8,695.5 L615.8,696.8 L627.2,696.8 L627.2,693.1 L638.5,693.1 L638.5,692.9 L649.8,692.9 L649.8,696.3 L661.2,696.3 L661.2,695.1 L672.5,695.1 L672.5,692.7 L683.8,692.7 L683.8,695.5 L695.2,695.5 L695.1,697.1 L706.5,697.1 L706.5,698.1 L717.8,698.1 L717.8,692.7 L729.1,692.7 L729.1,693.6 L740.5,693.6 L740.5,696.1 L751.8,696.1 L751.8,695.2 L763.1,695.2 L763.1,699.4 Z" fill="#6dc54b" fill-opacity="0.2"/><path d="M72.0,693.4 L83.3,693.4 L83.3,694.4 L94.7,694.4 L94.7,693.3 L106.0,693.3 L106.0,693.6 L117.3,693.6 L117.3,693.4 L128.7,693.4 L128.7,693.1 L140.0,693.1 L140.0,692.7 L151.3,692.7 L151.3,694.6 L162.6,694.6 L162.6,695.3 L174.0,695.3 L174.0,694.1 L185.3,694.1 L185.3,693.6 L196.6,693.6 L196.6,695.9 L208.0,695.9 L208.0,695.9 L219.3,695.9 L219.3,697.5 L230.6,697.5 L230.6,694.0 L242.0,694.0 L241.9,692.5 L253.3,692.5 L253.3,696.1 L264.6,696.1 L264.6,697.4 L275.9,697.4 L275.9,697.2 L287.3,697.2 L287.3,695.9 L298.6,695.9 L298.6,696.6 L309.9,696.6 L309.9,692.6 L321.3,692.6 L321.3,698.0 L332.6,698.0 L332.6,696.5 L343.9,696.5 L343.9,697.7 L355.2,697.7 L355.2,694.5 L366.6,694.5 L366.6,693.7 L377.9,693.7 L377.9,697.3 L389.2,697.3 L389.2,698.0 L400.6,698.0 L400.6,695.6 L411.9,695.6 L411.9,694.9 L423.2,694.9 L423.2,692.9 L434.6,692.9 L434.6,698.2 L445.9,698.2 L445.9,697.7 L457.2,697.7 L457.2,697.3 L468.6,697.3 L468.6,697.1 L479.9,697.1 L479.9,697.0 L491.2,697.0 L491.2,694.1 L502.5,694.1 L502.5,694.8 L513.9,694.8 L513.9,697.1 L525.2,697.1 L525.2,697.3 L536.5,697.3 L536.5,696.7 L547.9,696.7 L547.9,697.4 L559.2,697.4 L559.2,693.9 L570.5,693.9 L570.5,696.5 L581.9,696.5 L581.9,695.1 L593.2,695.1 L593.2,693.5 L604.5,693.5 L604.5,695.5 L615.8,695.5 L615.8,696.8 L627.2,696.8 L627.2,693.1 L638.5,693.1 L638.5,692.9 L649.8,692.9 L649.8,696.3 L661.2,696.3 L661.2,695.1 L672.5,695.1 L672.5,692.7 L683.8,692.7 L683.8,695.5 L695.2,695.5 L695.1,697.1 L706.5,697.1 L706.5,698.1 L717.8,698.1 L717.8,692.7 L729.1,692.7 L729.1,693.6 L740.5,693.6 L740.5,696.1 L751.8,696.1 L751.8,695.2 L763.1,695.2" fill="none" stroke="#6dc54b" stroke-width="1.5" stroke-linejoin="miter"/><path d="M72.0,699.4 L72.0,696.8 L83.3,696.8 L83.3,697.8 L94.7,697.8 L94.7,694.9 L106.0,694.9 L106.0,696.3 L117.3,696.3 L117.3,697.9 L128.7,697.9 L128.7,698.9 L140.0,698.9 L140.0,697.0 L151.3,697.0 L151.3,697.4 L162.6,697.4 L162.6,695.7 L174.0,695.7 L174.0,696.0 L185.3,696.0 L185.3,696.5 L196.6,696.5 L196.6,698.3 L208.0,698.3 L208.0,698.3 L219.3,698.3 L219.3,697.6 L230.6,697.6 L230.6,697.9 L242.0,697.9 L241.9,695.4 L253.3,695.4 L253.3,696.8 L264.6,696.8 L264.6,696.4 L275.9,696.4 L275.9,694.9 L287.3,694.9 L287.3,697.8 L298.6,697.8 L298.6,696.8 L309.9,696.8 L309.9,698.3 L321.3,698.3 L321.3,695.8 L332.6,695.8 L332.6,698.9 L343.9,698.9 L343.9,695.6 L355.2,695.6 L355.2,695.5 L366.6,695.5 L366.6,695.6 L377.9,695.6 L377.9,698.6 L389.2,698.6 L389.2,697.8 L400.6,697.8 L400.6,696.0 L411.9,696.0 L411.9,698.5 L423.2,698.5 L423.2,697.0 L434.6,697.0 L434.6,697.0 L445.9,697.0 L445.9,695.1 L457.2,695.1 L457.2,696.6 L468.6,696.6 L468.6,695.5 L479.9,695.5 L479.9,697.7 L491.2,697.7 L491.2,695.7 L502.5,695.7 L502.5,697.2 L513.9,697.2 L513.9,695.2 L525.2,695.2 L525.2,698.5 L536.5,698.5 L536.5,695.6 L547.9,695.6 L547.9,698.1 L559.2,698.1 L559.2,696.7 L570.5,696.7 L570.5,696.8 L581.9,696.8 L581.9,698.3 L593.2,698.3 L593.2,695.6 L604.5,695.6 L604.5,697.7 L615.8,697.7 L615.8,697.7 L627.2,697.7 L627.2,698.6 L638.5,698.6 L638.5,697.7 L649.8,697.7 L649.8,697.0 L661.2,697.0 L661.2,696.0 L672.5,696.0 L672.5,697.5 L683.8,697.5 L683.8,696.2 L695.2,696.2 L695.1,698.5 L706.5,698.5 L706.5,697.3 L717.8,697.3 L717.8,697.1 L729.1,697.1 L729.1,695.0 L740.5,695.0 L740.5,695.6 L751.8,695.6 L751.8,696.3 L763.1,696.3 L763.1,699.4 Z" fill="#e09a5a" fill-opacity="0.2"/><path d="M72.0,696.8 L83.3,696.8 L83.3,697.8 L94.7,697.8 L94.7,694.9 L106.0,694.9 L106.0,696.3 L117.3,696.3 L117.3,697.9 L128.7,697.9 L128.7,698.9 L140.0,698.9 L140.0,697.0 L151.3,697.0 L151.3,697.4 L162.6,697.4 L162.6,695.7 L174.0,695.7 L174.0,696.0 L185.3,696.0 L185.3,696.5 L196.6,696.5 L196.6,698.3 L208.0,698.3 L208.0,698.3 L219.3,698.3 L219.3,697.6 L230.6,697.6 L230.6,697.9 L242.0,697.9 L241.9,695.4 L253.3,695.4 L253.3,696.8 L264.6,696.8 L264.6,696.4 L275.9,696.4 L275.9,694.9 L287.3,694.9 L287.3,697.8 L298.6,697.8 L298.6,696.8 L309.9,696.8 L309.9,698.3 L321.3,698.3 L321.3,695.8 L332.6,695.8 L332.6,698.9 L343.9,698.9 L343.9,695.6 L355.2,695.6 L355.2,695.5 L366.6,695.5 L366.6,695.6 L377.9,695.6 L377.9,698.6 L389.2,698.6 L389.2,697.8 L400.6,697.8 L400.6,696.0 L411.9,696.0 L411.9,698.5 L423.2,698.5 L423.2,697.0 L434.6,697.0 L434.6,697.0 L445.9,697.0 L445.9,695.1 L457.2,695.1 L457.2,696.6 L468.6,696.6 L468.6,695.5 L479.9,695.5 L479.9,697.7 L491.2,697.7 L491.2,695.7 L502.5,695.7 L502.5,697.2 L513.9,697.2 L513.9,695.2 L525.2,695.2 L525.2,698.5 L536.5,698.5 L536.5,695.6 L547.9,695.6 L547.9,698.1 L559.2,698.1 L559.2,696.7 L570.5,696.7 L570.5,696.8 L581.9,696.8 L581.9,698.3 L593.2,698.3 L593.2,695.6 L604.5,695.6 L604.5,697.7 L615.8,697.7 L615.8,697.7 L627.2,697.7 L627.2,698.6 L638.5,698.6 L638.5,697.7 L649.8,697.7 L649.8,697.0 L661.2,697.0 L661.2,696.0 L672.5,696.0 L672.5,697.5 L683.8,697.5 L683.8,696.2 L695.2,696.2 L695.1,698.5 L706.5,698.5 L706.5,697.3 L717.8,697.3 L717.8,697.1 L729.1,697.1 L729.1,695.0 L740.5,695.0 L740.5,695.6 L751.8,695.6 L751.8,696.3 L763.1,696.3" fill="none" stroke="#e09a5a" stroke-width="1.5" stroke-linejoin="miter"/><path d="M72.0,699.4 L72.0,698.8 L83.3,698.8 L83.3,697.0 L94.7,697.0 L94.7,695.3 L106.0,695.3 L106.0,697.7 L117.3,697.7 L117.3,696.1 L128.7,696.1 L128.7,696.6 L140.0,696.6 L140.0,698.8 L151.3,698.8 L151.3,693.9 L162.6,693.9 L162.6,694.9 L174.0,694.9 L174.0,697.9 L185.3,697.9 L185.3,695.8 L196.6,695.8 L196.6,697.4 L208.0,697.4 L208.0,697.0 L219.3,697.0 L219.3,696.2 L230.6,696.2 L230.6,697.4 L242.0,697.4 L241.9,697.2 L253.3,697.2 L253.3,696.9 L264.6,696.9 L264.6,695.6 L275.9,695.6 L275.9,697.6 L287.3,697.6 L287.3,697.9 L298.6,697.9 L298.6,695.2 L309.9,695.2 L309.9,697.3 L321.3,697.3 L321.3,694.2 L332.6,694.2 L332.6,696.1 L343.9,696.1 L343.9,695.3 L355.2,695.3 L355.2,697.2 L366.6,697.2 L366.6,694.8 L377.9,694.8 L377.9,698.4 L389.2,698.4 L389.2,698.2 L400.6,698.2 L400.6,698.4 L411.9,698.4 L411.9,695.5 L423.2,695.5 L423.2,695.4 L434.6,695.4 L434.6,698.0 L445.9,698.0 L445.9,696.9 L457.2,696.9 L457.2,694.7 L468.6,694.7 L468.6,695.9 L479.9,695.9 L479.9,698.4 L491.2,698.4 L491.2,697.8 L502.5,697.8 L502.5,698.1 L513.9,698.1 L513.9,698.3 L525.2,698.3 L525.2,696.9 L536.5,696.9 L536.5,698.5 L547.9,698.5 L547.9,694.3 L559.2,694.3 L559.2,696.8 L570.5,696.8 L570.5,696.3 L581.9,696.3 L581.9,695.7 L593.2,695.7 L593.2,695.1 L604.5,695.1 L604.5,694.8 L615.8,694.8 L615.8,697.0 L627.2,697.0 L627.2,697.2 L638.5,697.2 L638.5,696.8 L649.8,696.8 L649.8,698.8 L661.2,698.8 L661.2,696.9 L672.5,696.9 L672.5,695.4 L683.8,695.4 L683.8,694.0 L695.2,694.0 L695.1,695.0 L706.5,695.0 L706.5,695.6 L717.8,695.6 L717.8,695.9 L729.1,695.9 L729.1,698.8 L740.5,698.8 L740.5,697.2 L751.8,697.2 L751.8,697.2 L763.1,697.2 L763.1,699.4 Z" fill="#4cc6a0" fill-opacity="0.2"/><path d="M72.0,698.8 L83.3,698.8 L83.3,697.0 L94.7,697.0 L94.7,695.3 L106.0,695.3 L106.0,697.7 L117.3,697.7 L117.3,696.1 L128.7,696.1 L128.7,696.6 L140.0,696.6 L140.0,698.8 L151.3,698.8 L151.3,693.9 L162.6,693.9 L162.6,694.9 L174.0,694.9 L174.0,697.9 L185.3,697.9 L185.3,695.8 L196.6,695.8 L196.6,697.4 L208.0,697.4 L208.0,697.0 L219.3,697.0 L219.3,696.2 L230.6,696.2 L230.6,697.4 L242.0,697.4 L241.9,697.2 L253.3,697.2 L253.3,696.9 L264.6,696.9 L264.6,695.6 L275.9,695.6 L275.9,697.6 L287.3,697.6 L287.3,697.9 L298.6,697.9 L298.6,695.2 L309.9,695.2 L309.9,697.3 L321.3,697.3 L321.3,694.2 L332.6,694.2 L332.6,696.1 L343.9,696.1 L343.9,695.3 L355.2,695.3 L355.2,697.2 L366.6,697.2 L366.6,694.8 L377.9,694.8 L377.9,698.4 L389.2,698.4 L389.2,698.2 L400.6,698.2 L400.6,698.4 L411.9,698.4 L411.9,695.5 L423.2,695.5 L423.2,695.4 L434.6,695.4 L434.6,698.0 L445.9,698.0 L445.9,696.9 L457.2,696.9 L457.2,694.7 L468.6,694.7 L468.6,695.9 L479.9,695.9 L479.9,698.4 L491.2,698.4 L491.2,697.8 L502.5,697.8 L502.5,698.1 L513.9,698.1 L513.9,698.3 L525.2,698.3 L525.2,696.9 L536.5,696.9 L536.5,698.5 L547.9,698.5 L547.9,694.3 L559.2,694.3 L559.2,696.8 L570.5,696.8 L570.5,696.3 L581.9,696.3 L581.9,695.7 L593.2,695.7 L593.2,695.1 L604.5,695.1 L604.5,694.8 L615.8,694.8 L615.8,697.0 L627.2,697.0 L627.2,697.2 L638.5,697.2 L638.5,696.8 L649.8,696.8 L649.8,698.8 L661.2,698.8 L661.2,696.9 L672.5,696.9 L672.5,695.4 L683.8,695.4 L683.8,694.0 L695.2,694.0 L695.1,695.0 L706.5,695.0 L706.5,695.6 L717.8,695.6 L717.8,695.9 L729.1,695.9 L729.1,698.8 L740.5,698.8 L740.5,697.2 L751.8,697.2 L751.8,697.2 L763.1,697.2" fill="none" stroke="#4cc6a0" stroke-width="1.5" stroke-linejoin="miter"/><path d="M72.0,699.4 L72.0,697.4 L83.3,697.4 L83.3,699.1 L94.7,699.1 L94.7,698.3 L106.0,698.3 L106.0,697.9 L117.3,697.9 L117.3,697.0 L128.7,697.0 L128.7,696.9 L140.0,696.9 L140.0,697.6 L151.3,697.6 L151.3,698.9 L162.6,698.9 L162.6,697.1 L174.0,697.1 L174.0,696.7 L185.3,696.7 L185.3,697.8 L196.6,697.8 L196.6,698.3 L208.0,698.3 L208.0,697.9 L219.3,697.9 L219.3,699.0 L230.6,699.0 L230.6,697.3 L242.0,697.3 L241.9,696.4 L253.3,696.4 L253.3,697.9 L264.6,697.9 L264.6,697.3 L275.9,697.3 L275.9,696.9 L287.3,696.9 L287.3,698.8 L298.6,698.8 L298.6,696.6 L309.9,696.6 L309.9,697.5 L321.3,697.5 L321.3,698.8 L332.6,698.8 L332.6,699.2 L343.9,699.2 L343.9,698.7 L355.2,698.7 L355.2,697.7 L366.6,697.7 L366.6,697.3 L377.9,697.3 L377.9,698.4 L389.2,698.4 L389.2,696.6 L400.6,696.6 L400.6,698.3 L411.9,698.3 L411.9,698.0 L423.2,698.0 L423.2,699.0 L434.6,699.0 L434.6,696.5 L445.9,696.5 L445.9,699.0 L457.2,699.0 L457.2,696.7 L468.6,696.7 L468.6,697.8 L479.9,697.8 L479.9,697.7 L491.2,697.7 L491.2,697.7 L502.5,697.7 L502.5,698.6 L513.9,698.6 L513.9,696.7 L525.2,696.7 L525.2,696.4 L536.5,696.4 L536.5,696.9 L547.9,696.9 L547.9,697.6 L559.2,697.6 L559.2,699.0 L570.5,699.0 L570.5,696.9 L581.9,696.9 L581.9,698.5 L593.2,698.5 L593.2,696.7 L604.5,696.7 L604.5,698.7 L615.8,698.7 L615.8,697.7 L627.2,697.7 L627.2,696.9 L638.5,696.9 L638.5,698.8 L649.8,698.8 L649.8,697.8 L661.2,697.8 L661.2,699.2 L672.5,699.2 L672.5,699.3 L683.8,699.3 L683.8,698.9 L695.2,698.9 L695.1,696.4 L706.5,696.4 L706.5,696.6 L717.8,696.6 L717.8,697.4 L729.1,697.4 L729.1,698.5 L740.5,698.5 L740.5,697.4 L751.8,697.4 L751.8,697.2 L763.1,697.2 L763.1,699.4 Z" fill="#d64550" fill-opacity="0.2"/><path d="M72.0,697.4 L83.3,697.4 L83.3,699.1 L94.7,699.1 L94.7,698.3 L106.0,698.3 L106.0,697.9 L117.3,697.9 L117.3,697.0 L128.7,697.0 L128.7,696.9 L140.0,696.9 L140.0,697.6 L151.3,697.6 L151.3,698.9 L162.6,698.9 L162.6,697.1 L174.0,697.1 L174.0,696.7 L185.3,696.7 L185.3,697.8 L196.6,697.8 L196.6,698.3 L208.0,698.3 L208.0,697.9 L219.3,697.9 L219.3,699.0 L230.6,699.0 L230.6,697.3 L242.0,697.3 L241.9,696.4 L253.3,696.4 L253.3,697.9 L264.6,697.9 L264.6,697.3 L275.9,697.3 L275.9,696.9 L287.3,696.9 L287.3,698.8 L298.6,698.8 L298.6,696.6 L309.9,696.6 L309.9,697.5 L321.3,697.5 L321.3,698.8 L332.6,698.8 L332.6,699.2 L343.9,699.2 L343.9,698.7 L355.2,698.7 L355.2,697.7 L366.6,697.7 L366.6,697.3 L377.9,697.3 L377.9,698.4 L389.2,698.4 L389.2,696.6 L400.6,696.6 L400.6,698.3 L411.9,698.3 L411.9,698.0 L423.2,698.0 L423.2,699.0 L434.6,699.0 L434.6,696.5 L445.9,696.5 L445.9,699.0 L457.2,699.0 L457.2,696.7 L468.6,696.7 L468.6,697.8 L479.9,697.8 L479.9,697.7 L491.2,697.7 L491.2,697.7 L502.5,697.7 L502.5,698.6 L513.9,698.6 L513.9,696.7 L525.2,696.7 L525.2,696.4 L536.5,696.4 L536.5,696.9 L547.9,696.9 L547.9,697.6 L559.2,697.6 L559.2,699.0 L570.5,699.0 L570.5,696.9 L581.9,696.9 L581.9,698.5 L593.2,698.5 L593.2,696.7 L604.5,696.7 L604.5,698.7 L615.8,698.7 L615.8,697.7 L627.2,697.7 L627.2,696.9 L638.5,696.9 L638.5,698.8 L649.8,698.8 L649.8,697.8 L661.2,697.8 L661.2,699.2 L672.5,699.2 L672.5,699.3 L683.8,699.3 L683.8,698.9 L695.2,698.9 L695.1,696.4 L706.5,696.4 L706.5,696.6 L717.8,696.6 L717.8,697.4 L729.1,697.4 L729.1,698.5 L740.5,698.5 L740.5,697.4 L751.8,697.4 L751.8,697.2 L763.1,697.2" fill="none" stroke="#d64550" stroke-width="1.5" stroke-linejoin="miter"/><path d="M72.0,699.4 L72.0,697.9 L83.3,697.9 L83.3,697.0 L94.7,697.0 L94.7,696.2 L106.0,696.2 L106.0,699.3 L117.3,699.3 L117.3,698.6 L128.7,698.6 L128.7,697.5 L140.0,697.5 L140.0,698.8 L151.3,698.8 L151.3,697.9 L162.6,697.9 L162.6,697.1 L174.0,697.1 L174.0,698.7 L185.3,698.7 L185.3,697.3 L196.6,697.3 L196.6,698.3 L208.0,698.3 L208.0,697.1 L219.3,697.1 L219.3,698.1 L230.6,698.1 L230.6,696.8 L242.0,696.8 L241.9,699.2 L253.3,699.2 L253.3,696.7 L264.6,696.7 L264.6,698.8 L275.9,698.8 L275.9,695.6 L287.3,695.6 L287.3,697.0 L298.6,697.0 L298.6,697.5 L309.9,697.5 L309.9,697.8 L321.3,697.8 L321.3,696.9 L332.6,696.9 L332.6,696.6 L343.9,696.6 L343.9,696.4 L355.2,696.4 L355.2,696.4 L366.6,696.4 L366.6,697.5 L377.9,697.5 L377.9,695.4 L389.2,695.4 L389.2,696.0 L400.6,696.0 L400.6,696.0 L411.9,696.0 L411.9,697.8 L423.2,697.8 L423.2,697.7 L434.6,697.7 L434.6,697.1 L445.9,697.1 L445.9,695.8 L457.2,695.8 L457.2,697.3 L468.6,697.3 L468.6,697.3 L479.9,697.3 L479.9,697.7 L491.2,697.7 L491.2,695.8 L502.5,695.8 L502.5,698.1 L513.9,698.1 L513.9,699.2 L525.2,699.2 L525.2,696.5 L536.5,696.5 L536.5,695.8 L547.9,695.8 L547.9,696.5 L559.2,696.5 L559.2,697.0 L570.5,697.0 L570.5,696.4 L581.9,696.4 L581.9,698.2 L593.2,698.2 L593.2,697.0 L604.5,697.0 L604.5,699.1 L615.8,699.1 L615.8,698.9 L627.2,698.9 L627.2,697.6 L638.5,697.6 L638.5,697.4 L649.8,697.4 L649.8,697.8 L661.2,697.8 L661.2,699.2 L672.5,699.2 L672.5,696.6 L683.8,696.6 L683.8,697.3 L695.2,697.3 L695.1,698.4 L706.5,698.4 L706.5,698.2 L717.8,698.2 L717.8,697.8 L729.1,697.8 L729.1,698.5 L740.5,698.5 L740.5,699.1 L751.8,699.1 L751.8,695.8 L763.1,695.8 L763.1,699.4 Z" fill="#7b8fe0" fill-opacity="0.2"/><path d="M72.0,697.9 L83.3,697.9 L83.3,697.0 L94.7,697.0 L94.7,696.2 L106.0,696.2 L106.0,699.3 L117.3,699.3 L117.3,698.6 L128.7,698.6 L128.7,697.5 L140.0,697.5 L140.0,698.8 L151.3,698.8 L151.3,697.9 L162.6,697.9 L162.6,697.1 L174.0,697.1 L174.0,698.7 L185.3,698.7 L185.3,697.3 L196.6,697.3 L196.6,698.3 L208.0,698.3 L208.0,697.1 L219.3,697.1 L219.3,698.1 L230.6,698.1 L230.6,696.8 L242.0,696.8 L241.9,699.2 L253.3,699.2 L253.3,696.7 L264.6,696.7 L264.6,698.8 L275.9,698.8 L275.9,695.6 L287.3,695.6 L287.3,697.0 L298.6,697.0 L298.6,697.5 L309.9,697.5 L309.9,697.8 L321.3,697.8 L321.3,696.9 L332.6,696.9 L332.6,696.6 L343.9,696.6 L343.9,696.4 L355.2,696.4 L355.2,696.4 L366.6,696.4 L366.6,697.5 L377.9,697.5 L377.9,695.4 L389.2,695.4 L389.2,696.0 L400.6,696.0 L400.6,696.0 L411.9,696.0 L411.9,697.8 L423.2,697.8 L423.2,697.7 L434.6,697.7 L434.6,697.1 L445.9,697.1 L445.9,695.8 L457.2,695.8 L457.2,697.3 L468.6,697.3 L468.6,697.3 L479.9,697.3 L479.9,697.7 L491.2,697.7 L491.2,695.8 L502.5,695.8 L502.5,698.1 L513.9,698.1 L513.9,699.2 L525.2,699.2 L525.2,696.5 L536.5,696.5 L536.5,695.8 L547.9,695.8 L547.9,696.5 L559.2,696.5 L559.2,697.0 L570.5,697.0 L570.5,696.4 L581.9,696.4 L581.9,698.2 L593.2,698.2 L593.2,697.0 L604.5,697.0 L604.5,699.1 L615.8,699.1 L615.8,698.9 L627.2,698.9 L627.2,697.6 L638.5,697.6 L638.5,697.4 L649.8,697.4 L649.8,697.8 L661.2,697.8 L661.2,699.2 L672.5,699.2 L672.5,696.6 L683.8,696.6 L683.8,697.3 L695.2,697.3 L695.1,698.4 L706.5,698.4 L706.5,698.2 L717.8,698.2 L717.8,697.8 L729.1,697.8 L729.1,698.5 L740.5,698.5 L740.5,699.1 L751.8,699.1 L751.8,695.8 L763.1,695.8" fill="none" stroke="#7b8fe0" stroke-width="1.5" stroke-linejoin="miter"/><path d="M72.0,699.4 L72.0,696.5 L83.3,696.5 L83.3,697.4 L94.7,697.4 L94.7,696.8 L106.0,696.8 L106.0,698.1 L117.3,698.1 L117.3,697.0 L128.7,697.0 L128.7,698.7 L140.0,698.7 L140.0,697.2 L151.3,697.2 L151.3,697.7 L162.6,697.7 L162.6,696.7 L174.0,696.7 L174.0,699.1 L185.3,699.1 L185.3,697.0 L196.6,697.0 L196.6,699.0 L208.0,699.0 L208.0,697.8 L219.3,697.8 L219.3,696.5 L230.6,696.5 L230.6,699.4 L242.0,699.4 L241.9,698.7 L253.3,698.7 L253.3,698.5 L264.6,698.5 L264.6,698.4 L275.9,698.4 L275.9,699.2 L287.3,699.2 L287.3,696.7 L298.6,696.7 L298.6,697.0 L309.9,697.0 L309.9,698.2 L321.3,698.2 L321.3,698.3 L332.6,698.3 L332.6,697.6 L343.9,697.6 L343.9,699.3 L355.2,699.3 L355.2,699.3 L366.6,699.3 L366.6,696.7 L377.9,696.7 L377.9,698.5 L389.2,698.5 L389.2,697.9 L400.6,697.9 L400.6,696.6 L411.9,696.6 L411.9,696.5 L423.2,696.5 L423.2,698.0 L434.6,698.0 L434.6,698.8 L445.9,698.8 L445.9,698.5 L457.2,698.5 L457.2,696.6 L468.6,696.6 L468.6,696.7 L479.9,696.7 L479.9,698.8 L491.2,698.8 L491.2,696.9 L502.5,696.9 L502.5,698.3 L513.9,698.3 L513.9,698.0 L525.2,698.0 L525.2,698.9 L536.5,698.9 L536.5,696.8 L547.9,696.8 L547.9,696.4 L559.2,696.4 L559.2,698.8 L570.5,698.8 L570.5,697.5 L581.9,697.5 L581.9,698.8 L593.2,698.8 L593.2,696.8 L604.5,696.8 L604.5,699.2 L615.8,699.2 L615.8,699.1 L627.2,699.1 L627.2,697.2 L638.5,697.2 L638.5,698.5 L649.8,698.5 L649.8,696.7 L661.2,696.7 L661.2,696.8 L672.5,696.8 L672.5,697.3 L683.8,697.3 L683.8,699.0 L695.2,699.0 L695.1,697.3 L706.5,697.3 L706.5,696.6 L717.8,696.6 L717.8,698.1 L729.1,698.1 L729.1,699.2 L740.5,699.2 L740.5,698.7 L751.8,698.7 L751.8,698.5 L763.1,698.5 L763.1,699.4 Z" fill="#8dc54b" fill-opacity="0.2"/><path d="M72.0,696.5 L83.3,696.5 L83.3,697.4 L94.7,697.4 L94.7,696.8 L106.0,696.8 L106.0,698.1 L117.3,698.1 L117.3,697.0 L128.7,697.0 L128.7,698.7 L140.0,698.7 L140.0,697.2 L151.3,697.2 L151.3,697.7 L162.6,697.7 L162.6,696.7 L174.0,696.7 L174.0,699.1 L185.3,699.1 L185.3,697.0 L196.6,697.0 L196.6,699.0 L208.0,699.0 L208.0,697.8 L219.3,697.8 L219.3,696.5 L230.6,696.5 L230.6,699.4 L242.0,699.4 L241.9,698.7 L253.3,698.7 L253.3,698.5 L264.6,698.5 L264.6,698.4 L275.9,698.4 L275.9,699.2 L287.3,699.2 L287.3,696.7 L298.6,696.7 L298.6,697.0 L309.9,697.0 L309.9,698.2 L321.3,698.2 L321.3,698.3 L332.6,698.3 L332.6,697.6 L343.9,697.6 L343.9,699.3 L355.2,699.3 L355.2,699.3 L366.6,699.3 L366.6,696.7 L377.9,696.7 L377.9,698.5 L389.2,698.5 L389.2,697.9 L400.6,697.9 L400.6,696.6 L411.9,696.6 L411.9,696.5 L423.2,696.5 L423.2,698.0 L434.6,698.0 L434.6,698.8 L445.9,698.8 L445.9,698.5 L457.2,698.5 L457.2,696.6 L468.6,696.6 L468.6,696.7 L479.9,696.7 L479.9,698.8 L491.2,698.8 L491.2,696.9 L502.5,696.9 L502.5,698.3 L513.9,698.3 L513.9,698.0 L525.2,698.0 L525.2,698.9 L536.5,698.9 L536.5,696.8 L547.9,696.8 L547.9,696.4 L559.2,696.4 L559.2,698.8 L570.5,698.8 L570.5,697.5 L581.9,697.5 L581.9,698.8 L593.2,698.8 L593.2,696.8 L604.5,696.8 L604.5,699.2 L615.8,699.2 L615.8,699.1 L627.2,699.1 L627.2,697.2 L638.5,697.2 L638.5,698.5 L649.8,698.5 L649.8,696.7 L661.2,696.7 L661.2,696.8 L672.5,696.8 L672.5,697.3 L683.8,697.3 L683.8,699.0 L695.2,699.0 L695.1,697.3 L706.5,697.3 L706.5,696.6 L717.8,696.6 L717.8,698.1 L729.1,698.1 L729.1,699.2 L740.5,699.2 L740.5,698.7 L751.8,698.7 L751.8,698.5 L763.1,698.5" fill="none" stroke="#8dc54b" stroke-width="1.5" stroke-linejoin="miter"/><circle cx="796" cy="523.8" r="4.1" fill="#7b8fe0"/><g fill="none" stroke="#9aa6ba" stroke-width="1"><rect x="863.4" y="518.7" width="3.1" height="2.2" rx="0.5"/><rect x="863.4" y="522.7" width="3.1" height="2.2" rx="0.5" fill="#6b778c"/><rect x="863.4" y="526.7" width="3.1" height="2.2" rx="0.5"/></g><circle cx="796" cy="545.8" r="4.1" fill="#6dc54b"/><g fill="none" stroke="#9aa6ba" stroke-width="1"><rect x="863.4" y="540.7" width="3.1" height="2.2" rx="0.5"/><rect x="863.4" y="544.7" width="3.1" height="2.2" rx="0.5" fill="#6b778c"/><rect x="863.4" y="548.7" width="3.1" height="2.2" rx="0.5"/></g><circle cx="796" cy="567.9" r="4.1" fill="#7b8fe0"/><g fill="none" stroke="#9aa6ba" stroke-width="1"><rect x="863.4" y="562.8" width="3.1" height="2.2" rx="0.5"/><rect x="863.4" y="566.8" width="3.1" height="2.2" rx="0.5" fill="#6b778c"/><rect x="863.4" y="570.8" width="3.1" height="2.2" rx="0.5"/></g><circle cx="796" cy="589.9" r="4.1" fill="#c9b541"/><g fill="none" stroke="#9aa6ba" stroke-width="1"><rect x="863.4" y="584.8" width="3.1" height="2.2" rx="0.5"/><rect x="863.4" y="588.8" width="3.1" height="2.2" rx="0.5" fill="#6b778c"/><rect x="863.4" y="592.8" width="3.1" height="2.2" rx="0.5"/></g><circle cx="796" cy="611.9" r="4.1" fill="#e09a5a"/><g fill="none" stroke="#9aa6ba" stroke-width="1"><rect x="863.4" y="606.8" width="3.1" height="2.2" rx="0.5"/><rect x="863.4" y="610.8" width="3.1" height="2.2" rx="0.5" fill="#6b778c"/><rect x="863.4" y="614.8" width="3.1" height="2.2" rx="0.5"/></g><circle cx="796" cy="633.9" r="4.1" fill="#7b8fe0"/><g fill="none" stroke="#9aa6ba" stroke-width="1"><rect x="863.4" y="628.8" width="3.1" height="2.2" rx="0.5"/><rect x="863.4" y="632.8" width="3.1" height="2.2" rx="0.5" fill="#6b778c"/><rect x="863.4" y="636.8" width="3.1" height="2.2" rx="0.5"/></g><circle cx="796" cy="656.0" r="4.1" fill="#7b8fe0"/><g fill="none" stroke="#9aa6ba" stroke-width="1"><rect x="863.4" y="650.9" width="3.1" height="2.2" rx="0.5"/><rect x="863.4" y="654.9" width="3.1" height="2.2" rx="0.5" fill="#6b778c"/><rect x="863.4" y="658.9" width="3.1" height="2.2" rx="0.5"/></g><circle cx="796" cy="678.0" r="4.1" fill="#8dc54b"/><g fill="none" stroke="#9aa6ba" stroke-width="1"><rect x="863.4" y="672.9" width="3.1" height="2.2" rx="0.5"/><rect x="863.4" y="676.9" width="3.1" height="2.2" rx="0.5" fill="#6b778c"/><rect x="863.4" y="680.9" width="3.1" height="2.2" rx="0.5"/></g><circle cx="796" cy="700.0" r="4.1" fill="#c9b541"/><g fill="none" stroke="#9aa6ba" stroke-width="1"><rect x="863.4" y="694.9" width="3.1" height="2.2" rx="0.5"/><rect x="863.4" y="698.9" width="3.1" height="2.2" rx="0.5" fill="#6b778c"/><rect x="863.4" y="702.9" width="3.1" height="2.2" rx="0.5"/></g><circle cx="796" cy="722.1" r="4.1" fill="#6dc54b"/><g fill="none" stroke="#9aa6ba" stroke-width="1"><rect x="863.4" y="717.0" width="3.1" height="2.2" rx="0.5"/><rect x="863.4" y="721.0" width="3.1" height="2.2" rx="0.5" fill="#6b778c"/><rect x="863.4" y="725.0" width="3.1" height="2.2" rx="0.5"/></g><path d="M881,508 L884,504.5 L887,508 Z" fill="#3d4b66"/><rect x="881" y="513" width="6" height="43" rx="3" fill="#3d4b66"/><path d="M881,726 L884,729.5 L887,726 Z" fill="#3d4b66"/></svg>
<div class="t" style="right:1824.0px;top:508.8px;font-size:10.75px;color:#a2aec2;font-weight:400">200,000</div>
<div class="t" style="right:1824.0px;top:534.1px;font-size:10.75px;color:#a2aec2;font-weight:400">150,000</div>
<div class="t" style="right:1824.0px;top:563.2px;font-size:10.75px;color:#a2aec2;font-weight:400">100,000</div>
<div class="t" style="right:1824.0px;top:601.4px;font-size:10.75px;color:#a2aec2;font-weight:400">50,000</div>
<div class="t" style="right:1824.0px;top:692.5px;font-size:10.75px;color:#a2aec2;font-weight:400">0</div>
<div class="t" style="left:164.5px;top:701.4px;font-size:10.75px;color:#a2aec2;font-weight:400">5th</div>
<div class="t" style="left:323.5px;top:701.4px;font-size:10.75px;color:#a2aec2;font-weight:400">12th</div>
<div class="t" style="left:481.7px;top:701.4px;font-size:10.75px;color:#a2aec2;font-weight:400">19th</div>
<div class="t" style="left:640.7px;top:701.4px;font-size:10.75px;color:#a2aec2;font-weight:400">26th</div>
<div class="t" style="left:74.0px;top:711.7px;font-size:10.75px;color:#a2aec2;font-weight:400">January 2026</div>
<div class="t" style="left:807.8px;top:516.7px;font-size:12.6px;color:#cfd6e2;font-weight:400">5060</div>
<div class="t" style="left:807.8px;top:538.7px;font-size:12.6px;color:#cfd6e2;font-weight:400">445</div>
<div class="t" style="left:807.8px;top:560.8px;font-size:12.6px;color:#cfd6e2;font-weight:400">5902</div>
<div class="t" style="left:807.8px;top:582.8px;font-size:12.6px;color:#cfd6e2;font-weight:400">22</div>
<div class="t" style="left:807.8px;top:604.8px;font-size:12.6px;color:#cfd6e2;font-weight:400">5900</div>
<div class="t" style="left:807.8px;top:626.9px;font-size:12.6px;color:#cfd6e2;font-weight:400">5903</div>
<div class="t" style="left:807.8px;top:648.9px;font-size:12.6px;color:#cfd6e2;font-weight:400">25</div>
<div class="t" style="left:807.8px;top:670.9px;font-size:12.6px;color:#cfd6e2;font-weight:400">80</div>
<div class="t" style="left:807.8px;top:692.9px;font-size:12.6px;color:#cfd6e2;font-weight:400">1433</div>
<div class="t" style="left:807.8px;top:715.0px;font-size:12.6px;color:#cfd6e2;font-weight:400">23</div>
<svg width="1886" height="733"><g stroke="#1f2b3e" stroke-width="1" fill="none"><line x1="981.5" y1="514" x2="981.5" y2="722"/><line x1="981" y1="699.5" x2="1702.5" y2="699.5"/><line x1="1702" y1="699" x2="1702" y2="720"/><line x1="1073.6" y1="700" x2="1073.6" y2="712"/><line x1="1237.2" y1="700" x2="1237.2" y2="712"/><line x1="1400.3" y1="700" x2="1400.3" y2="712"/><line x1="1564" y1="700" x2="1564" y2="712"/></g><path d="M981.0,699 L981.0,661.3 L993.1,652.4 L1004.6,661.3 L1016.1,653.4 L1028.1,657.6 L1039.6,657.6 L1051.6,656.0 L1063.1,653.4 L1075.1,620.5 L1086.6,632.5 L1098.7,656.0 L1110.2,631.0 L1122.2,632.5 L1133.7,657.6 L1144.7,613.2 L1156.2,616.8 L1167.7,640.4 L1179.7,656.0 L1190.2,629.9 L1201.7,657.6 L1213.7,656.0 L1225.2,632.5 L1237.2,612.7 L1248.7,615.8 L1260.7,640.4 L1272.2,658.7 L1284.3,652.4 L1295.8,656.0 L1307.8,645.6 L1319.3,641.9 L1331.3,626.2 L1342.8,656.0 L1354.8,654.5 L1366.3,653.4 L1378.4,656.0 L1389.9,659.7 L1401.9,656.0 L1412.3,648.2 L1423.8,649.3 L1435.9,649.3 L1447.4,657.6 L1459.4,654.5 L1470.9,652.4 L1482.9,644.0 L1493.4,572.4 L1505.4,640.4 L1516.9,637.7 L1528.4,628.9 L1540.4,653.4 L1551.9,654.5 L1563.9,652.4 L1575.4,650.8 L1587.5,652.4 L1599.0,654.5 L1610.0,656.0 L1621.5,644.0 L1633.0,640.4 L1645.0,650.8 L1656.5,656.0 L1668.5,645.6 L1680.0,635.1 L1692.0,646.6 L1692.0,699 Z" fill="#e3a25e" fill-opacity="0.3"/><path d="M981.0,661.3 L993.1,652.4 L1004.6,661.3 L1016.1,653.4 L1028.1,657.6 L1039.6,657.6 L1051.6,656.0 L1063.1,653.4 L1075.1,620.5 L1086.6,632.5 L1098.7,656.0 L1110.2,631.0 L1122.2,632.5 L1133.7,657.6 L1144.7,613.2 L1156.2,616.8 L1167.7,640.4 L1179.7,656.0 L1190.2,629.9 L1201.7,657.6 L1213.7,656.0 L1225.2,632.5 L1237.2,612.7 L1248.7,615.8 L1260.7,640.4 L1272.2,658.7 L1284.3,652.4 L1295.8,656.0 L1307.8,645.6 L1319.3,641.9 L1331.3,626.2 L1342.8,656.0 L1354.8,654.5 L1366.3,653.4 L1378.4,656.0 L1389.9,659.7 L1401.9,656.0 L1412.3,648.2 L1423.8,649.3 L1435.9,649.3 L1447.4,657.6 L1459.4,654.5 L1470.9,652.4 L1482.9,644.0 L1493.4,572.4 L1505.4,640.4 L1516.9,637.7 L1528.4,628.9 L1540.4,653.4 L1551.9,654.5 L1563.9,652.4 L1575.4,650.8 L1587.5,652.4 L1599.0,654.5 L1610.0,656.0 L1621.5,644.0 L1633.0,640.4 L1645.0,650.8 L1656.5,656.0 L1668.5,645.6 L1680.0,635.1 L1692.0,646.6" fill="none" stroke="#e3a25e" stroke-width="1.5" stroke-linejoin="round"/><path d="M981.0,699 L981.0,666.5 L992.7,670.4 L1004.4,677.1 L1016.1,648.2 L1027.7,682.9 L1039.4,682.3 L1051.1,680.1 L1062.8,667.7 L1074.5,650.8 L1086.2,670.9 L1097.9,668.1 L1109.5,667.9 L1121.2,677.5 L1132.9,677.3 L1144.6,674.6 L1156.3,670.6 L1168.0,681.3 L1179.7,671.0 L1191.3,669.1 L1203.0,632.5 L1214.7,666.5 L1226.4,667.9 L1238.1,656.0 L1249.8,677.5 L1261.5,629.9 L1273.2,668.3 L1284.8,677.6 L1296.5,668.2 L1308.2,669.1 L1319.9,678.0 L1331.6,677.9 L1343.3,680.2 L1355.0,661.3 L1366.6,680.6 L1378.3,658.7 L1390.0,667.1 L1401.7,632.5 L1413.4,613.2 L1425.1,656.0 L1436.8,674.5 L1448.4,676.5 L1460.1,679.2 L1471.8,673.5 L1483.5,658.7 L1495.2,675.7 L1506.9,676.3 L1518.6,649.3 L1530.2,668.3 L1541.9,653.4 L1553.6,650.8 L1565.3,647.2 L1577.0,680.9 L1588.7,628.9 L1600.4,645.6 L1612.0,672.9 L1623.7,670.4 L1635.4,681.3 L1647.1,676.0 L1658.8,680.6 L1670.5,669.5 L1682.2,678.3 L1693.8,675.7 L1693.8,699 Z" fill="#7a90e0" fill-opacity="0.3"/><path d="M981.0,666.5 L992.7,670.4 L1004.4,677.1 L1016.1,648.2 L1027.7,682.9 L1039.4,682.3 L1051.1,680.1 L1062.8,667.7 L1074.5,650.8 L1086.2,670.9 L1097.9,668.1 L1109.5,667.9 L1121.2,677.5 L1132.9,677.3 L1144.6,674.6 L1156.3,670.6 L1168.0,681.3 L1179.7,671.0 L1191.3,669.1 L1203.0,632.5 L1214.7,666.5 L1226.4,667.9 L1238.1,656.0 L1249.8,677.5 L1261.5,629.9 L1273.2,668.3 L1284.8,677.6 L1296.5,668.2 L1308.2,669.1 L1319.9,678.0 L1331.6,677.9 L1343.3,680.2 L1355.0,661.3 L1366.6,680.6 L1378.3,658.7 L1390.0,667.1 L1401.7,632.5 L1413.4,613.2 L1425.1,656.0 L1436.8,674.5 L1448.4,676.5 L1460.1,679.2 L1471.8,673.5 L1483.5,658.7 L1495.2,675.7 L1506.9,676.3 L1518.6,649.3 L1530.2,668.3 L1541.9,653.4 L1553.6,650.8 L1565.3,647.2 L1577.0,680.9 L1588.7,628.9 L1600.4,645.6 L1612.0,672.9 L1623.7,670.4 L1635.4,681.3 L1647.1,676.0 L1658.8,680.6 L1670.5,669.5 L1682.2,678.3 L1693.8,675.7" fill="none" stroke="#7a90e0" stroke-width="1.5" stroke-linejoin="round"/><path d="M981.0,699 L981.0,684.0 L992.7,685.5 L1004.4,658.7 L1016.1,689.5 L1027.7,689.1 L1039.4,686.7 L1051.1,689.2 L1062.8,691.1 L1074.5,690.0 L1086.2,650.8 L1097.9,690.2 L1109.5,684.1 L1121.2,684.4 L1132.9,666.5 L1144.6,689.0 L1156.3,690.6 L1168.0,661.3 L1179.7,691.3 L1191.3,686.2 L1203.0,685.3 L1214.7,690.4 L1226.4,686.1 L1238.1,686.3 L1249.8,687.1 L1261.5,687.4 L1273.2,686.4 L1284.8,690.4 L1296.5,687.0 L1308.2,691.2 L1319.9,689.1 L1331.6,686.3 L1343.3,687.1 L1355.0,691.1 L1366.6,684.5 L1378.3,687.5 L1390.0,688.2 L1401.7,693.9 L1413.4,688.5 L1425.1,691.5 L1436.8,687.3 L1448.4,689.4 L1460.1,685.8 L1471.8,687.5 L1483.5,686.0 L1495.2,690.5 L1506.9,650.8 L1518.6,686.6 L1530.2,685.7 L1541.9,690.5 L1553.6,685.6 L1565.3,685.3 L1577.0,687.1 L1588.7,684.2 L1600.4,684.4 L1612.0,688.8 L1623.7,688.7 L1635.4,666.5 L1647.1,685.6 L1658.8,684.6 L1670.5,689.2 L1682.2,687.1 L1693.8,666.5 L1693.8,699 Z" fill="#7a90e0" fill-opacity="0.25"/><path d="M981.0,684.0 L992.7,685.5 L1004.4,658.7 L1016.1,689.5 L1027.7,689.1 L1039.4,686.7 L1051.1,689.2 L1062.8,691.1 L1074.5,690.0 L1086.2,650.8 L1097.9,690.2 L1109.5,684.1 L1121.2,684.4 L1132.9,666.5 L1144.6,689.0 L1156.3,690.6 L1168.0,661.3 L1179.7,691.3 L1191.3,686.2 L1203.0,685.3 L1214.7,690.4 L1226.4,686.1 L1238.1,686.3 L1249.8,687.1 L1261.5,687.4 L1273.2,686.4 L1284.8,690.4 L1296.5,687.0 L1308.2,691.2 L1319.9,689.1 L1331.6,686.3 L1343.3,687.1 L1355.0,691.1 L1366.6,684.5 L1378.3,687.5 L1390.0,688.2 L1401.7,693.9 L1413.4,688.5 L1425.1,691.5 L1436.8,687.3 L1448.4,689.4 L1460.1,685.8 L1471.8,687.5 L1483.5,686.0 L1495.2,690.5 L1506.9,650.8 L1518.6,686.6 L1530.2,685.7 L1541.9,690.5 L1553.6,685.6 L1565.3,685.3 L1577.0,687.1 L1588.7,684.2 L1600.4,684.4 L1612.0,688.8 L1623.7,688.7 L1635.4,666.5 L1647.1,685.6 L1658.8,684.6 L1670.5,689.2 L1682.2,687.1 L1693.8,666.5" fill="none" stroke="#7a90e0" stroke-width="1.5" stroke-linejoin="round"/><path d="M981.0,699 L981.0,689.8 L992.7,688.6 L1004.4,688.0 L1016.1,686.6 L1027.7,688.6 L1039.4,686.8 L1051.1,658.7 L1062.8,657.6 L1074.5,657.6 L1086.2,658.7 L1097.9,687.0 L1109.5,694.9 L1121.2,657.6 L1132.9,657.6 L1144.6,657.6 L1156.3,658.7 L1168.0,669.1 L1179.7,693.8 L1191.3,693.2 L1203.0,686.8 L1214.7,688.3 L1226.4,694.4 L1238.1,688.0 L1249.8,694.6 L1261.5,669.1 L1273.2,581.3 L1284.8,530.6 L1296.5,663.9 L1308.2,693.9 L1319.9,693.8 L1331.6,686.2 L1343.3,687.3 L1355.0,693.1 L1366.6,686.4 L1378.3,690.6 L1390.0,689.2 L1401.7,694.0 L1413.4,686.6 L1425.1,689.1 L1436.8,686.3 L1448.4,687.1 L1460.1,693.0 L1471.8,669.1 L1483.5,579.2 L1495.2,671.7 L1506.9,695.3 L1518.6,693.0 L1530.2,690.0 L1541.9,696.0 L1553.6,689.2 L1565.3,692.6 L1577.0,692.9 L1588.7,687.8 L1600.4,691.2 L1612.0,692.8 L1623.7,691.2 L1635.4,689.0 L1647.1,695.4 L1658.8,686.2 L1670.5,695.8 L1682.2,688.5 L1693.8,687.6 L1693.8,699 Z" fill="#7dc14b" fill-opacity="0.3"/><path d="M981.0,689.8 L992.7,688.6 L1004.4,688.0 L1016.1,686.6 L1027.7,688.6 L1039.4,686.8 L1051.1,658.7 L1062.8,657.6 L1074.5,657.6 L1086.2,658.7 L1097.9,687.0 L1109.5,694.9 L1121.2,657.6 L1132.9,657.6 L1144.6,657.6 L1156.3,658.7 L1168.0,669.1 L1179.7,693.8 L1191.3,693.2 L1203.0,686.8 L1214.7,688.3 L1226.4,694.4 L1238.1,688.0 L1249.8,694.6 L1261.5,669.1 L1273.2,581.3 L1284.8,530.6 L1296.5,663.9 L1308.2,693.9 L1319.9,693.8 L1331.6,686.2 L1343.3,687.3 L1355.0,693.1 L1366.6,686.4 L1378.3,690.6 L1390.0,689.2 L1401.7,694.0 L1413.4,686.6 L1425.1,689.1 L1436.8,686.3 L1448.4,687.1 L1460.1,693.0 L1471.8,669.1 L1483.5,579.2 L1495.2,671.7 L1506.9,695.3 L1518.6,693.0 L1530.2,690.0 L1541.9,696.0 L1553.6,689.2 L1565.3,692.6 L1577.0,692.9 L1588.7,687.8 L1600.4,691.2 L1612.0,692.8 L1623.7,691.2 L1635.4,689.0 L1647.1,695.4 L1658.8,686.2 L1670.5,695.8 L1682.2,688.5 L1693.8,687.6" fill="none" stroke="#7dc14b" stroke-width="1.5" stroke-linejoin="round"/><path d="M981.0,699 L981.0,684.9 L992.7,694.9 L1004.4,684.0 L1016.1,687.5 L1027.7,658.7 L1039.4,628.3 L1051.1,669.1 L1062.8,684.1 L1074.5,686.5 L1086.2,685.0 L1097.9,697.5 L1109.5,695.1 L1121.2,690.1 L1132.9,686.3 L1144.6,694.1 L1156.3,685.7 L1168.0,686.6 L1179.7,697.2 L1191.3,689.5 L1203.0,693.9 L1214.7,697.0 L1226.4,695.6 L1238.1,692.3 L1249.8,694.7 L1261.5,694.5 L1273.2,697.4 L1284.8,689.6 L1296.5,691.2 L1308.2,687.0 L1319.9,674.3 L1331.6,673.3 L1343.3,674.3 L1355.0,674.3 L1366.6,674.3 L1378.3,674.3 L1390.0,690.6 L1401.7,695.9 L1413.4,683.0 L1425.1,691.3 L1436.8,697.4 L1448.4,687.0 L1460.1,696.3 L1471.8,688.2 L1483.5,691.9 L1495.2,687.5 L1506.9,680.8 L1518.6,683.3 L1530.2,690.5 L1541.9,683.4 L1553.6,686.4 L1565.3,691.4 L1577.0,695.4 L1588.7,637.7 L1600.4,643.0 L1612.0,669.1 L1623.7,643.0 L1635.4,640.4 L1647.1,674.3 L1658.8,681.9 L1670.5,698.0 L1682.2,696.1 L1693.8,687.8 L1693.8,699 Z" fill="#d64550" fill-opacity="0.3"/><path d="M981.0,684.9 L992.7,694.9 L1004.4,684.0 L1016.1,687.5 L1027.7,658.7 L1039.4,628.3 L1051.1,669.1 L1062.8,684.1 L1074.5,686.5 L1086.2,685.0 L1097.9,697.5 L1109.5,695.1 L1121.2,690.1 L1132.9,686.3 L1144.6,694.1 L1156.3,685.7 L1168.0,686.6 L1179.7,697.2 L1191.3,689.5 L1203.0,693.9 L1214.7,697.0 L1226.4,695.6 L1238.1,692.3 L1249.8,694.7 L1261.5,694.5 L1273.2,697.4 L1284.8,689.6 L1296.5,691.2 L1308.2,687.0 L1319.9,674.3 L1331.6,673.3 L1343.3,674.3 L1355.0,674.3 L1366.6,674.3 L1378.3,674.3 L1390.0,690.6 L1401.7,695.9 L1413.4,683.0 L1425.1,691.3 L1436.8,697.4 L1448.4,687.0 L1460.1,696.3 L1471.8,688.2 L1483.5,691.9 L1495.2,687.5 L1506.9,680.8 L1518.6,683.3 L1530.2,690.5 L1541.9,683.4 L1553.6,686.4 L1565.3,691.4 L1577.0,695.4 L1588.7,637.7 L1600.4,643.0 L1612.0,669.1 L1623.7,643.0 L1635.4,640.4 L1647.1,674.3 L1658.8,681.9 L1670.5,698.0 L1682.2,696.1 L1693.8,687.8" fill="none" stroke="#d64550" stroke-width="1.5" stroke-linejoin="round"/><path d="M981.0,699 L981.0,685.4 L992.7,692.0 L1004.4,669.1 L1016.1,681.5 L1027.7,688.7 L1039.4,688.0 L1051.1,690.8 L1062.8,689.9 L1074.5,680.4 L1086.2,688.7 L1097.9,680.5 L1109.5,681.2 L1121.2,685.7 L1132.9,690.4 L1144.6,680.3 L1156.3,687.1 L1168.0,688.2 L1179.7,689.5 L1191.3,680.2 L1203.0,687.1 L1214.7,690.0 L1226.4,687.3 L1238.1,692.3 L1249.8,685.3 L1261.5,687.8 L1273.2,689.9 L1284.8,669.1 L1296.5,682.4 L1308.2,693.8 L1319.9,686.5 L1331.6,690.2 L1343.3,680.9 L1355.0,683.1 L1366.6,690.6 L1378.3,690.3 L1390.0,691.8 L1401.7,680.2 L1413.4,689.9 L1425.1,685.5 L1436.8,687.4 L1448.4,685.0 L1460.1,685.5 L1471.8,663.9 L1483.5,692.3 L1495.2,683.4 L1506.9,632.5 L1518.6,626.2 L1530.2,669.1 L1541.9,689.8 L1553.6,686.6 L1565.3,687.5 L1577.0,688.9 L1588.7,683.6 L1600.4,685.7 L1612.0,693.5 L1623.7,690.5 L1635.4,687.6 L1647.1,681.2 L1658.8,681.6 L1670.5,686.4 L1682.2,693.8 L1693.8,683.1 L1693.8,699 Z" fill="#4cc67a" fill-opacity="0.3"/><path d="M981.0,685.4 L992.7,692.0 L1004.4,669.1 L1016.1,681.5 L1027.7,688.7 L1039.4,688.0 L1051.1,690.8 L1062.8,689.9 L1074.5,680.4 L1086.2,688.7 L1097.9,680.5 L1109.5,681.2 L1121.2,685.7 L1132.9,690.4 L1144.6,680.3 L1156.3,687.1 L1168.0,688.2 L1179.7,689.5 L1191.3,680.2 L1203.0,687.1 L1214.7,690.0 L1226.4,687.3 L1238.1,692.3 L1249.8,685.3 L1261.5,687.8 L1273.2,689.9 L1284.8,669.1 L1296.5,682.4 L1308.2,693.8 L1319.9,686.5 L1331.6,690.2 L1343.3,680.9 L1355.0,683.1 L1366.6,690.6 L1378.3,690.3 L1390.0,691.8 L1401.7,680.2 L1413.4,689.9 L1425.1,685.5 L1436.8,687.4 L1448.4,685.0 L1460.1,685.5 L1471.8,663.9 L1483.5,692.3 L1495.2,683.4 L1506.9,632.5 L1518.6,626.2 L1530.2,669.1 L1541.9,689.8 L1553.6,686.6 L1565.3,687.5 L1577.0,688.9 L1588.7,683.6 L1600.4,685.7 L1612.0,693.5 L1623.7,690.5 L1635.4,687.6 L1647.1,681.2 L1658.8,681.6 L1670.5,686.4 L1682.2,693.8 L1693.8,683.1" fill="none" stroke="#4cc67a" stroke-width="1.5" stroke-linejoin="round"/><path d="M981.0,699 L981.0,691.0 L992.7,688.9 L1004.4,687.1 L1016.1,688.1 L1027.7,690.3 L1039.4,684.2 L1051.1,691.6 L1062.8,691.5 L1074.5,685.1 L1086.2,694.2 L1097.9,674.3 L1109.5,671.7 L1121.2,696.1 L1132.9,685.3 L1144.6,687.3 L1156.3,690.9 L1168.0,674.3 L1179.7,686.1 L1191.3,684.3 L1203.0,695.0 L1214.7,690.3 L1226.4,689.3 L1238.1,690.0 L1249.8,692.4 L1261.5,694.9 L1273.2,688.8 L1284.8,685.6 L1296.5,696.0 L1308.2,693.8 L1319.9,685.5 L1331.6,685.9 L1343.3,687.7 L1355.0,696.6 L1366.6,686.9 L1378.3,683.3 L1390.0,683.0 L1401.7,687.2 L1413.4,696.3 L1425.1,685.2 L1436.8,693.9 L1448.4,688.0 L1460.1,683.7 L1471.8,687.0 L1483.5,695.1 L1495.2,692.9 L1506.9,684.1 L1518.6,694.9 L1530.2,688.5 L1541.9,691.2 L1553.6,694.7 L1565.3,688.3 L1577.0,696.4 L1588.7,695.5 L1600.4,691.7 L1612.0,696.0 L1623.7,696.2 L1635.4,688.9 L1647.1,686.6 L1658.8,684.7 L1670.5,695.1 L1682.2,691.0 L1693.8,692.6 L1693.8,699 Z" fill="#8dc54b" fill-opacity="0.25"/><path d="M981.0,691.0 L992.7,688.9 L1004.4,687.1 L1016.1,688.1 L1027.7,690.3 L1039.4,684.2 L1051.1,691.6 L1062.8,691.5 L1074.5,685.1 L1086.2,694.2 L1097.9,674.3 L1109.5,671.7 L1121.2,696.1 L1132.9,685.3 L1144.6,687.3 L1156.3,690.9 L1168.0,674.3 L1179.7,686.1 L1191.3,684.3 L1203.0,695.0 L1214.7,690.3 L1226.4,689.3 L1238.1,690.0 L1249.8,692.4 L1261.5,694.9 L1273.2,688.8 L1284.8,685.6 L1296.5,696.0 L1308.2,693.8 L1319.9,685.5 L1331.6,685.9 L1343.3,687.7 L1355.0,696.6 L1366.6,686.9 L1378.3,683.3 L1390.0,683.0 L1401.7,687.2 L1413.4,696.3 L1425.1,685.2 L1436.8,693.9 L1448.4,688.0 L1460.1,683.7 L1471.8,687.0 L1483.5,695.1 L1495.2,692.9 L1506.9,684.1 L1518.6,694.9 L1530.2,688.5 L1541.9,691.2 L1553.6,694.7 L1565.3,688.3 L1577.0,696.4 L1588.7,695.5 L1600.4,691.7 L1612.0,696.0 L1623.7,696.2 L1635.4,688.9 L1647.1,686.6 L1658.8,684.7 L1670.5,695.1 L1682.2,691.0 L1693.8,692.6" fill="none" stroke="#8dc54b" stroke-width="1.5" stroke-linejoin="round"/><path d="M981.0,699 L981.0,692.2 L992.7,693.1 L1004.4,689.5 L1016.1,694.0 L1027.7,696.6 L1039.4,691.4 L1051.1,695.8 L1062.8,691.9 L1074.5,693.0 L1086.2,689.7 L1097.9,692.6 L1109.5,692.0 L1121.2,694.9 L1132.9,692.6 L1144.6,695.0 L1156.3,691.0 L1168.0,692.9 L1179.7,695.9 L1191.3,695.1 L1203.0,694.0 L1214.7,691.1 L1226.4,695.6 L1238.1,691.3 L1249.8,691.8 L1261.5,696.3 L1273.2,691.7 L1284.8,696.3 L1296.5,696.0 L1308.2,692.2 L1319.9,695.1 L1331.6,690.0 L1343.3,693.2 L1355.0,694.4 L1366.6,690.6 L1378.3,696.8 L1390.0,691.2 L1401.7,696.6 L1413.4,695.8 L1425.1,689.4 L1436.8,691.6 L1448.4,695.2 L1460.1,696.1 L1471.8,689.2 L1483.5,691.7 L1495.2,690.4 L1506.9,695.9 L1518.6,692.0 L1530.2,694.2 L1541.9,695.1 L1553.6,694.3 L1565.3,692.1 L1577.0,694.2 L1588.7,693.9 L1600.4,695.9 L1612.0,690.4 L1623.7,691.8 L1635.4,666.5 L1647.1,693.5 L1658.8,690.2 L1670.5,692.9 L1682.2,692.3 L1693.8,692.4 L1693.8,699 Z" fill="#7a90e0" fill-opacity="0.25"/><path d="M981.0,692.2 L992.7,693.1 L1004.4,689.5 L1016.1,694.0 L1027.7,696.6 L1039.4,691.4 L1051.1,695.8 L1062.8,691.9 L1074.5,693.0 L1086.2,689.7 L1097.9,692.6 L1109.5,692.0 L1121.2,694.9 L1132.9,692.6 L1144.6,695.0 L1156.3,691.0 L1168.0,692.9 L1179.7,695.9 L1191.3,695.1 L1203.0,694.0 L1214.7,691.1 L1226.4,695.6 L1238.1,691.3 L1249.8,691.8 L1261.5,696.3 L1273.2,691.7 L1284.8,696.3 L1296.5,696.0 L1308.2,692.2 L1319.9,695.1 L1331.6,690.0 L1343.3,693.2 L1355.0,694.4 L1366.6,690.6 L1378.3,696.8 L1390.0,691.2 L1401.7,696.6 L1413.4,695.8 L1425.1,689.4 L1436.8,691.6 L1448.4,695.2 L1460.1,696.1 L1471.8,689.2 L1483.5,691.7 L1495.2,690.4 L1506.9,695.9 L1518.6,692.0 L1530.2,694.2 L1541.9,695.1 L1553.6,694.3 L1565.3,692.1 L1577.0,694.2 L1588.7,693.9 L1600.4,695.9 L1612.0,690.4 L1623.7,691.8 L1635.4,666.5 L1647.1,693.5 L1658.8,690.2 L1670.5,692.9 L1682.2,692.3 L1693.8,692.4" fill="none" stroke="#7a90e0" stroke-width="1.5" stroke-linejoin="round"/><path d="M981.0,699 L981.0,681.1 L992.7,685.3 L1004.4,688.8 L1016.1,689.6 L1027.7,687.6 L1039.4,689.5 L1051.1,679.3 L1062.8,684.2 L1074.5,680.9 L1086.2,690.0 L1097.9,684.4 L1109.5,679.3 L1121.2,682.6 L1132.9,684.9 L1144.6,684.4 L1156.3,688.8 L1168.0,688.1 L1179.7,688.1 L1191.3,685.5 L1203.0,685.4 L1214.7,679.4 L1226.4,688.2 L1238.1,687.0 L1249.8,686.7 L1261.5,688.1 L1273.2,686.6 L1284.8,687.2 L1296.5,684.2 L1308.2,689.6 L1319.9,678.9 L1331.6,685.6 L1343.3,678.7 L1355.0,681.7 L1366.6,681.9 L1378.3,684.3 L1390.0,678.7 L1401.7,688.6 L1413.4,682.0 L1425.1,686.5 L1436.8,681.9 L1448.4,681.2 L1460.1,688.0 L1471.8,687.6 L1483.5,689.7 L1495.2,687.2 L1506.9,689.1 L1518.6,685.2 L1530.2,678.3 L1541.9,685.6 L1553.6,686.3 L1565.3,684.4 L1577.0,661.3 L1588.7,663.9 L1600.4,681.4 L1612.0,688.0 L1623.7,687.1 L1635.4,681.9 L1647.1,678.7 L1658.8,682.2 L1670.5,684.8 L1682.2,678.3 L1693.8,689.9 L1693.8,699 Z" fill="#2fb8c8" fill-opacity="0.25"/><path d="M981.0,681.1 L992.7,685.3 L1004.4,688.8 L1016.1,689.6 L1027.7,687.6 L1039.4,689.5 L1051.1,679.3 L1062.8,684.2 L1074.5,680.9 L1086.2,690.0 L1097.9,684.4 L1109.5,679.3 L1121.2,682.6 L1132.9,684.9 L1144.6,684.4 L1156.3,688.8 L1168.0,688.1 L1179.7,688.1 L1191.3,685.5 L1203.0,685.4 L1214.7,679.4 L1226.4,688.2 L1238.1,687.0 L1249.8,686.7 L1261.5,688.1 L1273.2,686.6 L1284.8,687.2 L1296.5,684.2 L1308.2,689.6 L1319.9,678.9 L1331.6,685.6 L1343.3,678.7 L1355.0,681.7 L1366.6,681.9 L1378.3,684.3 L1390.0,678.7 L1401.7,688.6 L1413.4,682.0 L1425.1,686.5 L1436.8,681.9 L1448.4,681.2 L1460.1,688.0 L1471.8,687.6 L1483.5,689.7 L1495.2,687.2 L1506.9,689.1 L1518.6,685.2 L1530.2,678.3 L1541.9,685.6 L1553.6,686.3 L1565.3,684.4 L1577.0,661.3 L1588.7,663.9 L1600.4,681.4 L1612.0,688.0 L1623.7,687.1 L1635.4,681.9 L1647.1,678.7 L1658.8,682.2 L1670.5,684.8 L1682.2,678.3 L1693.8,689.9" fill="none" stroke="#2fb8c8" stroke-width="1.5" stroke-linejoin="round"/><path d="M981.0,699 L981.0,696.0 L992.7,684.5 L1004.4,690.4 L1016.1,696.3 L1027.7,688.2 L1039.4,681.2 L1051.1,688.7 L1062.8,691.4 L1074.5,695.5 L1086.2,695.9 L1097.9,682.6 L1109.5,689.1 L1121.2,682.0 L1132.9,696.1 L1144.6,693.1 L1156.3,696.2 L1168.0,690.6 L1179.7,696.0 L1191.3,692.9 L1203.0,690.5 L1214.7,692.1 L1226.4,696.2 L1238.1,696.4 L1249.8,681.5 L1261.5,694.1 L1273.2,674.3 L1284.8,674.3 L1296.5,688.5 L1308.2,695.7 L1319.9,692.0 L1331.6,695.3 L1343.3,688.3 L1355.0,682.3 L1366.6,687.4 L1378.3,683.3 L1390.0,693.6 L1401.7,696.7 L1413.4,688.4 L1425.1,689.2 L1436.8,687.9 L1448.4,691.0 L1460.1,658.7 L1471.8,685.4 L1483.5,682.4 L1495.2,692.1 L1506.9,689.8 L1518.6,683.8 L1530.2,693.4 L1541.9,679.6 L1553.6,692.0 L1565.3,695.6 L1577.0,684.6 L1588.7,683.9 L1600.4,692.0 L1612.0,694.9 L1623.7,695.7 L1635.4,693.1 L1647.1,695.7 L1658.8,690.1 L1670.5,687.8 L1682.2,693.1 L1693.8,696.0 L1693.8,699 Z" fill="#d6b845" fill-opacity="0.25"/><path d="M981.0,696.0 L992.7,684.5 L1004.4,690.4 L1016.1,696.3 L1027.7,688.2 L1039.4,681.2 L1051.1,688.7 L1062.8,691.4 L1074.5,695.5 L1086.2,695.9 L1097.9,682.6 L1109.5,689.1 L1121.2,682.0 L1132.9,696.1 L1144.6,693.1 L1156.3,696.2 L1168.0,690.6 L1179.7,696.0 L1191.3,692.9 L1203.0,690.5 L1214.7,692.1 L1226.4,696.2 L1238.1,696.4 L1249.8,681.5 L1261.5,694.1 L1273.2,674.3 L1284.8,674.3 L1296.5,688.5 L1308.2,695.7 L1319.9,692.0 L1331.6,695.3 L1343.3,688.3 L1355.0,682.3 L1366.6,687.4 L1378.3,683.3 L1390.0,693.6 L1401.7,696.7 L1413.4,688.4 L1425.1,689.2 L1436.8,687.9 L1448.4,691.0 L1460.1,658.7 L1471.8,685.4 L1483.5,682.4 L1495.2,692.1 L1506.9,689.8 L1518.6,683.8 L1530.2,693.4 L1541.9,679.6 L1553.6,692.0 L1565.3,695.6 L1577.0,684.6 L1588.7,683.9 L1600.4,692.0 L1612.0,694.9 L1623.7,695.7 L1635.4,693.1 L1647.1,695.7 L1658.8,690.1 L1670.5,687.8 L1682.2,693.1 L1693.8,696.0" fill="none" stroke="#d6b845" stroke-width="1.5" stroke-linejoin="round"/><path d="M981.0,699 L981.0,692.8 L992.7,696.7 L1004.4,695.8 L1016.1,695.3 L1027.7,694.8 L1039.4,696.4 L1051.1,694.5 L1062.8,695.1 L1074.5,692.5 L1086.2,693.7 L1097.9,691.6 L1109.5,693.1 L1121.2,692.4 L1132.9,693.6 L1144.6,694.3 L1156.3,692.1 L1168.0,693.1 L1179.7,691.3 L1191.3,692.6 L1203.0,692.8 L1214.7,695.4 L1226.4,692.1 L1238.1,694.7 L1249.8,696.2 L1261.5,696.6 L1273.2,696.0 L1284.8,695.4 L1296.5,692.9 L1308.2,695.3 L1319.9,696.6 L1331.6,692.4 L1343.3,693.7 L1355.0,696.8 L1366.6,696.7 L1378.3,696.2 L1390.0,694.9 L1401.7,691.8 L1413.4,691.3 L1425.1,693.3 L1436.8,695.6 L1448.4,694.4 L1460.1,694.8 L1471.8,695.0 L1483.5,696.9 L1495.2,693.5 L1506.9,692.0 L1518.6,692.6 L1530.2,696.4 L1541.9,693.8 L1553.6,696.0 L1565.3,692.7 L1577.0,694.3 L1588.7,691.4 L1600.4,692.2 L1612.0,696.3 L1623.7,695.1 L1635.4,691.5 L1647.1,694.2 L1658.8,694.4 L1670.5,694.4 L1682.2,692.4 L1693.8,691.4 L1693.8,699 Z" fill="#c0b8a8" fill-opacity="0.3"/><path d="M981.0,692.8 L992.7,696.7 L1004.4,695.8 L1016.1,695.3 L1027.7,694.8 L1039.4,696.4 L1051.1,694.5 L1062.8,695.1 L1074.5,692.5 L1086.2,693.7 L1097.9,691.6 L1109.5,693.1 L1121.2,692.4 L1132.9,693.6 L1144.6,694.3 L1156.3,692.1 L1168.0,693.1 L1179.7,691.3 L1191.3,692.6 L1203.0,692.8 L1214.7,695.4 L1226.4,692.1 L1238.1,694.7 L1249.8,696.2 L1261.5,696.6 L1273.2,696.0 L1284.8,695.4 L1296.5,692.9 L1308.2,695.3 L1319.9,696.6 L1331.6,692.4 L1343.3,693.7 L1355.0,696.8 L1366.6,696.7 L1378.3,696.2 L1390.0,694.9 L1401.7,691.8 L1413.4,691.3 L1425.1,693.3 L1436.8,695.6 L1448.4,694.4 L1460.1,694.8 L1471.8,695.0 L1483.5,696.9 L1495.2,693.5 L1506.9,692.0 L1518.6,692.6 L1530.2,696.4 L1541.9,693.8 L1553.6,696.0 L1565.3,692.7 L1577.0,694.3 L1588.7,691.4 L1600.4,692.2 L1612.0,696.3 L1623.7,695.1 L1635.4,691.5 L1647.1,694.2 L1658.8,694.4 L1670.5,694.4 L1682.2,692.4 L1693.8,691.4" fill="none" stroke="#c0b8a8" stroke-width="1.5" stroke-linejoin="round"/><path d="M981.0,699 L981.0,695.9 L992.7,694.1 L1004.4,695.6 L1016.1,697.6 L1027.7,694.7 L1039.4,696.3 L1051.1,697.8 L1062.8,694.1 L1074.5,697.9 L1086.2,695.7 L1097.9,696.1 L1109.5,694.5 L1121.2,696.4 L1132.9,697.1 L1144.6,696.9 L1156.3,697.2 L1168.0,695.8 L1179.7,696.6 L1191.3,695.0 L1203.0,697.0 L1214.7,696.6 L1226.4,697.0 L1238.1,694.1 L1249.8,694.6 L1261.5,694.6 L1273.2,695.5 L1284.8,696.4 L1296.5,697.4 L1308.2,694.7 L1319.9,696.0 L1331.6,697.8 L1343.3,697.3 L1355.0,697.6 L1366.6,695.1 L1378.3,694.4 L1390.0,697.2 L1401.7,694.8 L1413.4,696.7 L1425.1,695.3 L1436.8,694.5 L1448.4,695.5 L1460.1,694.8 L1471.8,696.5 L1483.5,698.0 L1495.2,696.0 L1506.9,695.7 L1518.6,697.3 L1530.2,696.4 L1541.9,696.7 L1553.6,697.9 L1565.3,696.8 L1577.0,696.5 L1588.7,696.1 L1600.4,695.2 L1612.0,696.4 L1623.7,694.1 L1635.4,694.7 L1647.1,694.3 L1658.8,695.2 L1670.5,695.3 L1682.2,695.9 L1693.8,694.8 L1693.8,699 Z" fill="#a8b8c8" fill-opacity="0.3"/><path d="M981.0,695.9 L992.7,694.1 L1004.4,695.6 L1016.1,697.6 L1027.7,694.7 L1039.4,696.3 L1051.1,697.8 L1062.8,694.1 L1074.5,697.9 L1086.2,695.7 L1097.9,696.1 L1109.5,694.5 L1121.2,696.4 L1132.9,697.1 L1144.6,696.9 L1156.3,697.2 L1168.0,695.8 L1179.7,696.6 L1191.3,695.0 L1203.0,697.0 L1214.7,696.6 L1226.4,697.0 L1238.1,694.1 L1249.8,694.6 L1261.5,694.6 L1273.2,695.5 L1284.8,696.4 L1296.5,697.4 L1308.2,694.7 L1319.9,696.0 L1331.6,697.8 L1343.3,697.3 L1355.0,697.6 L1366.6,695.1 L1378.3,694.4 L1390.0,697.2 L1401.7,694.8 L1413.4,696.7 L1425.1,695.3 L1436.8,694.5 L1448.4,695.5 L1460.1,694.8 L1471.8,696.5 L1483.5,698.0 L1495.2,696.0 L1506.9,695.7 L1518.6,697.3 L1530.2,696.4 L1541.9,696.7 L1553.6,697.9 L1565.3,696.8 L1577.0,696.5 L1588.7,696.1 L1600.4,695.2 L1612.0,696.4 L1623.7,694.1 L1635.4,694.7 L1647.1,694.3 L1658.8,695.2 L1670.5,695.3 L1682.2,695.9 L1693.8,694.8" fill="none" stroke="#a8b8c8" stroke-width="1.5" stroke-linejoin="round"/><path d="M981.0,699 L981.0,684.4 L992.7,682.1 L1004.4,681.2 L1016.1,682.8 L1027.7,685.2 L1039.4,687.2 L1051.1,687.1 L1062.8,684.4 L1074.5,682.2 L1086.2,680.4 L1097.9,680.9 L1109.5,684.9 L1121.2,678.7 L1132.9,685.3 L1144.6,680.8 L1156.3,687.3 L1168.0,680.5 L1179.7,681.3 L1191.3,678.4 L1203.0,679.0 L1214.7,681.1 L1226.4,679.6 L1238.1,680.6 L1249.8,681.9 L1261.5,685.9 L1273.2,682.8 L1284.8,679.0 L1296.5,685.6 L1308.2,678.3 L1319.9,682.6 L1331.6,684.1 L1343.3,688.0 L1355.0,684.1 L1366.6,686.2 L1378.3,681.5 L1390.0,679.0 L1401.7,678.9 L1413.4,681.9 L1425.1,684.1 L1436.8,686.9 L1448.4,681.1 L1460.1,682.5 L1471.8,680.8 L1483.5,684.3 L1495.2,679.1 L1506.9,685.9 L1518.6,684.9 L1530.2,685.3 L1541.9,681.8 L1553.6,679.0 L1565.3,686.3 L1577.0,681.7 L1588.7,680.3 L1600.4,685.8 L1612.0,687.4 L1623.7,682.3 L1635.4,679.7 L1647.1,679.2 L1658.8,680.7 L1670.5,683.8 L1682.2,683.7 L1693.8,682.7 L1693.8,699 Z" fill="#8a9ad0" fill-opacity="0.2"/><path d="M981.0,684.4 L992.7,682.1 L1004.4,681.2 L1016.1,682.8 L1027.7,685.2 L1039.4,687.2 L1051.1,687.1 L1062.8,684.4 L1074.5,682.2 L1086.2,680.4 L1097.9,680.9 L1109.5,684.9 L1121.2,678.7 L1132.9,685.3 L1144.6,680.8 L1156.3,687.3 L1168.0,680.5 L1179.7,681.3 L1191.3,678.4 L1203.0,679.0 L1214.7,681.1 L1226.4,679.6 L1238.1,680.6 L1249.8,681.9 L1261.5,685.9 L1273.2,682.8 L1284.8,679.0 L1296.5,685.6 L1308.2,678.3 L1319.9,682.6 L1331.6,684.1 L1343.3,688.0 L1355.0,684.1 L1366.6,686.2 L1378.3,681.5 L1390.0,679.0 L1401.7,678.9 L1413.4,681.9 L1425.1,684.1 L1436.8,686.9 L1448.4,681.1 L1460.1,682.5 L1471.8,680.8 L1483.5,684.3 L1495.2,679.1 L1506.9,685.9 L1518.6,684.9 L1530.2,685.3 L1541.9,681.8 L1553.6,679.0 L1565.3,686.3 L1577.0,681.7 L1588.7,680.3 L1600.4,685.8 L1612.0,687.4 L1623.7,682.3 L1635.4,679.7 L1647.1,679.2 L1658.8,680.7 L1670.5,683.8 L1682.2,683.7 L1693.8,682.7" fill="none" stroke="#8a9ad0" stroke-width="1.5" stroke-linejoin="round"/><circle cx="1725" cy="523.8" r="4.1" fill="#e3a25e"/><g fill="none" stroke="#9aa6ba" stroke-width="1"><rect x="1850.9" y="518.7" width="3.1" height="2.2" rx="0.5"/><rect x="1850.9" y="522.7" width="3.1" height="2.2" rx="0.5" fill="#6b778c"/><rect x="1850.9" y="526.7" width="3.1" height="2.2" rx="0.5"/></g><circle cx="1725" cy="545.8" r="4.1" fill="#7a90e0"/><g fill="none" stroke="#9aa6ba" stroke-width="1"><rect x="1850.9" y="540.7" width="3.1" height="2.2" rx="0.5"/><rect x="1850.9" y="544.7" width="3.1" height="2.2" rx="0.5" fill="#6b778c"/><rect x="1850.9" y="548.7" width="3.1" height="2.2" rx="0.5"/></g><circle cx="1725" cy="567.8" r="4.1" fill="#7dc14b"/><g fill="none" stroke="#9aa6ba" stroke-width="1"><rect x="1850.9" y="562.7" width="3.1" height="2.2" rx="0.5"/><rect x="1850.9" y="566.7" width="3.1" height="2.2" rx="0.5" fill="#6b778c"/><rect x="1850.9" y="570.7" width="3.1" height="2.2" rx="0.5"/></g><circle cx="1725" cy="589.8" r="4.1" fill="#7a90e0"/><g fill="none" stroke="#9aa6ba" stroke-width="1"><rect x="1850.9" y="584.7" width="3.1" height="2.2" rx="0.5"/><rect x="1850.9" y="588.7" width="3.1" height="2.2" rx="0.5" fill="#6b778c"/><rect x="1850.9" y="592.7" width="3.1" height="2.2" rx="0.5"/></g><circle cx="1725" cy="611.8" r="4.1" fill="#d64550"/><g fill="none" stroke="#9aa6ba" stroke-width="1"><rect x="1850.9" y="606.7" width="3.1" height="2.2" rx="0.5"/><rect x="1850.9" y="610.7" width="3.1" height="2.2" rx="0.5" fill="#6b778c"/><rect x="1850.9" y="614.7" width="3.1" height="2.2" rx="0.5"/></g><circle cx="1725" cy="633.8" r="4.1" fill="#4cc67a"/><g fill="none" stroke="#9aa6ba" stroke-width="1"><rect x="1850.9" y="628.7" width="3.1" height="2.2" rx="0.5"/><rect x="1850.9" y="632.7" width="3.1" height="2.2" rx="0.5" fill="#6b778c"/><rect x="1850.9" y="636.7" width="3.1" height="2.2" rx="0.5"/></g><circle cx="1725" cy="655.8" r="4.1" fill="#8dc54b"/><g fill="none" stroke="#9aa6ba" stroke-width="1"><rect x="1850.9" y="650.7" width="3.1" height="2.2" rx="0.5"/><rect x="1850.9" y="654.7" width="3.1" height="2.2" rx="0.5" fill="#6b778c"/><rect x="1850.9" y="658.7" width="3.1" height="2.2" rx="0.5"/></g><circle cx="1725" cy="677.8" r="4.1" fill="#7a90e0"/><g fill="none" stroke="#9aa6ba" stroke-width="1"><rect x="1850.9" y="672.7" width="3.1" height="2.2" rx="0.5"/><rect x="1850.9" y="676.7" width="3.1" height="2.2" rx="0.5" fill="#6b778c"/><rect x="1850.9" y="680.7" width="3.1" height="2.2" rx="0.5"/></g><circle cx="1725" cy="699.8" r="4.1" fill="#2fb8c8"/><g fill="none" stroke="#9aa6ba" stroke-width="1"><rect x="1850.9" y="694.7" width="3.1" height="2.2" rx="0.5"/><rect x="1850.9" y="698.7" width="3.1" height="2.2" rx="0.5" fill="#6b778c"/><rect x="1850.9" y="702.7" width="3.1" height="2.2" rx="0.5"/></g><circle cx="1725" cy="721.8" r="4.1" fill="#d6b845"/><g fill="none" stroke="#9aa6ba" stroke-width="1"><rect x="1850.9" y="716.7" width="3.1" height="2.2" rx="0.5"/><rect x="1850.9" y="720.7" width="3.1" height="2.2" rx="0.5" fill="#6b778c"/><rect x="1850.9" y="724.7" width="3.1" height="2.2" rx="0.5"/></g><path d="M1868,508 L1871,504.5 L1874,508 Z" fill="#3d4b66"/><rect x="1868" y="513" width="6" height="137" rx="3" fill="#3d4b66"/><path d="M1868,726 L1871,729.5 L1874,726 Z" fill="#3d4b66"/><rect x="1881.5" y="534.5" width="12" height="44" rx="5" fill="#e9eef5" stroke="#8bd04e" stroke-width="2"/></svg>
<div class="t" style="right:915.4px;top:508.8px;font-size:10.75px;color:#a2aec2;font-weight:400">200,000</div>
<div class="t" style="right:915.4px;top:533.9px;font-size:10.75px;color:#a2aec2;font-weight:400">150,000</div>
<div class="t" style="right:915.4px;top:563.2px;font-size:10.75px;color:#a2aec2;font-weight:400">100,000</div>
<div class="t" style="right:915.4px;top:601.3px;font-size:10.75px;color:#a2aec2;font-weight:400">50,000</div>
<div class="t" style="right:915.4px;top:691.8px;font-size:10.75px;color:#a2aec2;font-weight:400">0</div>
<div class="t" style="left:1075.6px;top:701.4px;font-size:10.75px;color:#a2aec2;font-weight:400">5th</div>
<div class="t" style="left:1239.2px;top:701.4px;font-size:10.75px;color:#a2aec2;font-weight:400">12th</div>
<div class="t" style="left:1402.3px;top:701.4px;font-size:10.75px;color:#a2aec2;font-weight:400">19th</div>
<div class="t" style="left:1566.0px;top:701.4px;font-size:10.75px;color:#a2aec2;font-weight:400">26th</div>
<div class="t" style="left:983.0px;top:711.7px;font-size:10.75px;color:#a2aec2;font-weight:400">January 2026</div>
<div class="t" style="left:1736.5px;top:516.7px;font-size:12.6px;color:#cfd6e2;font-weight:400">United States</div>
<div class="t" style="left:1736.5px;top:538.7px;font-size:12.6px;color:#cfd6e2;font-weight:400">The Netherlands</div>
<div class="t" style="left:1736.5px;top:560.7px;font-size:12.6px;color:#cfd6e2;font-weight:400">Romania</div>
<div class="t" style="left:1736.5px;top:582.7px;font-size:12.6px;color:#cfd6e2;font-weight:400">Germany</div>
<div class="t" style="left:1736.5px;top:604.7px;font-size:12.6px;color:#cfd6e2;font-weight:400">Ukraine</div>
<div class="t" style="left:1736.5px;top:626.7px;font-size:12.6px;color:#cfd6e2;font-weight:400">China</div>
<div class="t" style="left:1736.5px;top:648.7px;font-size:12.6px;color:#cfd6e2;font-weight:400">Iran</div>
<div class="t" style="left:1736.5px;top:670.7px;font-size:12.6px;color:#cfd6e2;font-weight:400">Brazil</div>
<div class="t" style="left:1736.5px;top:692.7px;font-size:12.6px;color:#cfd6e2;font-weight:400">Hong Kong</div>
<div class="t" style="left:1736.5px;top:714.7px;font-size:12.6px;color:#cfd6e2;font-weight:400">Indonesia</div>
<div class="abs" style="left:1746px;top:17px;width:127px;height:32px;background:#0b1628;border:1px solid #2b3a52;border-bottom:none;border-radius:6px 6px 0 0;z-index:5"><svg width="127" height="32"><g stroke="#dfe5ef" stroke-width="1.2" fill="none"><line x1="10" y1="13" x2="19" y2="13"/><line x1="12" y1="16" x2="17" y2="16"/><line x1="13.5" y1="19" x2="15.5" y2="19"/><circle cx="38" cy="16" r="7.5"/><path d="M41.5,12.5 L39.5,17.5 L34.5,19.5 L36.5,14.5 Z"/><path d="M62,23 L57,23 L57,10 L70,10 L70,15" /><g stroke-dasharray="1 1.5" stroke-width="0.9"><line x1="57" y1="13" x2="70" y2="13"/><line x1="60" y1="10" x2="60" y2="23"/></g><circle cx="66" cy="18.5" r="3.8"/><line x1="68.8" y1="21.3" x2="71.5" y2="24"/><line x1="81" y1="22" x2="85" y2="18"/><line x1="89" y1="14" x2="93" y2="10"/><polyline points="80,18 80,23 85,23"/><polyline points="89,9.5 94,9.5 94,14.5"/><rect x="109" y="8.5" width="3" height="3"/><rect x="109" y="14.5" width="3" height="3"/><rect x="109" y="20.5" width="3" height="3"/></g></svg></div>
</div></body></html>
